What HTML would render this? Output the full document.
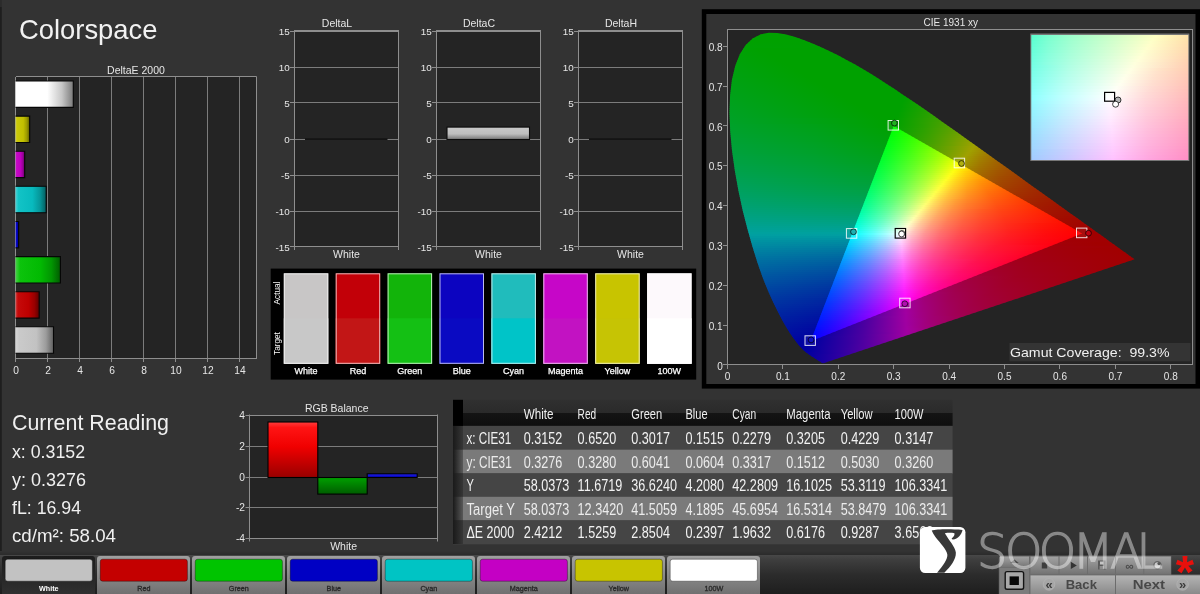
<!DOCTYPE html>
<html lang="en"><head><meta charset="utf-8"><title>Colorspace</title>
<style>
html,body{margin:0;padding:0;background:#333333;overflow:hidden}
svg{display:block;font-family:"Liberation Sans", sans-serif;will-change:transform}
</style></head><body>
<svg width="1200" height="594" viewBox="0 0 1200 594">
<defs>
<linearGradient id="bew100" x1="0" x2="1" y1="0" y2="0"><stop offset="0" stop-color="#ffffff"/><stop offset=".1" stop-color="#ffffff"/><stop offset=".55" stop-color="#ffffff"/><stop offset=".8" stop-color="#c7c7c7"/><stop offset="1" stop-color="#7a7a7a"/></linearGradient>
<linearGradient id="beyel" x1="0" x2="1" y1="0" y2="0"><stop offset="0" stop-color="#d7d647"/><stop offset=".1" stop-color="#cac80a"/><stop offset=".55" stop-color="#c2c000"/><stop offset=".8" stop-color="#9c9a00"/><stop offset="1" stop-color="#605f00"/></linearGradient>
<linearGradient id="bemag" x1="0" x2="1" y1="0" y2="0"><stop offset="0" stop-color="#d547d5"/><stop offset=".1" stop-color="#c60ac6"/><stop offset=".55" stop-color="#be00be"/><stop offset=".8" stop-color="#990099"/><stop offset="1" stop-color="#5e005e"/></linearGradient>
<linearGradient id="becya" x1="0" x2="1" y1="0" y2="0"><stop offset="0" stop-color="#4dd2d5"/><stop offset=".1" stop-color="#12c3c6"/><stop offset=".55" stop-color="#08babe"/><stop offset=".8" stop-color="#069699"/><stop offset="1" stop-color="#045c5e"/></linearGradient>
<linearGradient id="beblu" x1="0" x2="1" y1="0" y2="0"><stop offset="0" stop-color="#4747d5"/><stop offset=".1" stop-color="#0a0ac6"/><stop offset=".55" stop-color="#0000be"/><stop offset=".8" stop-color="#000099"/><stop offset="1" stop-color="#00005e"/></linearGradient>
<linearGradient id="begrn" x1="0" x2="1" y1="0" y2="0"><stop offset="0" stop-color="#49d249"/><stop offset=".1" stop-color="#0cc30c"/><stop offset=".55" stop-color="#02ba02"/><stop offset=".8" stop-color="#029602"/><stop offset="1" stop-color="#015c01"/></linearGradient>
<linearGradient id="bered" x1="0" x2="1" y1="0" y2="0"><stop offset="0" stop-color="#d54747"/><stop offset=".1" stop-color="#c60a0a"/><stop offset=".55" stop-color="#be0000"/><stop offset=".8" stop-color="#990000"/><stop offset="1" stop-color="#5e0000"/></linearGradient>
<linearGradient id="bewht" x1="0" x2="1" y1="0" y2="0"><stop offset="0" stop-color="#d7d7d7"/><stop offset=".1" stop-color="#cacaca"/><stop offset=".55" stop-color="#c2c2c2"/><stop offset=".8" stop-color="#9c9c9c"/><stop offset="1" stop-color="#606060"/></linearGradient>
<linearGradient id="bdc" x1="0" x2="0" y1="0" y2="1"><stop offset="0" stop-color="#cacaca"/><stop offset=".55" stop-color="#bebebe"/><stop offset="1" stop-color="#767676"/></linearGradient>
<clipPath id="hsclip"><path d="M824.0 363.1L824.0 363.1L823.9 363.1L823.9 363.1L823.9 363.1L823.8 363.1L823.8 363.1L823.7 363.1L823.6 363.1L823.6 363.2L823.5 363.2L823.5 363.2L823.4 363.2L823.3 363.2L823.2 363.2L823.1 363.2L823.0 363.2L822.9 363.2L822.8 363.2L822.7 363.1L822.5 363.1L822.2 363.0L822.0 362.9L821.7 362.7L821.4 362.5L821.1 362.3L820.7 362.1L820.2 361.8L819.7 361.5L819.2 361.2L818.6 360.8L817.9 360.3L817.2 359.9L816.3 359.3L815.4 358.7L814.3 358.0L813.1 357.3L811.8 356.5L810.4 355.6L808.9 354.5L807.3 353.3L805.5 351.9L803.6 350.2L801.5 348.1L799.0 345.4L796.3 342.1L793.3 338.1L790.0 333.2L786.4 327.4L782.4 320.4L778.1 312.2L773.3 302.6L768.2 291.3L763.0 278.4L757.8 263.8L752.7 247.5L747.6 229.6L742.7 210.4L738.4 190.6L734.8 170.5L732.0 150.4L730.2 131.0L729.5 112.7L730.1 95.6L731.9 79.9L735.2 66.0L739.8 54.3L745.7 45.0L752.6 38.4L760.4 34.4L768.7 32.7L777.3 32.9L786.2 34.5L795.3 37.1L804.4 40.2L813.2 43.8L821.8 47.5L830.2 51.4L838.5 55.5L846.6 59.9L854.7 64.3L862.8 69.0L870.8 73.8L878.7 78.8L886.7 83.9L894.6 89.1L902.5 94.4L910.5 99.7L918.4 105.1L926.3 110.6L934.2 116.1L942.1 121.7L950.0 127.2L957.9 132.8L965.8 138.4L973.6 143.9L981.3 149.5L989.0 155.0L996.6 160.4L1004.1 165.8L1011.5 171.1L1018.7 176.3L1025.9 181.4L1032.8 186.4L1039.6 191.2L1046.2 196.0L1052.6 200.5L1058.7 204.9L1064.4 209.0L1069.8 212.9L1074.9 216.6L1079.9 220.1L1084.5 223.4L1088.8 226.5L1092.7 229.3L1096.4 231.9L1099.8 234.3L1102.9 236.6L1105.7 238.6L1108.3 240.5L1110.7 242.2L1112.8 243.7L1114.8 245.1L1116.6 246.4L1118.2 247.6L1119.8 248.7L1121.2 249.7L1122.5 250.7L1123.7 251.5L1124.9 252.3L1125.9 253.1L1126.9 253.8L1127.7 254.4L1128.5 254.9L1129.2 255.4L1129.8 255.9L1130.3 256.2L1130.8 256.6L1131.2 256.9L1131.6 257.2L1132.0 257.4L1132.3 257.6L1132.5 257.8L1132.7 258.0L1132.9 258.1L1133.1 258.2L1133.3 258.4L1133.4 258.5L1133.6 258.6L1133.7 258.7L1133.9 258.8L1134.0 258.9L1134.2 259.0L1134.3 259.1L1134.4 259.2L1134.4 259.2L1134.5 259.2L1134.5 259.3L1134.6 259.3L1134.6 259.3L1134.6 259.3Z"/></clipPath>
<clipPath id="triclip"><path d="M1082.1 233.5L893.7 125.9L810.6 341.2Z"/></clipPath>
<linearGradient id="h0" gradientUnits="userSpaceOnUse" x1="760" x2="785" y1="0" y2="0"><stop offset="0" stop-color="#00a100"/><stop offset="1" stop-color="#00a100"/></linearGradient>
<linearGradient id="h1" gradientUnits="userSpaceOnUse" x1="755" x2="793" y1="0" y2="0"><stop offset="0" stop-color="#00a100"/><stop offset="1" stop-color="#00a100"/></linearGradient>
<linearGradient id="h2" gradientUnits="userSpaceOnUse" x1="752" x2="800" y1="0" y2="0"><stop offset="0" stop-color="#00a100"/><stop offset="1" stop-color="#00a100"/></linearGradient>
<linearGradient id="h3" gradientUnits="userSpaceOnUse" x1="749" x2="805" y1="0" y2="0"><stop offset="0" stop-color="#00a100"/><stop offset="1" stop-color="#00a100"/></linearGradient>
<linearGradient id="h4" gradientUnits="userSpaceOnUse" x1="747" x2="810" y1="0" y2="0"><stop offset="0" stop-color="#00a100"/><stop offset="1" stop-color="#00a100"/></linearGradient>
<linearGradient id="h5" gradientUnits="userSpaceOnUse" x1="745" x2="815" y1="0" y2="0"><stop offset="0" stop-color="#00a101"/><stop offset="1" stop-color="#00a100"/></linearGradient>
<linearGradient id="h6" gradientUnits="userSpaceOnUse" x1="743" x2="820" y1="0" y2="0"><stop offset="0" stop-color="#00a102"/><stop offset="1" stop-color="#00a100"/></linearGradient>
<linearGradient id="h7" gradientUnits="userSpaceOnUse" x1="742" x2="824" y1="0" y2="0"><stop offset="0" stop-color="#00a103"/><stop offset="1" stop-color="#00a100"/></linearGradient>
<linearGradient id="h8" gradientUnits="userSpaceOnUse" x1="741" x2="829" y1="0" y2="0"><stop offset="0" stop-color="#00a104"/><stop offset=".205" stop-color="#00a100"/><stop offset="1" stop-color="#00a100"/></linearGradient>
<linearGradient id="h9" gradientUnits="userSpaceOnUse" x1="740" x2="833" y1="0" y2="0"><stop offset="0" stop-color="#00a104"/><stop offset=".247" stop-color="#00a100"/><stop offset="1" stop-color="#00a100"/></linearGradient>
<linearGradient id="h10" gradientUnits="userSpaceOnUse" x1="738" x2="837" y1="0" y2="0"><stop offset="0" stop-color="#00a106"/><stop offset=".283" stop-color="#00a100"/><stop offset="1" stop-color="#00a100"/></linearGradient>
<linearGradient id="h11" gradientUnits="userSpaceOnUse" x1="738" x2="841" y1="0" y2="0"><stop offset="0" stop-color="#00a106"/><stop offset=".311" stop-color="#00a100"/><stop offset="1" stop-color="#00a100"/></linearGradient>
<linearGradient id="h12" gradientUnits="userSpaceOnUse" x1="737" x2="845" y1="0" y2="0"><stop offset="0" stop-color="#00a107"/><stop offset=".333" stop-color="#00a100"/><stop offset="1" stop-color="#00a100"/></linearGradient>
<linearGradient id="h13" gradientUnits="userSpaceOnUse" x1="736" x2="848" y1="0" y2="0"><stop offset="0" stop-color="#00a108"/><stop offset=".366" stop-color="#00a100"/><stop offset="1" stop-color="#00a100"/></linearGradient>
<linearGradient id="h14" gradientUnits="userSpaceOnUse" x1="735" x2="852" y1="0" y2="0"><stop offset="0" stop-color="#00a109"/><stop offset=".385" stop-color="#00a100"/><stop offset="1" stop-color="#00a100"/></linearGradient>
<linearGradient id="h15" gradientUnits="userSpaceOnUse" x1="734" x2="856" y1="0" y2="0"><stop offset="0" stop-color="#00a10a"/><stop offset=".41" stop-color="#00a100"/><stop offset="1" stop-color="#00a100"/></linearGradient>
<linearGradient id="h16" gradientUnits="userSpaceOnUse" x1="734" x2="859" y1="0" y2="0"><stop offset="0" stop-color="#00a10b"/><stop offset=".424" stop-color="#00a100"/><stop offset="1" stop-color="#00a100"/></linearGradient>
<linearGradient id="h17" gradientUnits="userSpaceOnUse" x1="733" x2="863" y1="0" y2="0"><stop offset="0" stop-color="#00a10c"/><stop offset=".446" stop-color="#00a100"/><stop offset="1" stop-color="#00a100"/></linearGradient>
<linearGradient id="h18" gradientUnits="userSpaceOnUse" x1="733" x2="866" y1="0" y2="0"><stop offset="0" stop-color="#00a10d"/><stop offset=".459" stop-color="#00a100"/><stop offset="1" stop-color="#00a100"/></linearGradient>
<linearGradient id="h19" gradientUnits="userSpaceOnUse" x1="732" x2="869" y1="0" y2="0"><stop offset="0" stop-color="#00a10e"/><stop offset=".482" stop-color="#00a100"/><stop offset="1" stop-color="#00a100"/></linearGradient>
<linearGradient id="h20" gradientUnits="userSpaceOnUse" x1="732" x2="873" y1="0" y2="0"><stop offset="0" stop-color="#00a10f"/><stop offset=".489" stop-color="#00a100"/><stop offset="1" stop-color="#00a100"/></linearGradient>
<linearGradient id="h21" gradientUnits="userSpaceOnUse" x1="731" x2="876" y1="0" y2="0"><stop offset="0" stop-color="#00a110"/><stop offset=".51" stop-color="#00a100"/><stop offset="1" stop-color="#00a100"/></linearGradient>
<linearGradient id="h22" gradientUnits="userSpaceOnUse" x1="731" x2="879" y1="0" y2="0"><stop offset="0" stop-color="#00a110"/><stop offset=".52" stop-color="#00a100"/><stop offset="1" stop-color="#00a100"/></linearGradient>
<linearGradient id="h23" gradientUnits="userSpaceOnUse" x1="730" x2="882" y1="0" y2="0"><stop offset="0" stop-color="#00a112"/><stop offset=".539" stop-color="#00a100"/><stop offset="1" stop-color="#00a100"/></linearGradient>
<linearGradient id="h24" gradientUnits="userSpaceOnUse" x1="730" x2="885" y1="0" y2="0"><stop offset="0" stop-color="#00a112"/><stop offset=".548" stop-color="#00a100"/><stop offset="1" stop-color="#00a100"/></linearGradient>
<linearGradient id="h25" gradientUnits="userSpaceOnUse" x1="730" x2="888" y1="0" y2="0"><stop offset="0" stop-color="#00a113"/><stop offset=".563" stop-color="#00a100"/><stop offset="1" stop-color="#00a100"/></linearGradient>
<linearGradient id="h26" gradientUnits="userSpaceOnUse" x1="730" x2="891" y1="0" y2="0"><stop offset="0" stop-color="#00a114"/><stop offset=".571" stop-color="#00a100"/><stop offset="1" stop-color="#00a100"/></linearGradient>
<linearGradient id="h27" gradientUnits="userSpaceOnUse" x1="729" x2="894" y1="0" y2="0"><stop offset="0" stop-color="#00a115"/><stop offset=".588" stop-color="#00a100"/><stop offset="1" stop-color="#00a100"/></linearGradient>
<linearGradient id="h28" gradientUnits="userSpaceOnUse" x1="729" x2="898" y1="0" y2="0"><stop offset="0" stop-color="#00a116"/><stop offset=".592" stop-color="#00a100"/><stop offset="1" stop-color="#00a100"/></linearGradient>
<linearGradient id="h29" gradientUnits="userSpaceOnUse" x1="729" x2="901" y1="0" y2="0"><stop offset="0" stop-color="#00a117"/><stop offset=".605" stop-color="#00a100"/><stop offset="1" stop-color="#00a100"/></linearGradient>
<linearGradient id="h30" gradientUnits="userSpaceOnUse" x1="729" x2="904" y1="0" y2="0"><stop offset="0" stop-color="#00a118"/><stop offset=".611" stop-color="#00a100"/><stop offset="1" stop-color="#00a100"/></linearGradient>
<linearGradient id="h31" gradientUnits="userSpaceOnUse" x1="729" x2="906" y1="0" y2="0"><stop offset="0" stop-color="#00a119"/><stop offset=".627" stop-color="#00a100"/><stop offset="1" stop-color="#00a100"/></linearGradient>
<linearGradient id="h32" gradientUnits="userSpaceOnUse" x1="728" x2="909" y1="0" y2="0"><stop offset="0" stop-color="#00a11a"/><stop offset=".635" stop-color="#00a100"/><stop offset=".972" stop-color="#00a100"/><stop offset="1" stop-color="#05a100"/></linearGradient>
<linearGradient id="h33" gradientUnits="userSpaceOnUse" x1="728" x2="912" y1="0" y2="0"><stop offset="0" stop-color="#00a11b"/><stop offset=".647" stop-color="#00a100"/><stop offset=".957" stop-color="#00a100"/><stop offset="1" stop-color="#09a100"/></linearGradient>
<linearGradient id="h34" gradientUnits="userSpaceOnUse" x1="728" x2="915" y1="0" y2="0"><stop offset="0" stop-color="#00a11c"/><stop offset=".652" stop-color="#00a100"/><stop offset=".936" stop-color="#00a100"/><stop offset="1" stop-color="#0ea100"/></linearGradient>
<linearGradient id="h35" gradientUnits="userSpaceOnUse" x1="728" x2="918" y1="0" y2="0"><stop offset="0" stop-color="#00a11d"/><stop offset=".663" stop-color="#00a100"/><stop offset=".916" stop-color="#00a100"/><stop offset="1" stop-color="#13a100"/></linearGradient>
<linearGradient id="h36" gradientUnits="userSpaceOnUse" x1="728" x2="921" y1="0" y2="0"><stop offset="0" stop-color="#00a11e"/><stop offset=".668" stop-color="#00a100"/><stop offset=".896" stop-color="#00a100"/><stop offset="1" stop-color="#18a100"/></linearGradient>
<linearGradient id="h37" gradientUnits="userSpaceOnUse" x1="728" x2="924" y1="0" y2="0"><stop offset="0" stop-color="#00a11f"/><stop offset=".679" stop-color="#00a100"/><stop offset=".883" stop-color="#00a100"/><stop offset="1" stop-color="#1da100"/></linearGradient>
<linearGradient id="h38" gradientUnits="userSpaceOnUse" x1="728" x2="927" y1="0" y2="0"><stop offset="0" stop-color="#00a120"/><stop offset=".683" stop-color="#00a100"/><stop offset=".864" stop-color="#00a100"/><stop offset="1" stop-color="#22a100"/></linearGradient>
<linearGradient id="h39" gradientUnits="userSpaceOnUse" x1="728" x2="930" y1="0" y2="0"><stop offset="0" stop-color="#00a122"/><stop offset=".693" stop-color="#00a100"/><stop offset=".847" stop-color="#00a100"/><stop offset="1" stop-color="#27a100"/></linearGradient>
<linearGradient id="h40" gradientUnits="userSpaceOnUse" x1="728" x2="933" y1="0" y2="0"><stop offset="0" stop-color="#00a123"/><stop offset=".698" stop-color="#00a100"/><stop offset=".829" stop-color="#00a100"/><stop offset="1" stop-color="#2da100"/></linearGradient>
<linearGradient id="h41" gradientUnits="userSpaceOnUse" x1="728" x2="936" y1="0" y2="0"><stop offset="0" stop-color="#00a124"/><stop offset=".707" stop-color="#00a100"/><stop offset=".817" stop-color="#00a100"/><stop offset="1" stop-color="#33a100"/></linearGradient>
<linearGradient id="h42" gradientUnits="userSpaceOnUse" x1="728" x2="938" y1="0" y2="0"><stop offset="0" stop-color="#00a125"/><stop offset=".714" stop-color="#00a100"/><stop offset=".805" stop-color="#00a100"/><stop offset="1" stop-color="#37a100"/></linearGradient>
<linearGradient id="h43" gradientUnits="userSpaceOnUse" x1="728" x2="941" y1="0" y2="0"><stop offset="0" stop-color="#00a126"/><stop offset=".385" stop-color="#00a114"/><stop offset=".718" stop-color="#00a100"/><stop offset=".789" stop-color="#00a100"/><stop offset="1" stop-color="#3ea100"/></linearGradient>
<linearGradient id="h44" gradientUnits="userSpaceOnUse" x1="728" x2="944" y1="0" y2="0"><stop offset="0" stop-color="#00a127"/><stop offset=".773" stop-color="#00a100"/><stop offset="1" stop-color="#44a100"/></linearGradient>
<linearGradient id="h45" gradientUnits="userSpaceOnUse" x1="728" x2="947" y1="0" y2="0"><stop offset="0" stop-color="#00a128"/><stop offset=".763" stop-color="#00a100"/><stop offset="1" stop-color="#4ba100"/></linearGradient>
<linearGradient id="h46" gradientUnits="userSpaceOnUse" x1="728" x2="950" y1="0" y2="0"><stop offset="0" stop-color="#00a12a"/><stop offset=".383" stop-color="#00a117"/><stop offset=".748" stop-color="#00a100"/><stop offset=".878" stop-color="#28a100"/><stop offset="1" stop-color="#52a100"/></linearGradient>
<linearGradient id="h47" gradientUnits="userSpaceOnUse" x1="728" x2="953" y1="0" y2="0"><stop offset="0" stop-color="#00a12b"/><stop offset=".396" stop-color="#00a117"/><stop offset=".733" stop-color="#00a101"/><stop offset=".867" stop-color="#29a100"/><stop offset="1" stop-color="#59a100"/></linearGradient>
<linearGradient id="h48" gradientUnits="userSpaceOnUse" x1="729" x2="955" y1="0" y2="0"><stop offset="0" stop-color="#00a12c"/><stop offset=".389" stop-color="#00a119"/><stop offset=".721" stop-color="#00a103"/><stop offset=".858" stop-color="#2ba100"/><stop offset="1" stop-color="#5fa100"/></linearGradient>
<linearGradient id="h49" gradientUnits="userSpaceOnUse" x1="729" x2="958" y1="0" y2="0"><stop offset="0" stop-color="#00a12d"/><stop offset=".384" stop-color="#00a11a"/><stop offset=".712" stop-color="#00a104"/><stop offset=".76" stop-color="#0fa100"/><stop offset=".86" stop-color="#31a100"/><stop offset="1" stop-color="#67a100"/></linearGradient>
<linearGradient id="h50" gradientUnits="userSpaceOnUse" x1="729" x2="961" y1="0" y2="0"><stop offset="0" stop-color="#00a12e"/><stop offset=".375" stop-color="#00a11c"/><stop offset=".698" stop-color="#00a105"/><stop offset=".763" stop-color="#15a100"/><stop offset=".853" stop-color="#34a100"/><stop offset="1" stop-color="#6fa100"/></linearGradient>
<linearGradient id="h51" gradientUnits="userSpaceOnUse" x1="729" x2="964" y1="0" y2="0"><stop offset="0" stop-color="#00a130"/><stop offset=".37" stop-color="#00a11d"/><stop offset=".685" stop-color="#00a107"/><stop offset=".77" stop-color="#1ca100"/><stop offset=".847" stop-color="#38a100"/><stop offset="1" stop-color="#78a100"/></linearGradient>
<linearGradient id="h52" gradientUnits="userSpaceOnUse" x1="729" x2="967" y1="0" y2="0"><stop offset="0" stop-color="#00a131"/><stop offset=".361" stop-color="#00a11f"/><stop offset=".672" stop-color="#00a109"/><stop offset=".773" stop-color="#22a100"/><stop offset=".84" stop-color="#3ba100"/><stop offset="1" stop-color="#81a100"/></linearGradient>
<linearGradient id="h53" gradientUnits="userSpaceOnUse" x1="729" x2="970" y1="0" y2="0"><stop offset="0" stop-color="#00a133"/><stop offset=".357" stop-color="#00a120"/><stop offset=".664" stop-color="#00a10a"/><stop offset=".78" stop-color="#2aa100"/><stop offset=".842" stop-color="#42a100"/><stop offset="1" stop-color="#8aa100"/></linearGradient>
<linearGradient id="h54" gradientUnits="userSpaceOnUse" x1="729" x2="972" y1="0" y2="0"><stop offset="0" stop-color="#00a134"/><stop offset=".354" stop-color="#00a121"/><stop offset=".654" stop-color="#00a10c"/><stop offset=".786" stop-color="#30a100"/><stop offset=".835" stop-color="#44a100"/><stop offset="1" stop-color="#92a100"/></linearGradient>
<linearGradient id="h55" gradientUnits="userSpaceOnUse" x1="730" x2="975" y1="0" y2="0"><stop offset="0" stop-color="#00a135"/><stop offset=".347" stop-color="#00a123"/><stop offset=".641" stop-color="#00a10e"/><stop offset=".788" stop-color="#37a100"/><stop offset=".829" stop-color="#48a100"/><stop offset="1" stop-color="#9ca100"/></linearGradient>
<linearGradient id="h56" gradientUnits="userSpaceOnUse" x1="730" x2="978" y1="0" y2="0"><stop offset="0" stop-color="#00a137"/><stop offset=".339" stop-color="#00a125"/><stop offset=".629" stop-color="#00a110"/><stop offset=".794" stop-color="#40a100"/><stop offset=".895" stop-color="#6ea100"/><stop offset=".988" stop-color="#9fa100"/><stop offset="1" stop-color="#a19b00"/></linearGradient>
<linearGradient id="h57" gradientUnits="userSpaceOnUse" x1="730" x2="981" y1="0" y2="0"><stop offset="0" stop-color="#00a138"/><stop offset=".335" stop-color="#00a126"/><stop offset=".622" stop-color="#01a111"/><stop offset=".805" stop-color="#4ba100"/><stop offset=".968" stop-color="#9fa100"/><stop offset="1" stop-color="#a19100"/></linearGradient>
<linearGradient id="h58" gradientUnits="userSpaceOnUse" x1="730" x2="984" y1="0" y2="0"><stop offset="0" stop-color="#00a139"/><stop offset=".331" stop-color="#00a128"/><stop offset=".61" stop-color="#00a113"/><stop offset=".791" stop-color="#4ba101"/><stop offset=".874" stop-color="#74a100"/><stop offset=".953" stop-color="#a0a100"/><stop offset="1" stop-color="#a18800"/></linearGradient>
<linearGradient id="h59" gradientUnits="userSpaceOnUse" x1="730" x2="986" y1="0" y2="0"><stop offset="0" stop-color="#00a13b"/><stop offset=".324" stop-color="#00a12a"/><stop offset=".602" stop-color="#00a115"/><stop offset=".777" stop-color="#4aa104"/><stop offset=".812" stop-color="#5ba100"/><stop offset=".938" stop-color="#a0a100"/><stop offset="1" stop-color="#a18200"/></linearGradient>
<linearGradient id="h60" gradientUnits="userSpaceOnUse" x1="731" x2="989" y1="0" y2="0"><stop offset="0" stop-color="#00a13c"/><stop offset=".318" stop-color="#00a12b"/><stop offset=".589" stop-color="#00a117"/><stop offset=".764" stop-color="#4aa106"/><stop offset=".814" stop-color="#64a100"/><stop offset=".919" stop-color="#9fa100"/><stop offset="1" stop-color="#a17a00"/></linearGradient>
<linearGradient id="h61" gradientUnits="userSpaceOnUse" x1="731" x2="992" y1="0" y2="0"><stop offset="0" stop-color="#00a13e"/><stop offset=".314" stop-color="#00a12d"/><stop offset=".579" stop-color="#00a119"/><stop offset=".659" stop-color="#20a112"/><stop offset=".747" stop-color="#49a108"/><stop offset=".82" stop-color="#6fa100"/><stop offset=".904" stop-color="#a0a100"/><stop offset=".95" stop-color="#a18800"/><stop offset="1" stop-color="#a17200"/></linearGradient>
<linearGradient id="h62" gradientUnits="userSpaceOnUse" x1="731" x2="995" y1="0" y2="0"><stop offset="0" stop-color="#00a140"/><stop offset=".311" stop-color="#00a12f"/><stop offset=".572" stop-color="#00a11b"/><stop offset=".739" stop-color="#4ba10a"/><stop offset=".822" stop-color="#78a100"/><stop offset=".886" stop-color="#a0a100"/><stop offset=".943" stop-color="#a18200"/><stop offset="1" stop-color="#a16b00"/></linearGradient>
<linearGradient id="h63" gradientUnits="userSpaceOnUse" x1="731" x2="998" y1="0" y2="0"><stop offset="0" stop-color="#00a141"/><stop offset=".303" stop-color="#00a131"/><stop offset=".562" stop-color="#00a11d"/><stop offset=".723" stop-color="#4aa10d"/><stop offset=".828" stop-color="#85a100"/><stop offset=".873" stop-color="#a1a000"/><stop offset=".933" stop-color="#a17f00"/><stop offset="1" stop-color="#a16500"/></linearGradient>
<linearGradient id="h64" gradientUnits="userSpaceOnUse" x1="732" x2="1000" y1="0" y2="0"><stop offset="0" stop-color="#00a143"/><stop offset=".299" stop-color="#00a132"/><stop offset=".552" stop-color="#00a11f"/><stop offset=".713" stop-color="#4aa10f"/><stop offset=".787" stop-color="#74a106"/><stop offset=".858" stop-color="#a0a100"/><stop offset=".922" stop-color="#a17e00"/><stop offset="1" stop-color="#a16000"/></linearGradient>
<linearGradient id="h65" gradientUnits="userSpaceOnUse" x1="732" x2="1003" y1="0" y2="0"><stop offset="0" stop-color="#00a144"/><stop offset=".292" stop-color="#00a134"/><stop offset=".542" stop-color="#00a121"/><stop offset=".697" stop-color="#49a112"/><stop offset=".771" stop-color="#73a109"/><stop offset=".841" stop-color="#a0a100"/><stop offset=".915" stop-color="#a17900"/><stop offset="1" stop-color="#a15a00"/></linearGradient>
<linearGradient id="h66" gradientUnits="userSpaceOnUse" x1="732" x2="1006" y1="0" y2="0"><stop offset="0" stop-color="#00a146"/><stop offset=".288" stop-color="#00a136"/><stop offset=".533" stop-color="#00a124"/><stop offset=".602" stop-color="#1ea11d"/><stop offset=".682" stop-color="#47a114"/><stop offset=".828" stop-color="#a1a002"/><stop offset=".905" stop-color="#a17600"/><stop offset="1" stop-color="#a15500"/></linearGradient>
<linearGradient id="h67" gradientUnits="userSpaceOnUse" x1="733" x2="1009" y1="0" y2="0"><stop offset="0" stop-color="#00a148"/><stop offset=".283" stop-color="#00a138"/><stop offset=".525" stop-color="#00a126"/><stop offset=".678" stop-color="#4ca116"/><stop offset=".746" stop-color="#75a10e"/><stop offset=".812" stop-color="#a1a105"/><stop offset=".851" stop-color="#a18800"/><stop offset=".895" stop-color="#a17300"/><stop offset="1" stop-color="#a15000"/></linearGradient>
<linearGradient id="h68" gradientUnits="userSpaceOnUse" x1="733" x2="1011" y1="0" y2="0"><stop offset="0" stop-color="#00a149"/><stop offset=".281" stop-color="#00a13a"/><stop offset=".518" stop-color="#00a128"/><stop offset=".665" stop-color="#4aa119"/><stop offset=".734" stop-color="#74a111"/><stop offset=".799" stop-color="#a0a108"/><stop offset=".849" stop-color="#a18200"/><stop offset=".888" stop-color="#a17000"/><stop offset="1" stop-color="#a14c00"/></linearGradient>
<linearGradient id="h69" gradientUnits="userSpaceOnUse" x1="733" x2="1014" y1="0" y2="0"><stop offset="0" stop-color="#00a14b"/><stop offset=".274" stop-color="#00a13c"/><stop offset=".509" stop-color="#00a12a"/><stop offset=".651" stop-color="#49a11c"/><stop offset=".786" stop-color="#a1a00a"/><stop offset=".829" stop-color="#a18503"/><stop offset=".879" stop-color="#a16d00"/><stop offset=".936" stop-color="#a15800"/><stop offset="1" stop-color="#a14700"/></linearGradient>
<linearGradient id="h70" gradientUnits="userSpaceOnUse" x1="734" x2="1017" y1="0" y2="0"><stop offset="0" stop-color="#00a14d"/><stop offset=".269" stop-color="#00a13e"/><stop offset=".498" stop-color="#00a12d"/><stop offset=".565" stop-color="#20a126"/><stop offset=".64" stop-color="#49a11e"/><stop offset=".707" stop-color="#73a116"/><stop offset=".77" stop-color="#a1a10e"/><stop offset=".816" stop-color="#a18305"/><stop offset=".869" stop-color="#a16a00"/><stop offset=".929" stop-color="#a15500"/><stop offset="1" stop-color="#a14300"/></linearGradient>
<linearGradient id="h71" gradientUnits="userSpaceOnUse" x1="734" x2="1020" y1="0" y2="0"><stop offset="0" stop-color="#00a14f"/><stop offset=".266" stop-color="#00a140"/><stop offset=".493" stop-color="#00a12f"/><stop offset=".633" stop-color="#4ca121"/><stop offset=".755" stop-color="#a0a111"/><stop offset=".804" stop-color="#a18108"/><stop offset=".86" stop-color="#a16700"/><stop offset=".923" stop-color="#a15200"/><stop offset="1" stop-color="#a13f00"/></linearGradient>
<linearGradient id="h72" gradientUnits="userSpaceOnUse" x1="734" x2="1023" y1="0" y2="0"><stop offset="0" stop-color="#00a151"/><stop offset=".263" stop-color="#00a142"/><stop offset=".484" stop-color="#00a132"/><stop offset=".619" stop-color="#4aa124"/><stop offset=".744" stop-color="#a1a014"/><stop offset=".792" stop-color="#a1800a"/><stop offset=".851" stop-color="#a16401"/><stop offset=".92" stop-color="#a14d00"/><stop offset="1" stop-color="#a13b00"/></linearGradient>
<linearGradient id="h73" gradientUnits="userSpaceOnUse" x1="735" x2="1025" y1="0" y2="0"><stop offset="0" stop-color="#00a153"/><stop offset=".259" stop-color="#00a145"/><stop offset=".476" stop-color="#00a134"/><stop offset=".61" stop-color="#4ba127"/><stop offset=".672" stop-color="#74a11f"/><stop offset=".731" stop-color="#a1a117"/><stop offset=".783" stop-color="#a17e0c"/><stop offset=".841" stop-color="#a16303"/><stop offset=".914" stop-color="#a14b00"/><stop offset="1" stop-color="#a13800"/></linearGradient>
<linearGradient id="h74" gradientUnits="userSpaceOnUse" x1="735" x2="1028" y1="0" y2="0"><stop offset="0" stop-color="#00a155"/><stop offset=".468" stop-color="#00a137"/><stop offset=".529" stop-color="#20a131"/><stop offset=".597" stop-color="#49a12a"/><stop offset=".659" stop-color="#73a123"/><stop offset=".717" stop-color="#a0a11b"/><stop offset=".771" stop-color="#a17c0e"/><stop offset=".833" stop-color="#a16005"/><stop offset=".908" stop-color="#a14800"/><stop offset="1" stop-color="#a13400"/></linearGradient>
<linearGradient id="h75" gradientUnits="userSpaceOnUse" x1="735" x2="1031" y1="0" y2="0"><stop offset="0" stop-color="#00a157"/><stop offset=".463" stop-color="#01a139"/><stop offset=".591" stop-color="#4ca12c"/><stop offset=".703" stop-color="#9fa11e"/><stop offset=".76" stop-color="#a17b10"/><stop offset=".824" stop-color="#a15d06"/><stop offset=".902" stop-color="#a14500"/><stop offset="1" stop-color="#a13100"/></linearGradient>
<linearGradient id="h76" gradientUnits="userSpaceOnUse" x1="736" x2="1034" y1="0" y2="0"><stop offset="0" stop-color="#00a159"/><stop offset=".453" stop-color="#00a13c"/><stop offset=".577" stop-color="#4aa130"/><stop offset=".691" stop-color="#a1a021"/><stop offset=".748" stop-color="#a17913"/><stop offset=".815" stop-color="#a15b07"/><stop offset=".876" stop-color="#a14700"/><stop offset="1" stop-color="#a12d00"/></linearGradient>
<linearGradient id="h77" gradientUnits="userSpaceOnUse" x1="736" x2="1037" y1="0" y2="0"><stop offset="0" stop-color="#00a15b"/><stop offset=".445" stop-color="#00a13f"/><stop offset=".568" stop-color="#4ba133"/><stop offset=".625" stop-color="#74a12c"/><stop offset=".678" stop-color="#a0a125"/><stop offset=".734" stop-color="#a17916"/><stop offset=".804" stop-color="#a15909"/><stop offset=".88" stop-color="#a14200"/><stop offset="1" stop-color="#a12a00"/></linearGradient>
<linearGradient id="h78" gradientUnits="userSpaceOnUse" x1="736" x2="1039" y1="0" y2="0"><stop offset="0" stop-color="#00a15d"/><stop offset=".439" stop-color="#00a142"/><stop offset=".558" stop-color="#49a137"/><stop offset=".614" stop-color="#73a130"/><stop offset=".667" stop-color="#9fa129"/><stop offset=".729" stop-color="#a17617"/><stop offset=".799" stop-color="#a1570a"/><stop offset=".884" stop-color="#a13d00"/><stop offset="1" stop-color="#a12800"/></linearGradient>
<linearGradient id="h79" gradientUnits="userSpaceOnUse" x1="737" x2="1042" y1="0" y2="0"><stop offset="0" stop-color="#00a15f"/><stop offset=".433" stop-color="#01a145"/><stop offset=".548" stop-color="#4aa13a"/><stop offset=".6" stop-color="#71a134"/><stop offset=".652" stop-color="#9ea12d"/><stop offset=".718" stop-color="#a17419"/><stop offset=".79" stop-color="#a1540c"/><stop offset=".889" stop-color="#a13900"/><stop offset="1" stop-color="#a12500"/></linearGradient>
<linearGradient id="h80" gradientUnits="userSpaceOnUse" x1="737" x2="1045" y1="0" y2="0"><stop offset="0" stop-color="#00a162"/><stop offset=".425" stop-color="#00a148"/><stop offset=".539" stop-color="#4aa13d"/><stop offset=".591" stop-color="#73a137"/><stop offset=".643" stop-color="#a0a131"/><stop offset=".672" stop-color="#a18926"/><stop offset=".705" stop-color="#a1741d"/><stop offset=".779" stop-color="#a1520d"/><stop offset=".89" stop-color="#a13500"/><stop offset="1" stop-color="#a12200"/></linearGradient>
<linearGradient id="h81" gradientUnits="userSpaceOnUse" x1="738" x2="1048" y1="0" y2="0"><stop offset="0" stop-color="#00a164"/><stop offset=".416" stop-color="#00a14b"/><stop offset=".529" stop-color="#4ba141"/><stop offset=".629" stop-color="#9fa135"/><stop offset=".694" stop-color="#a1721f"/><stop offset=".771" stop-color="#a1500f"/><stop offset=".89" stop-color="#a13100"/><stop offset="1" stop-color="#a12000"/></linearGradient>
<linearGradient id="h82" gradientUnits="userSpaceOnUse" x1="738" x2="1051" y1="0" y2="0"><stop offset="0" stop-color="#00a166"/><stop offset=".409" stop-color="#00a14f"/><stop offset=".518" stop-color="#49a145"/><stop offset=".569" stop-color="#72a13f"/><stop offset=".617" stop-color="#9ea139"/><stop offset=".684" stop-color="#a17121"/><stop offset=".764" stop-color="#a14d10"/><stop offset=".824" stop-color="#a13c07"/><stop offset=".895" stop-color="#a12d00"/><stop offset="1" stop-color="#a11d00"/></linearGradient>
<linearGradient id="h83" gradientUnits="userSpaceOnUse" x1="738" x2="1053" y1="0" y2="0"><stop offset="0" stop-color="#00a169"/><stop offset=".403" stop-color="#00a152"/><stop offset=".454" stop-color="#20a14e"/><stop offset=".511" stop-color="#4aa148"/><stop offset=".562" stop-color="#74a143"/><stop offset=".61" stop-color="#a0a13d"/><stop offset=".641" stop-color="#a1862f"/><stop offset=".673" stop-color="#a17125"/><stop offset=".756" stop-color="#a14c12"/><stop offset=".822" stop-color="#a13908"/><stop offset=".898" stop-color="#a12900"/><stop offset="1" stop-color="#a11b00"/></linearGradient>
<linearGradient id="h84" gradientUnits="userSpaceOnUse" x1="739" x2="1056" y1="0" y2="0"><stop offset="0" stop-color="#00a16b"/><stop offset=".397" stop-color="#01a155"/><stop offset=".502" stop-color="#4aa14c"/><stop offset=".549" stop-color="#72a147"/><stop offset=".596" stop-color="#9fa142"/><stop offset=".631" stop-color="#a18432"/><stop offset=".662" stop-color="#a16f27"/><stop offset=".744" stop-color="#a14b14"/><stop offset=".817" stop-color="#a13609"/><stop offset=".902" stop-color="#a12600"/><stop offset="1" stop-color="#a11900"/></linearGradient>
<linearGradient id="h85" gradientUnits="userSpaceOnUse" x1="739" x2="1059" y1="0" y2="0"><stop offset="0" stop-color="#00a16e"/><stop offset=".391" stop-color="#00a159"/><stop offset=".494" stop-color="#4ba150"/><stop offset=".584" stop-color="#9ea146"/><stop offset=".622" stop-color="#a18235"/><stop offset=".653" stop-color="#a16d29"/><stop offset=".694" stop-color="#a1591e"/><stop offset=".738" stop-color="#a14815"/><stop offset=".812" stop-color="#a13309"/><stop offset=".903" stop-color="#a12300"/><stop offset="1" stop-color="#a11600"/></linearGradient>
<linearGradient id="h86" gradientUnits="userSpaceOnUse" x1="740" x2="1062" y1="0" y2="0"><stop offset="0" stop-color="#00a170"/><stop offset=".382" stop-color="#00a15d"/><stop offset=".484" stop-color="#4ca154"/><stop offset=".531" stop-color="#75a14f"/><stop offset=".575" stop-color="#a0a14a"/><stop offset=".606" stop-color="#a1843a"/><stop offset=".64" stop-color="#a16d2d"/><stop offset=".68" stop-color="#a15821"/><stop offset=".727" stop-color="#a14717"/><stop offset=".807" stop-color="#a1310a"/><stop offset=".904" stop-color="#a12000"/><stop offset="1" stop-color="#a11400"/></linearGradient>
<linearGradient id="h87" gradientUnits="userSpaceOnUse" x1="740" x2="1064" y1="0" y2="0"><stop offset="0" stop-color="#00a173"/><stop offset=".377" stop-color="#00a160"/><stop offset=".423" stop-color="#20a15d"/><stop offset=".475" stop-color="#4aa158"/><stop offset=".522" stop-color="#73a154"/><stop offset=".565" stop-color="#9fa14f"/><stop offset=".599" stop-color="#a1823d"/><stop offset=".633" stop-color="#a16b2f"/><stop offset=".673" stop-color="#a15723"/><stop offset=".719" stop-color="#a14518"/><stop offset=".796" stop-color="#a1300c"/><stop offset=".892" stop-color="#a11f02"/><stop offset="1" stop-color="#a11200"/></linearGradient>
<linearGradient id="h88" gradientUnits="userSpaceOnUse" x1="741" x2="1067" y1="0" y2="0"><stop offset="0" stop-color="#00a176"/><stop offset=".371" stop-color="#01a164"/><stop offset=".466" stop-color="#4aa15d"/><stop offset=".552" stop-color="#9ea154"/><stop offset=".589" stop-color="#a18040"/><stop offset=".623" stop-color="#a16932"/><stop offset=".663" stop-color="#a15525"/><stop offset=".712" stop-color="#a1431a"/><stop offset=".788" stop-color="#a12e0d"/><stop offset=".883" stop-color="#a11e03"/><stop offset="1" stop-color="#a11000"/></linearGradient>
<linearGradient id="h89" gradientUnits="userSpaceOnUse" x1="741" x2="1070" y1="0" y2="0"><stop offset="0" stop-color="#00a179"/><stop offset=".365" stop-color="#00a168"/><stop offset=".459" stop-color="#4ba161"/><stop offset=".502" stop-color="#73a15d"/><stop offset=".544" stop-color="#a0a159"/><stop offset=".574" stop-color="#a18346"/><stop offset=".611" stop-color="#a16935"/><stop offset=".653" stop-color="#a15427"/><stop offset=".702" stop-color="#a1411b"/><stop offset=".827" stop-color="#a12408"/><stop offset=".918" stop-color="#a11700"/><stop offset="1" stop-color="#a10e00"/></linearGradient>
<linearGradient id="h90" gradientUnits="userSpaceOnUse" x1="742" x2="1073" y1="0" y2="0"><stop offset="0" stop-color="#00a17c"/><stop offset=".356" stop-color="#00a16c"/><stop offset=".45" stop-color="#4ca166"/><stop offset=".532" stop-color="#9fa15f"/><stop offset=".565" stop-color="#a18149"/><stop offset=".601" stop-color="#a16838"/><stop offset=".644" stop-color="#a15229"/><stop offset=".695" stop-color="#a13f1d"/><stop offset=".77" stop-color="#a12b0f"/><stop offset=".864" stop-color="#a11b05"/><stop offset=".918" stop-color="#a11500"/><stop offset="1" stop-color="#a10c00"/></linearGradient>
<linearGradient id="h91" gradientUnits="userSpaceOnUse" x1="742" x2="1076" y1="0" y2="0"><stop offset="0" stop-color="#00a17f"/><stop offset=".35" stop-color="#00a170"/><stop offset=".392" stop-color="#20a16e"/><stop offset=".44" stop-color="#4aa16b"/><stop offset=".482" stop-color="#73a167"/><stop offset=".521" stop-color="#9ea164"/><stop offset=".557" stop-color="#a17f4c"/><stop offset=".593" stop-color="#a1663b"/><stop offset=".635" stop-color="#a1502b"/><stop offset=".686" stop-color="#a13d1e"/><stop offset=".817" stop-color="#a1200a"/><stop offset=".922" stop-color="#a11200"/><stop offset="1" stop-color="#a10b00"/></linearGradient>
<linearGradient id="h92" gradientUnits="userSpaceOnUse" x1="743" x2="1078" y1="0" y2="0"><stop offset="0" stop-color="#00a182"/><stop offset=".343" stop-color="#00a175"/><stop offset=".382" stop-color="#1da173"/><stop offset=".43" stop-color="#47a170"/><stop offset=".472" stop-color="#71a16d"/><stop offset=".513" stop-color="#a1a169"/><stop offset=".546" stop-color="#a17f51"/><stop offset=".582" stop-color="#a1663e"/><stop offset=".627" stop-color="#a14f2e"/><stop offset=".678" stop-color="#a13c20"/><stop offset=".74" stop-color="#a12c14"/><stop offset=".812" stop-color="#a11e0b"/><stop offset=".925" stop-color="#a11000"/><stop offset="1" stop-color="#a10900"/></linearGradient>
<linearGradient id="h93" gradientUnits="userSpaceOnUse" x1="743" x2="1081" y1="0" y2="0"><stop offset="0" stop-color="#00a185"/><stop offset=".34" stop-color="#00a179"/><stop offset=".423" stop-color="#48a175"/><stop offset=".506" stop-color="#a19e6d"/><stop offset=".538" stop-color="#a17d54"/><stop offset=".574" stop-color="#a16441"/><stop offset=".618" stop-color="#a14d30"/><stop offset=".672" stop-color="#a13a21"/><stop offset=".749" stop-color="#a12713"/><stop offset=".84" stop-color="#a11808"/><stop offset=".929" stop-color="#a10d00"/><stop offset="1" stop-color="#a10700"/></linearGradient>
<linearGradient id="h94" gradientUnits="userSpaceOnUse" x1="744" x2="1084" y1="0" y2="0"><stop offset="0" stop-color="#00a188"/><stop offset=".332" stop-color="#00a17e"/><stop offset=".415" stop-color="#49a17a"/><stop offset=".494" stop-color="#a19f74"/><stop offset=".524" stop-color="#a1805c"/><stop offset=".562" stop-color="#a16445"/><stop offset=".606" stop-color="#a14c33"/><stop offset=".662" stop-color="#a13823"/><stop offset=".738" stop-color="#a12514"/><stop offset=".829" stop-color="#a11709"/><stop offset=".929" stop-color="#a10b00"/><stop offset="1" stop-color="#a10600"/></linearGradient>
<linearGradient id="h95" gradientUnits="userSpaceOnUse" x1="744" x2="1087" y1="0" y2="0"><stop offset="0" stop-color="#00a18c"/><stop offset=".327" stop-color="#00a183"/><stop offset=".408" stop-color="#49a17f"/><stop offset=".446" stop-color="#72a17d"/><stop offset=".484" stop-color="#a1a07b"/><stop offset=".516" stop-color="#a17e5f"/><stop offset=".554" stop-color="#a16248"/><stop offset=".598" stop-color="#a14b35"/><stop offset=".653" stop-color="#a13725"/><stop offset=".729" stop-color="#a12416"/><stop offset=".822" stop-color="#a1150a"/><stop offset=".93" stop-color="#a10a00"/><stop offset="1" stop-color="#a10400"/></linearGradient>
<linearGradient id="h96" gradientUnits="userSpaceOnUse" x1="745" x2="1090" y1="0" y2="0"><stop offset="0" stop-color="#00a18f"/><stop offset=".319" stop-color="#00a188"/><stop offset=".394" stop-color="#44a185"/><stop offset=".435" stop-color="#71a183"/><stop offset=".472" stop-color="#a0a182"/><stop offset=".475" stop-color="#a19e7f"/><stop offset=".507" stop-color="#a17c62"/><stop offset=".545" stop-color="#a1604a"/><stop offset=".591" stop-color="#a14836"/><stop offset=".646" stop-color="#a13426"/><stop offset=".722" stop-color="#a12217"/><stop offset=".817" stop-color="#a1130a"/><stop offset=".933" stop-color="#a10800"/><stop offset="1" stop-color="#a10300"/></linearGradient>
<linearGradient id="h97" gradientUnits="userSpaceOnUse" x1="745" x2="1092" y1="0" y2="0"><stop offset="0" stop-color="#00a193"/><stop offset=".317" stop-color="#01a18d"/><stop offset=".392" stop-color="#48a18b"/><stop offset=".467" stop-color="#a19f87"/><stop offset=".499" stop-color="#a17c68"/><stop offset=".536" stop-color="#a15f4f"/><stop offset=".582" stop-color="#a1473a"/><stop offset=".637" stop-color="#a13428"/><stop offset=".712" stop-color="#a12219"/><stop offset=".807" stop-color="#a1130c"/><stop offset=".937" stop-color="#a10600"/><stop offset="1" stop-color="#a10100"/></linearGradient>
<linearGradient id="h98" gradientUnits="userSpaceOnUse" x1="746" x2="1095" y1="0" y2="0"><stop offset="0" stop-color="#00a196"/><stop offset=".309" stop-color="#00a192"/><stop offset=".387" stop-color="#4ca191"/><stop offset=".456" stop-color="#a1a08f"/><stop offset=".487" stop-color="#a17c6e"/><stop offset=".524" stop-color="#a15f53"/><stop offset=".57" stop-color="#a1473d"/><stop offset=".628" stop-color="#a1322a"/><stop offset=".705" stop-color="#a1201a"/><stop offset=".799" stop-color="#a1110c"/><stop offset=".94" stop-color="#a10400"/><stop offset="1" stop-color="#a10000"/></linearGradient>
<linearGradient id="h99" gradientUnits="userSpaceOnUse" x1="746" x2="1098" y1="0" y2="0"><stop offset="0" stop-color="#00a19a"/><stop offset=".304" stop-color="#00a198"/><stop offset=".375" stop-color="#46a197"/><stop offset=".412" stop-color="#72a196"/><stop offset=".446" stop-color="#a0a196"/><stop offset=".449" stop-color="#a19e93"/><stop offset=".48" stop-color="#a17a71"/><stop offset=".52" stop-color="#a15b54"/><stop offset=".565" stop-color="#a1443e"/><stop offset=".622" stop-color="#a1302b"/><stop offset=".699" stop-color="#a11e1b"/><stop offset=".793" stop-color="#a1100d"/><stop offset=".94" stop-color="#a10200"/><stop offset="1" stop-color="#a10000"/></linearGradient>
<linearGradient id="h100" gradientUnits="userSpaceOnUse" x1="747" x2="1101" y1="0" y2="0"><stop offset="0" stop-color="#00a19e"/><stop offset=".297" stop-color="#00a19e"/><stop offset=".328" stop-color="#1da19e"/><stop offset=".367" stop-color="#47a19d"/><stop offset=".438" stop-color="#a19f9b"/><stop offset=".469" stop-color="#a17a77"/><stop offset=".508" stop-color="#a15b59"/><stop offset=".556" stop-color="#a14240"/><stop offset=".616" stop-color="#a12e2c"/><stop offset=".692" stop-color="#a11c1b"/><stop offset=".785" stop-color="#a10f0e"/><stop offset=".944" stop-color="#a10000"/><stop offset="1" stop-color="#a10000"/></linearGradient>
<linearGradient id="h101" gradientUnits="userSpaceOnUse" x1="747" x2="1104" y1="0" y2="0"><stop offset="0" stop-color="#009fa1"/><stop offset=".294" stop-color="#019ea1"/><stop offset=".367" stop-color="#4d9da1"/><stop offset=".431" stop-color="#a19ca0"/><stop offset=".462" stop-color="#a1787b"/><stop offset=".501" stop-color="#a1595c"/><stop offset=".549" stop-color="#a14043"/><stop offset=".608" stop-color="#a12c2e"/><stop offset=".686" stop-color="#a11b1c"/><stop offset=".787" stop-color="#a10c0e"/><stop offset=".927" stop-color="#a10001"/><stop offset="1" stop-color="#a10000"/></linearGradient>
<linearGradient id="h102" gradientUnits="userSpaceOnUse" x1="748" x2="1106" y1="0" y2="0"><stop offset="0" stop-color="#009ba1"/><stop offset=".288" stop-color="#0098a1"/><stop offset=".36" stop-color="#4a97a1"/><stop offset=".394" stop-color="#7396a1"/><stop offset=".427" stop-color="#a195a1"/><stop offset=".461" stop-color="#a17079"/><stop offset=".5" stop-color="#a1535b"/><stop offset=".547" stop-color="#a13c43"/><stop offset=".606" stop-color="#a1292e"/><stop offset=".69" stop-color="#a1181c"/><stop offset=".796" stop-color="#a10a0d"/><stop offset=".908" stop-color="#a10003"/><stop offset="1" stop-color="#a10000"/></linearGradient>
<linearGradient id="h103" gradientUnits="userSpaceOnUse" x1="748" x2="1109" y1="0" y2="0"><stop offset="0" stop-color="#0097a1"/><stop offset=".283" stop-color="#0092a1"/><stop offset=".352" stop-color="#4591a1"/><stop offset=".388" stop-color="#7090a1"/><stop offset=".424" stop-color="#a08ea1"/><stop offset=".427" stop-color="#a18b9d"/><stop offset=".46" stop-color="#a16978"/><stop offset=".499" stop-color="#a14e5a"/><stop offset=".548" stop-color="#a13741"/><stop offset=".607" stop-color="#a1262e"/><stop offset=".695" stop-color="#a1141b"/><stop offset=".806" stop-color="#a1070c"/><stop offset=".886" stop-color="#a10005"/><stop offset="1" stop-color="#a10000"/></linearGradient>
<linearGradient id="h104" gradientUnits="userSpaceOnUse" x1="749" x2="1112" y1="0" y2="0"><stop offset="0" stop-color="#0093a1"/><stop offset=".275" stop-color="#008da1"/><stop offset=".347" stop-color="#468ba1"/><stop offset=".383" stop-color="#7089a1"/><stop offset=".419" stop-color="#a087a1"/><stop offset=".421" stop-color="#a1859e"/><stop offset=".455" stop-color="#a16478"/><stop offset=".493" stop-color="#a14b5b"/><stop offset=".543" stop-color="#a13542"/><stop offset=".603" stop-color="#a1232e"/><stop offset=".697" stop-color="#a1111a"/><stop offset=".815" stop-color="#a1040b"/><stop offset=".865" stop-color="#a10006"/><stop offset="1" stop-color="#a10000"/></linearGradient>
<linearGradient id="h105" gradientUnits="userSpaceOnUse" x1="750" x2="1115" y1="0" y2="0"><stop offset="0" stop-color="#008fa1"/><stop offset=".268" stop-color="#0088a1"/><stop offset=".299" stop-color="#1a87a1"/><stop offset=".34" stop-color="#4485a1"/><stop offset=".416" stop-color="#a17f9e"/><stop offset=".449" stop-color="#a16079"/><stop offset=".49" stop-color="#a1465b"/><stop offset=".54" stop-color="#a13142"/><stop offset=".6" stop-color="#a1202e"/><stop offset=".699" stop-color="#a10f1a"/><stop offset=".827" stop-color="#a1010a"/><stop offset=".953" stop-color="#a10000"/><stop offset="1" stop-color="#a10000"/></linearGradient>
<linearGradient id="h106" gradientUnits="userSpaceOnUse" x1="750" x2="1118" y1="0" y2="0"><stop offset="0" stop-color="#008ca1"/><stop offset=".266" stop-color="#0183a1"/><stop offset=".34" stop-color="#487fa1"/><stop offset=".413" stop-color="#a1799f"/><stop offset=".446" stop-color="#a15b7a"/><stop offset=".486" stop-color="#a1425c"/><stop offset=".535" stop-color="#a12e43"/><stop offset=".598" stop-color="#a11e2f"/><stop offset=".696" stop-color="#a10d1a"/><stop offset=".823" stop-color="#a1000a"/><stop offset=".957" stop-color="#a10000"/><stop offset="1" stop-color="#a10000"/></linearGradient>
<linearGradient id="h107" gradientUnits="userSpaceOnUse" x1="751" x2="1120" y1="0" y2="0"><stop offset="0" stop-color="#0088a1"/><stop offset=".26" stop-color="#007ea1"/><stop offset=".336" stop-color="#497aa1"/><stop offset=".409" stop-color="#a1739f"/><stop offset=".442" stop-color="#a1577b"/><stop offset=".482" stop-color="#a13f5d"/><stop offset=".531" stop-color="#a12c44"/><stop offset=".593" stop-color="#a11c2f"/><stop offset=".686" stop-color="#a10c1c"/><stop offset=".805" stop-color="#a1000c"/><stop offset="1" stop-color="#a10000"/></linearGradient>
<linearGradient id="h108" gradientUnits="userSpaceOnUse" x1="751" x2="1123" y1="0" y2="0"><stop offset="0" stop-color="#0084a1"/><stop offset=".255" stop-color="#0079a1"/><stop offset=".333" stop-color="#4a74a1"/><stop offset=".406" stop-color="#a16ea0"/><stop offset=".441" stop-color="#a15179"/><stop offset=".481" stop-color="#a13b5c"/><stop offset=".53" stop-color="#a12944"/><stop offset=".591" stop-color="#a11930"/><stop offset=".677" stop-color="#a10b1d"/><stop offset=".785" stop-color="#a1000e"/><stop offset=".927" stop-color="#a10002"/><stop offset="1" stop-color="#a10000"/></linearGradient>
<linearGradient id="h109" gradientUnits="userSpaceOnUse" x1="752" x2="1126" y1="0" y2="0"><stop offset="0" stop-color="#0081a1"/><stop offset=".249" stop-color="#0075a1"/><stop offset=".283" stop-color="#1e73a1"/><stop offset=".326" stop-color="#486fa1"/><stop offset=".364" stop-color="#726ca1"/><stop offset=".401" stop-color="#a168a0"/><stop offset=".436" stop-color="#a14d7a"/><stop offset=".476" stop-color="#a1375d"/><stop offset=".527" stop-color="#a12544"/><stop offset=".588" stop-color="#a11730"/><stop offset=".668" stop-color="#a10a1e"/><stop offset=".765" stop-color="#a10011"/><stop offset=".909" stop-color="#a10004"/><stop offset="1" stop-color="#a10000"/></linearGradient>
<linearGradient id="h110" gradientUnits="userSpaceOnUse" x1="753" x2="1129" y1="0" y2="0"><stop offset="0" stop-color="#007da1"/><stop offset=".245" stop-color="#0170a1"/><stop offset=".324" stop-color="#4b6aa1"/><stop offset=".362" stop-color="#7567a1"/><stop offset=".396" stop-color="#a163a1"/><stop offset=".431" stop-color="#a1497b"/><stop offset=".471" stop-color="#a1345e"/><stop offset=".521" stop-color="#a12345"/><stop offset=".585" stop-color="#a11430"/><stop offset=".657" stop-color="#a10920"/><stop offset=".745" stop-color="#a10013"/><stop offset=".891" stop-color="#a10005"/><stop offset="1" stop-color="#a10000"/></linearGradient>
<linearGradient id="h111" gradientUnits="userSpaceOnUse" x1="753" x2="1131" y1="0" y2="0"><stop offset="0" stop-color="#007aa1"/><stop offset=".241" stop-color="#006ca1"/><stop offset=".317" stop-color="#4766a1"/><stop offset=".357" stop-color="#7262a1"/><stop offset=".394" stop-color="#a05ea1"/><stop offset=".397" stop-color="#a15c9e"/><stop offset=".431" stop-color="#a1437a"/><stop offset=".474" stop-color="#a12f5c"/><stop offset=".524" stop-color="#a11f44"/><stop offset=".587" stop-color="#a1122f"/><stop offset=".728" stop-color="#a10015"/><stop offset=".873" stop-color="#a10007"/><stop offset="1" stop-color="#a10000"/></linearGradient>
<linearGradient id="h112" gradientUnits="userSpaceOnUse" x1="754" x2="1134" y1="0" y2="0"><stop offset="0" stop-color="#0076a1"/><stop offset=".234" stop-color="#0068a1"/><stop offset=".313" stop-color="#4861a1"/><stop offset=".392" stop-color="#a1579e"/><stop offset=".426" stop-color="#a1407a"/><stop offset=".468" stop-color="#a12c5d"/><stop offset=".521" stop-color="#a11c44"/><stop offset=".584" stop-color="#a10f30"/><stop offset=".708" stop-color="#a10018"/><stop offset=".855" stop-color="#a10008"/><stop offset="1" stop-color="#a10000"/></linearGradient>
<linearGradient id="h113" gradientUnits="userSpaceOnUse" x1="754" x2="1136" y1="0" y2="0"><stop offset="0" stop-color="#0073a1"/><stop offset=".23" stop-color="#0064a1"/><stop offset=".309" stop-color="#465da1"/><stop offset=".39" stop-color="#a1529f"/><stop offset=".424" stop-color="#a13c7b"/><stop offset=".466" stop-color="#a12a5d"/><stop offset=".518" stop-color="#a11a45"/><stop offset=".581" stop-color="#a10e31"/><stop offset=".691" stop-color="#a1001b"/><stop offset=".757" stop-color="#a10012"/><stop offset=".89" stop-color="#a10006"/><stop offset="1" stop-color="#a10000"/></linearGradient>
<linearGradient id="h114" gradientUnits="userSpaceOnUse" x1="755" x2="1134" y1="0" y2="0"><stop offset="0" stop-color="#006fa1"/><stop offset=".23" stop-color="#0160a1"/><stop offset=".311" stop-color="#4958a1"/><stop offset=".391" stop-color="#a14e9f"/><stop offset=".425" stop-color="#a1397c"/><stop offset=".467" stop-color="#a1275e"/><stop offset=".52" stop-color="#a11845"/><stop offset=".583" stop-color="#a10c31"/><stop offset=".681" stop-color="#a1001d"/><stop offset=".755" stop-color="#a10013"/><stop offset="1" stop-color="#a10000"/></linearGradient>
<linearGradient id="h115" gradientUnits="userSpaceOnUse" x1="756" x2="1128" y1="0" y2="0"><stop offset="0" stop-color="#006ca1"/><stop offset=".228" stop-color="#005ca1"/><stop offset=".315" stop-color="#4a54a1"/><stop offset=".395" stop-color="#a149a0"/><stop offset=".43" stop-color="#a1357d"/><stop offset=".473" stop-color="#a1245f"/><stop offset=".524" stop-color="#a11647"/><stop offset=".586" stop-color="#a10b34"/><stop offset=".677" stop-color="#a10020"/><stop offset=".753" stop-color="#a10016"/><stop offset="1" stop-color="#a10001"/></linearGradient>
<linearGradient id="h116" gradientUnits="userSpaceOnUse" x1="756" x2="1122" y1="0" y2="0"><stop offset="0" stop-color="#0069a1"/><stop offset=".23" stop-color="#0059a1"/><stop offset=".32" stop-color="#4b50a1"/><stop offset=".402" stop-color="#a145a0"/><stop offset=".437" stop-color="#a1327d"/><stop offset=".481" stop-color="#a12160"/><stop offset=".533" stop-color="#a11448"/><stop offset=".593" stop-color="#a10a35"/><stop offset=".675" stop-color="#a10023"/><stop offset=".76" stop-color="#a10017"/><stop offset="1" stop-color="#a10002"/></linearGradient>
<linearGradient id="h117" gradientUnits="userSpaceOnUse" x1="757" x2="1116" y1="0" y2="0"><stop offset="0" stop-color="#0066a1"/><stop offset=".228" stop-color="#0055a1"/><stop offset=".32" stop-color="#494ca1"/><stop offset=".365" stop-color="#7446a1"/><stop offset=".407" stop-color="#a141a0"/><stop offset=".443" stop-color="#a12e7e"/><stop offset=".485" stop-color="#a12062"/><stop offset=".538" stop-color="#a1134a"/><stop offset=".599" stop-color="#a10837"/><stop offset=".671" stop-color="#a10027"/><stop offset=".763" stop-color="#a10019"/><stop offset="1" stop-color="#a10004"/></linearGradient>
<linearGradient id="h118" gradientUnits="userSpaceOnUse" x1="758" x2="1110" y1="0" y2="0"><stop offset="0" stop-color="#0063a1"/><stop offset=".23" stop-color="#0152a1"/><stop offset=".327" stop-color="#4c48a1"/><stop offset=".412" stop-color="#a03ca1"/><stop offset=".449" stop-color="#a12b7f"/><stop offset=".491" stop-color="#a11d63"/><stop offset=".543" stop-color="#a1114c"/><stop offset=".605" stop-color="#a10738"/><stop offset=".668" stop-color="#a1002a"/><stop offset=".767" stop-color="#a1001a"/><stop offset="1" stop-color="#a10005"/></linearGradient>
<linearGradient id="h119" gradientUnits="userSpaceOnUse" x1="758" x2="1104" y1="0" y2="0"><stop offset="0" stop-color="#0060a1"/><stop offset=".231" stop-color="#014ea1"/><stop offset=".327" stop-color="#4844a1"/><stop offset=".422" stop-color="#a1379e"/><stop offset=".46" stop-color="#a1277d"/><stop offset=".503" stop-color="#a11a62"/><stop offset=".555" stop-color="#a10f4c"/><stop offset=".616" stop-color="#a10539"/><stop offset=".665" stop-color="#a1002e"/><stop offset=".775" stop-color="#a1001c"/><stop offset="1" stop-color="#a10007"/></linearGradient>
<linearGradient id="h120" gradientUnits="userSpaceOnUse" x1="759" x2="1098" y1="0" y2="0"><stop offset="0" stop-color="#005ca1"/><stop offset=".23" stop-color="#004ba1"/><stop offset=".33" stop-color="#4941a1"/><stop offset=".428" stop-color="#a1339f"/><stop offset=".463" stop-color="#a12580"/><stop offset=".507" stop-color="#a11865"/><stop offset=".558" stop-color="#a10e4f"/><stop offset=".619" stop-color="#a1043b"/><stop offset=".661" stop-color="#a10032"/><stop offset=".779" stop-color="#a1001e"/><stop offset="1" stop-color="#a10009"/></linearGradient>
<linearGradient id="h121" gradientUnits="userSpaceOnUse" x1="760" x2="1092" y1="0" y2="0"><stop offset="0" stop-color="#0059a1"/><stop offset=".229" stop-color="#0048a1"/><stop offset=".331" stop-color="#473da1"/><stop offset=".434" stop-color="#a12f9f"/><stop offset=".47" stop-color="#a12181"/><stop offset=".515" stop-color="#a11566"/><stop offset=".566" stop-color="#a10b50"/><stop offset=".627" stop-color="#a1033d"/><stop offset=".657" stop-color="#a10036"/><stop offset=".783" stop-color="#a10020"/><stop offset="1" stop-color="#a1000b"/></linearGradient>
<linearGradient id="h122" gradientUnits="userSpaceOnUse" x1="761" x2="1086" y1="0" y2="0"><stop offset="0" stop-color="#0056a1"/><stop offset=".228" stop-color="#0045a1"/><stop offset=".335" stop-color="#483aa1"/><stop offset=".44" stop-color="#a12b9f"/><stop offset=".477" stop-color="#a11e81"/><stop offset=".52" stop-color="#a11468"/><stop offset=".572" stop-color="#a10a51"/><stop offset=".634" stop-color="#a1023f"/><stop offset=".788" stop-color="#a10021"/><stop offset="1" stop-color="#a1000c"/></linearGradient>
<linearGradient id="h123" gradientUnits="userSpaceOnUse" x1="761" x2="1080" y1="0" y2="0"><stop offset="0" stop-color="#0054a1"/><stop offset=".232" stop-color="#0142a1"/><stop offset=".345" stop-color="#4b36a1"/><stop offset=".448" stop-color="#a128a0"/><stop offset=".486" stop-color="#a11b82"/><stop offset=".53" stop-color="#a11169"/><stop offset=".58" stop-color="#a10853"/><stop offset=".639" stop-color="#a10141"/><stop offset=".79" stop-color="#a10024"/><stop offset="1" stop-color="#a1000e"/></linearGradient>
<linearGradient id="h124" gradientUnits="userSpaceOnUse" x1="762" x2="1074" y1="0" y2="0"><stop offset="0" stop-color="#0051a1"/><stop offset=".231" stop-color="#003fa1"/><stop offset=".349" stop-color="#4c32a1"/><stop offset=".455" stop-color="#a124a0"/><stop offset=".494" stop-color="#a11983"/><stop offset=".535" stop-color="#a10f6b"/><stop offset=".587" stop-color="#a10755"/><stop offset=".647" stop-color="#a10043"/><stop offset=".798" stop-color="#a10025"/><stop offset="1" stop-color="#a10010"/></linearGradient>
<linearGradient id="h125" gradientUnits="userSpaceOnUse" x1="763" x2="1068" y1="0" y2="0"><stop offset="0" stop-color="#004ea1"/><stop offset=".23" stop-color="#003ca1"/><stop offset=".351" stop-color="#4a2fa1"/><stop offset=".407" stop-color="#7328a1"/><stop offset=".462" stop-color="#a121a1"/><stop offset=".502" stop-color="#a11683"/><stop offset=".544" stop-color="#a10d6c"/><stop offset=".593" stop-color="#a10557"/><stop offset=".652" stop-color="#a10045"/><stop offset=".8" stop-color="#a10028"/><stop offset="1" stop-color="#a10012"/></linearGradient>
<linearGradient id="h126" gradientUnits="userSpaceOnUse" x1="764" x2="1062" y1="0" y2="0"><stop offset="0" stop-color="#004ba1"/><stop offset=".228" stop-color="#0039a1"/><stop offset=".356" stop-color="#4b2ca1"/><stop offset=".416" stop-color="#7625a1"/><stop offset=".47" stop-color="#a01da1"/><stop offset=".51" stop-color="#a11384"/><stop offset=".554" stop-color="#a10a6c"/><stop offset=".631" stop-color="#a1004f"/><stop offset=".661" stop-color="#a10047"/><stop offset=".805" stop-color="#a1002a"/><stop offset="1" stop-color="#a10015"/></linearGradient>
<linearGradient id="h127" gradientUnits="userSpaceOnUse" x1="764" x2="1056" y1="0" y2="0"><stop offset="0" stop-color="#0048a1"/><stop offset=".233" stop-color="#0136a1"/><stop offset=".36" stop-color="#4929a1"/><stop offset=".483" stop-color="#a1199f"/><stop offset=".521" stop-color="#a11084"/><stop offset=".565" stop-color="#a1086d"/><stop offset=".627" stop-color="#a10055"/><stop offset=".671" stop-color="#a10048"/><stop offset=".812" stop-color="#a1002c"/><stop offset="1" stop-color="#a10017"/></linearGradient>
<linearGradient id="h128" gradientUnits="userSpaceOnUse" x1="765" x2="1050" y1="0" y2="0"><stop offset="0" stop-color="#0045a1"/><stop offset=".232" stop-color="#0034a1"/><stop offset=".365" stop-color="#4a26a1"/><stop offset=".491" stop-color="#a1169f"/><stop offset=".53" stop-color="#a10d85"/><stop offset=".572" stop-color="#a1066f"/><stop offset=".621" stop-color="#a1005c"/><stop offset=".677" stop-color="#a1004b"/><stop offset=".818" stop-color="#a1002f"/><stop offset="1" stop-color="#a10019"/></linearGradient>
<linearGradient id="h129" gradientUnits="userSpaceOnUse" x1="766" x2="1044" y1="0" y2="0"><stop offset="0" stop-color="#0043a1"/><stop offset=".23" stop-color="#0031a1"/><stop offset=".367" stop-color="#4824a1"/><stop offset=".5" stop-color="#a1139f"/><stop offset=".54" stop-color="#a10b85"/><stop offset=".583" stop-color="#a10470"/><stop offset=".615" stop-color="#a10063"/><stop offset=".687" stop-color="#a1004c"/><stop offset=".824" stop-color="#a10031"/><stop offset="1" stop-color="#a1001c"/></linearGradient>
<linearGradient id="h130" gradientUnits="userSpaceOnUse" x1="767" x2="1038" y1="0" y2="0"><stop offset="0" stop-color="#0040a1"/><stop offset=".229" stop-color="#002fa1"/><stop offset=".373" stop-color="#4921a1"/><stop offset=".509" stop-color="#a110a0"/><stop offset=".546" stop-color="#a10988"/><stop offset=".59" stop-color="#a10272"/><stop offset=".694" stop-color="#a1004f"/><stop offset=".827" stop-color="#a10034"/><stop offset="1" stop-color="#a1001f"/></linearGradient>
<linearGradient id="h131" gradientUnits="userSpaceOnUse" x1="768" x2="1032" y1="0" y2="0"><stop offset="0" stop-color="#003da1"/><stop offset=".231" stop-color="#012ca1"/><stop offset=".383" stop-color="#4c1da1"/><stop offset=".519" stop-color="#a10da0"/><stop offset=".557" stop-color="#a10689"/><stop offset=".598" stop-color="#a10074"/><stop offset=".701" stop-color="#a10052"/><stop offset=".833" stop-color="#a10036"/><stop offset="1" stop-color="#a10021"/></linearGradient>
<linearGradient id="h132" gradientUnits="userSpaceOnUse" x1="769" x2="1026" y1="0" y2="0"><stop offset="0" stop-color="#003aa1"/><stop offset=".23" stop-color="#012aa1"/><stop offset=".389" stop-color="#4c1ba1"/><stop offset=".529" stop-color="#a10aa0"/><stop offset=".568" stop-color="#a10489"/><stop offset=".611" stop-color="#a10075"/><stop offset=".712" stop-color="#a10053"/><stop offset=".84" stop-color="#a10039"/><stop offset="1" stop-color="#a10024"/></linearGradient>
<linearGradient id="h133" gradientUnits="userSpaceOnUse" x1="770" x2="1020" y1="0" y2="0"><stop offset="0" stop-color="#0038a1"/><stop offset=".228" stop-color="#0027a1"/><stop offset=".392" stop-color="#4b18a1"/><stop offset=".468" stop-color="#7410a1"/><stop offset=".54" stop-color="#a107a1"/><stop offset=".588" stop-color="#a10086"/><stop offset=".62" stop-color="#a10077"/><stop offset=".72" stop-color="#a10056"/><stop offset=".844" stop-color="#a1003c"/><stop offset="1" stop-color="#a10027"/></linearGradient>
<linearGradient id="h134" gradientUnits="userSpaceOnUse" x1="771" x2="1014" y1="0" y2="0"><stop offset="0" stop-color="#0035a1"/><stop offset=".226" stop-color="#0025a1"/><stop offset=".399" stop-color="#4c15a1"/><stop offset=".551" stop-color="#a004a1"/><stop offset=".63" stop-color="#a10079"/><stop offset=".728" stop-color="#a10059"/><stop offset=".848" stop-color="#a10040"/><stop offset="1" stop-color="#a1002b"/></linearGradient>
<linearGradient id="h135" gradientUnits="userSpaceOnUse" x1="772" x2="1008" y1="0" y2="0"><stop offset="0" stop-color="#0033a1"/><stop offset=".229" stop-color="#0123a1"/><stop offset=".398" stop-color="#4814a1"/><stop offset=".568" stop-color="#a1009f"/><stop offset=".644" stop-color="#a1007a"/><stop offset=".742" stop-color="#a1005b"/><stop offset=".856" stop-color="#a10043"/><stop offset="1" stop-color="#a1002e"/></linearGradient>
<linearGradient id="h136" gradientUnits="userSpaceOnUse" x1="773" x2="1002" y1="0" y2="0"><stop offset="0" stop-color="#0030a1"/><stop offset=".227" stop-color="#0121a1"/><stop offset=".406" stop-color="#4911a1"/><stop offset=".581" stop-color="#a1009f"/><stop offset=".659" stop-color="#a1007b"/><stop offset=".751" stop-color="#a1005e"/><stop offset=".865" stop-color="#a10045"/><stop offset="1" stop-color="#a10032"/></linearGradient>
<linearGradient id="h137" gradientUnits="userSpaceOnUse" x1="773" x2="996" y1="0" y2="0"><stop offset="0" stop-color="#002ea1"/><stop offset=".229" stop-color="#001fa1"/><stop offset=".417" stop-color="#490ea1"/><stop offset=".556" stop-color="#8c00a1"/><stop offset=".596" stop-color="#a100a0"/><stop offset=".673" stop-color="#a1007d"/><stop offset=".762" stop-color="#a10061"/><stop offset=".87" stop-color="#a10049"/><stop offset="1" stop-color="#a10036"/></linearGradient>
<linearGradient id="h138" gradientUnits="userSpaceOnUse" x1="774" x2="990" y1="0" y2="0"><stop offset="0" stop-color="#002ba1"/><stop offset=".227" stop-color="#001da1"/><stop offset=".426" stop-color="#4a0ca1"/><stop offset=".546" stop-color="#8000a1"/><stop offset=".611" stop-color="#a100a0"/><stop offset=".685" stop-color="#a1007f"/><stop offset=".773" stop-color="#a10064"/><stop offset=".875" stop-color="#a1004d"/><stop offset="1" stop-color="#a1003a"/></linearGradient>
<linearGradient id="h139" gradientUnits="userSpaceOnUse" x1="775" x2="984" y1="0" y2="0"><stop offset="0" stop-color="#0029a1"/><stop offset=".23" stop-color="#011aa1"/><stop offset=".435" stop-color="#4b0aa1"/><stop offset=".536" stop-color="#7500a1"/><stop offset=".627" stop-color="#a100a0"/><stop offset=".699" stop-color="#a10081"/><stop offset=".785" stop-color="#a10067"/><stop offset=".885" stop-color="#a10051"/><stop offset="1" stop-color="#a1003e"/></linearGradient>
<linearGradient id="h140" gradientUnits="userSpaceOnUse" x1="776" x2="978" y1="0" y2="0"><stop offset="0" stop-color="#0026a1"/><stop offset=".228" stop-color="#0118a1"/><stop offset=".446" stop-color="#4b07a1"/><stop offset=".525" stop-color="#6b00a1"/><stop offset=".644" stop-color="#a100a1"/><stop offset=".713" stop-color="#a10084"/><stop offset=".792" stop-color="#a1006b"/><stop offset=".886" stop-color="#a10056"/><stop offset="1" stop-color="#a10043"/></linearGradient>
<linearGradient id="h141" gradientUnits="userSpaceOnUse" x1="778" x2="972" y1="0" y2="0"><stop offset="0" stop-color="#0024a1"/><stop offset=".222" stop-color="#0016a1"/><stop offset=".454" stop-color="#4c05a1"/><stop offset=".51" stop-color="#6100a1"/><stop offset=".66" stop-color="#a000a1"/><stop offset=".727" stop-color="#a10086"/><stop offset=".804" stop-color="#a1006e"/><stop offset=".897" stop-color="#a10059"/><stop offset="1" stop-color="#a10048"/></linearGradient>
<linearGradient id="h142" gradientUnits="userSpaceOnUse" x1="779" x2="966" y1="0" y2="0"><stop offset="0" stop-color="#0021a1"/><stop offset=".219" stop-color="#0014a1"/><stop offset=".465" stop-color="#4c03a1"/><stop offset=".679" stop-color="#a000a1"/><stop offset=".749" stop-color="#a10086"/><stop offset=".818" stop-color="#a10072"/><stop offset="1" stop-color="#a1004d"/></linearGradient>
<linearGradient id="h143" gradientUnits="userSpaceOnUse" x1="780" x2="960" y1="0" y2="0"><stop offset="0" stop-color="#001fa1"/><stop offset=".222" stop-color="#0112a1"/><stop offset=".478" stop-color="#4d00a1"/><stop offset=".7" stop-color="#a000a1"/><stop offset=".833" stop-color="#a10075"/><stop offset="1" stop-color="#a10053"/></linearGradient>
<linearGradient id="h144" gradientUnits="userSpaceOnUse" x1="781" x2="955" y1="0" y2="0"><stop offset="0" stop-color="#001da1"/><stop offset=".218" stop-color="#0111a1"/><stop offset=".483" stop-color="#4b00a1"/><stop offset=".718" stop-color="#a000a1"/><stop offset=".851" stop-color="#a10077"/><stop offset="1" stop-color="#a10058"/></linearGradient>
<linearGradient id="h145" gradientUnits="userSpaceOnUse" x1="782" x2="949" y1="0" y2="0"><stop offset="0" stop-color="#001aa1"/><stop offset=".216" stop-color="#010fa1"/><stop offset=".443" stop-color="#3c00a1"/><stop offset=".497" stop-color="#4c00a1"/><stop offset=".743" stop-color="#9f00a1"/><stop offset=".862" stop-color="#a1007c"/><stop offset="1" stop-color="#a1005f"/></linearGradient>
<linearGradient id="h146" gradientUnits="userSpaceOnUse" x1="783" x2="943" y1="0" y2="0"><stop offset="0" stop-color="#0018a1"/><stop offset=".212" stop-color="#000da1"/><stop offset=".425" stop-color="#3400a1"/><stop offset=".506" stop-color="#4b00a1"/><stop offset=".769" stop-color="#9f00a1"/><stop offset=".881" stop-color="#a10080"/><stop offset="1" stop-color="#a10066"/></linearGradient>
<linearGradient id="h147" gradientUnits="userSpaceOnUse" x1="784" x2="937" y1="0" y2="0"><stop offset="0" stop-color="#0016a1"/><stop offset=".216" stop-color="#010ba1"/><stop offset=".405" stop-color="#2d00a1"/><stop offset=".523" stop-color="#4b00a1"/><stop offset=".804" stop-color="#a100a0"/><stop offset=".895" stop-color="#a10085"/><stop offset="1" stop-color="#a1006e"/></linearGradient>
<linearGradient id="h148" gradientUnits="userSpaceOnUse" x1="785" x2="931" y1="0" y2="0"><stop offset="0" stop-color="#0014a1"/><stop offset=".212" stop-color="#0109a1"/><stop offset=".384" stop-color="#2600a1"/><stop offset=".541" stop-color="#4c00a1"/><stop offset=".836" stop-color="#a100a1"/><stop offset="1" stop-color="#a10076"/></linearGradient>
<linearGradient id="h149" gradientUnits="userSpaceOnUse" x1="786" x2="925" y1="0" y2="0"><stop offset="0" stop-color="#0011a1"/><stop offset=".209" stop-color="#0108a1"/><stop offset=".36" stop-color="#1f00a1"/><stop offset=".561" stop-color="#4c00a1"/><stop offset=".871" stop-color="#a000a1"/><stop offset="1" stop-color="#a10080"/></linearGradient>
<linearGradient id="h150" gradientUnits="userSpaceOnUse" x1="788" x2="919" y1="0" y2="0"><stop offset="0" stop-color="#000fa1"/><stop offset=".198" stop-color="#0006a1"/><stop offset=".328" stop-color="#1800a1"/><stop offset=".573" stop-color="#4b00a1"/><stop offset=".748" stop-color="#7500a1"/><stop offset=".908" stop-color="#a000a1"/><stop offset="1" stop-color="#a1008a"/></linearGradient>
<linearGradient id="h151" gradientUnits="userSpaceOnUse" x1="789" x2="913" y1="0" y2="0"><stop offset="0" stop-color="#000da1"/><stop offset=".194" stop-color="#0005a1"/><stop offset=".298" stop-color="#1200a1"/><stop offset=".597" stop-color="#4c00a1"/><stop offset=".952" stop-color="#a000a1"/><stop offset="1" stop-color="#a10095"/></linearGradient>
<linearGradient id="h152" gradientUnits="userSpaceOnUse" x1="790" x2="907" y1="0" y2="0"><stop offset="0" stop-color="#000ba1"/><stop offset=".188" stop-color="#0003a1"/><stop offset=".239" stop-color="#0801a1"/><stop offset=".641" stop-color="#4f00a1"/><stop offset="1" stop-color="#a000a1"/></linearGradient>
<linearGradient id="h153" gradientUnits="userSpaceOnUse" x1="792" x2="901" y1="0" y2="0"><stop offset="0" stop-color="#0008a1"/><stop offset=".174" stop-color="#0002a1"/><stop offset=".229" stop-color="#0700a1"/><stop offset=".633" stop-color="#4900a1"/><stop offset="1" stop-color="#9300a1"/></linearGradient>
<linearGradient id="h154" gradientUnits="userSpaceOnUse" x1="793" x2="895" y1="0" y2="0"><stop offset="0" stop-color="#0006a1"/><stop offset=".167" stop-color="#0000a1"/><stop offset=".206" stop-color="#0400a1"/><stop offset=".618" stop-color="#4200a1"/><stop offset="1" stop-color="#8700a1"/></linearGradient>
<linearGradient id="h155" gradientUnits="userSpaceOnUse" x1="795" x2="889" y1="0" y2="0"><stop offset="0" stop-color="#0004a1"/><stop offset=".16" stop-color="#0000a1"/><stop offset=".191" stop-color="#0400a1"/><stop offset=".617" stop-color="#3d00a1"/><stop offset="1" stop-color="#7b00a1"/></linearGradient>
<linearGradient id="h156" gradientUnits="userSpaceOnUse" x1="796" x2="883" y1="0" y2="0"><stop offset="0" stop-color="#0002a1"/><stop offset=".172" stop-color="#0200a1"/><stop offset=".609" stop-color="#3800a1"/><stop offset="1" stop-color="#7000a1"/></linearGradient>
<linearGradient id="h157" gradientUnits="userSpaceOnUse" x1="798" x2="877" y1="0" y2="0"><stop offset="0" stop-color="#0000a1"/><stop offset=".127" stop-color="#0000a1"/><stop offset=".177" stop-color="#0500a1"/><stop offset=".608" stop-color="#3400a1"/><stop offset="1" stop-color="#6600a1"/></linearGradient>
<linearGradient id="h158" gradientUnits="userSpaceOnUse" x1="800" x2="871" y1="0" y2="0"><stop offset="0" stop-color="#0000a1"/><stop offset=".113" stop-color="#0100a1"/><stop offset=".211" stop-color="#0900a1"/><stop offset=".62" stop-color="#3200a1"/><stop offset="1" stop-color="#5c00a1"/></linearGradient>
<linearGradient id="h159" gradientUnits="userSpaceOnUse" x1="802" x2="865" y1="0" y2="0"><stop offset="0" stop-color="#0000a1"/><stop offset=".079" stop-color="#0000a1"/><stop offset=".27" stop-color="#1000a1"/><stop offset="1" stop-color="#5300a1"/></linearGradient>
<linearGradient id="h160" gradientUnits="userSpaceOnUse" x1="804" x2="859" y1="0" y2="0"><stop offset="0" stop-color="#0000a1"/><stop offset=".382" stop-color="#1800a1"/><stop offset="1" stop-color="#4900a1"/></linearGradient>
<linearGradient id="h161" gradientUnits="userSpaceOnUse" x1="807" x2="853" y1="0" y2="0"><stop offset="0" stop-color="#0200a1"/><stop offset="1" stop-color="#4100a1"/></linearGradient>
<linearGradient id="h162" gradientUnits="userSpaceOnUse" x1="810" x2="847" y1="0" y2="0"><stop offset="0" stop-color="#0700a1"/><stop offset="1" stop-color="#3800a1"/></linearGradient>
<linearGradient id="h163" gradientUnits="userSpaceOnUse" x1="813" x2="841" y1="0" y2="0"><stop offset="0" stop-color="#0b00a1"/><stop offset="1" stop-color="#3100a1"/></linearGradient>
<linearGradient id="h164" gradientUnits="userSpaceOnUse" x1="816" x2="835" y1="0" y2="0"><stop offset="0" stop-color="#1000a1"/><stop offset="1" stop-color="#2900a1"/></linearGradient>
<linearGradient id="h165" gradientUnits="userSpaceOnUse" x1="819" x2="829" y1="0" y2="0"><stop offset="0" stop-color="#1500a1"/><stop offset="1" stop-color="#2200a1"/></linearGradient>
<linearGradient id="t0" gradientUnits="userSpaceOnUse" x1="892" x2="897" y1="0" y2="0"><stop offset="0" stop-color="#00ff01"/><stop offset="1" stop-color="#07ff00"/></linearGradient>
<linearGradient id="t1" gradientUnits="userSpaceOnUse" x1="891" x2="901" y1="0" y2="0"><stop offset="0" stop-color="#00ff04"/><stop offset=".2" stop-color="#00ff02"/><stop offset="1" stop-color="#1f0"/></linearGradient>
<linearGradient id="t2" gradientUnits="userSpaceOnUse" x1="890" x2="904" y1="0" y2="0"><stop offset="0" stop-color="#00ff06"/><stop offset=".214" stop-color="#02ff04"/><stop offset="1" stop-color="#19ff00"/></linearGradient>
<linearGradient id="t3" gradientUnits="userSpaceOnUse" x1="889" x2="908" y1="0" y2="0"><stop offset="0" stop-color="#00ff09"/><stop offset=".158" stop-color="#01ff07"/><stop offset="1" stop-color="#24ff00"/></linearGradient>
<linearGradient id="t4" gradientUnits="userSpaceOnUse" x1="889" x2="911" y1="0" y2="0"><stop offset="0" stop-color="#00ff0b"/><stop offset=".091" stop-color="#01ff0a"/><stop offset="1" stop-color="#2eff00"/></linearGradient>
<linearGradient id="t5" gradientUnits="userSpaceOnUse" x1="888" x2="915" y1="0" y2="0"><stop offset="0" stop-color="#00ff0d"/><stop offset=".074" stop-color="#00ff0c"/><stop offset="1" stop-color="#39ff00"/></linearGradient>
<linearGradient id="t6" gradientUnits="userSpaceOnUse" x1="887" x2="918" y1="0" y2="0"><stop offset="0" stop-color="#00ff10"/><stop offset=".097" stop-color="#02ff0f"/><stop offset="1" stop-color="#43ff00"/></linearGradient>
<linearGradient id="t7" gradientUnits="userSpaceOnUse" x1="886" x2="922" y1="0" y2="0"><stop offset="0" stop-color="#00ff13"/><stop offset=".167" stop-color="#08ff10"/><stop offset="1" stop-color="#50ff00"/></linearGradient>
<linearGradient id="t8" gradientUnits="userSpaceOnUse" x1="886" x2="925" y1="0" y2="0"><stop offset="0" stop-color="#00ff15"/><stop offset=".333" stop-color="#1aff0e"/><stop offset="1" stop-color="#5bff00"/></linearGradient>
<linearGradient id="t9" gradientUnits="userSpaceOnUse" x1="885" x2="929" y1="0" y2="0"><stop offset="0" stop-color="#00ff18"/><stop offset=".045" stop-color="#01ff17"/><stop offset=".341" stop-color="#1fff10"/><stop offset="1" stop-color="#69ff00"/></linearGradient>
<linearGradient id="t10" gradientUnits="userSpaceOnUse" x1="884" x2="932" y1="0" y2="0"><stop offset="0" stop-color="#00ff1b"/><stop offset=".042" stop-color="#00ff1a"/><stop offset=".354" stop-color="#23ff12"/><stop offset="1" stop-color="#75ff00"/></linearGradient>
<linearGradient id="t11" gradientUnits="userSpaceOnUse" x1="883" x2="936" y1="0" y2="0"><stop offset="0" stop-color="#00ff1e"/><stop offset=".057" stop-color="#02ff1c"/><stop offset=".377" stop-color="#2bff13"/><stop offset="1" stop-color="#84ff00"/></linearGradient>
<linearGradient id="t12" gradientUnits="userSpaceOnUse" x1="883" x2="939" y1="0" y2="0"><stop offset="0" stop-color="#00ff21"/><stop offset=".036" stop-color="#01ff20"/><stop offset=".446" stop-color="#3aff12"/><stop offset="1" stop-color="#92ff00"/></linearGradient>
<linearGradient id="t13" gradientUnits="userSpaceOnUse" x1="882" x2="943" y1="0" y2="0"><stop offset="0" stop-color="#00ff24"/><stop offset=".033" stop-color="#01ff23"/><stop offset=".443" stop-color="#3fff14"/><stop offset="1" stop-color="#a2ff00"/></linearGradient>
<linearGradient id="t14" gradientUnits="userSpaceOnUse" x1="881" x2="946" y1="0" y2="0"><stop offset="0" stop-color="#00ff27"/><stop offset=".046" stop-color="#03ff25"/><stop offset=".446" stop-color="#45ff16"/><stop offset="1" stop-color="#b1ff00"/></linearGradient>
<linearGradient id="t15" gradientUnits="userSpaceOnUse" x1="880" x2="950" y1="0" y2="0"><stop offset="0" stop-color="#00ff2a"/><stop offset=".057" stop-color="#05ff28"/><stop offset=".457" stop-color="#4dff18"/><stop offset=".743" stop-color="#88ff0b"/><stop offset="1" stop-color="#c3ff00"/></linearGradient>
<linearGradient id="t16" gradientUnits="userSpaceOnUse" x1="879" x2="953" y1="0" y2="0"><stop offset="0" stop-color="#00ff2e"/><stop offset=".068" stop-color="#06ff2b"/><stop offset=".459" stop-color="#53ff1a"/><stop offset=".743" stop-color="#93ff0c"/><stop offset="1" stop-color="#d4ff00"/></linearGradient>
<linearGradient id="t17" gradientUnits="userSpaceOnUse" x1="879" x2="957" y1="0" y2="0"><stop offset="0" stop-color="#00ff30"/><stop offset=".026" stop-color="#01ff2f"/><stop offset=".154" stop-color="#1aff2a"/><stop offset=".487" stop-color="#62ff1a"/><stop offset=".756" stop-color="#a4ff0c"/><stop offset="1" stop-color="#e8ff00"/></linearGradient>
<linearGradient id="t18" gradientUnits="userSpaceOnUse" x1="878" x2="960" y1="0" y2="0"><stop offset="0" stop-color="#00ff34"/><stop offset=".024" stop-color="#01ff33"/><stop offset=".159" stop-color="#1cff2d"/><stop offset=".488" stop-color="#69ff1d"/><stop offset=".756" stop-color="#b0ff0d"/><stop offset="1" stop-color="#faff00"/></linearGradient>
<linearGradient id="t19" gradientUnits="userSpaceOnUse" x1="877" x2="964" y1="0" y2="0"><stop offset="0" stop-color="#00ff37"/><stop offset=".023" stop-color="#00ff36"/><stop offset=".138" stop-color="#1aff31"/><stop offset=".46" stop-color="#69ff20"/><stop offset=".713" stop-color="#b2ff11"/><stop offset=".943" stop-color="#fdff01"/><stop offset="1" stop-color="#fe0"/></linearGradient>
<linearGradient id="t20" gradientUnits="userSpaceOnUse" x1="876" x2="967" y1="0" y2="0"><stop offset="0" stop-color="#00ff3b"/><stop offset=".033" stop-color="#02ff39"/><stop offset=".11" stop-color="#14ff36"/><stop offset=".429" stop-color="#67ff25"/><stop offset=".67" stop-color="#b0ff16"/><stop offset=".89" stop-color="#fbff06"/><stop offset=".901" stop-color="#ffff05"/><stop offset="1" stop-color="#ffde00"/></linearGradient>
<linearGradient id="t21" gradientUnits="userSpaceOnUse" x1="876" x2="971" y1="0" y2="0"><stop offset="0" stop-color="#00ff3e"/><stop offset=".021" stop-color="#01ff3d"/><stop offset=".158" stop-color="#24ff36"/><stop offset=".421" stop-color="#6eff27"/><stop offset=".642" stop-color="#b5ff19"/><stop offset=".842" stop-color="#feff0a"/><stop offset="1" stop-color="#fc0"/></linearGradient>
<linearGradient id="t22" gradientUnits="userSpaceOnUse" x1="875" x2="974" y1="0" y2="0"><stop offset="0" stop-color="#00ff42"/><stop offset=".02" stop-color="#01ff41"/><stop offset=".131" stop-color="#1eff3b"/><stop offset=".394" stop-color="#6bff2c"/><stop offset=".606" stop-color="#b3ff1e"/><stop offset=".798" stop-color="#fdff0f"/><stop offset="1" stop-color="#ffbe00"/></linearGradient>
<linearGradient id="t23" gradientUnits="userSpaceOnUse" x1="874" x2="978" y1="0" y2="0"><stop offset="0" stop-color="#00ff46"/><stop offset=".019" stop-color="#00ff45"/><stop offset=".106" stop-color="#18ff40"/><stop offset=".365" stop-color="#69ff30"/><stop offset=".558" stop-color="#adff23"/><stop offset=".76" stop-color="#fffe13"/><stop offset=".875" stop-color="#ffd307"/><stop offset="1" stop-color="#ffaf00"/></linearGradient>
<linearGradient id="t24" gradientUnits="userSpaceOnUse" x1="873" x2="981" y1="0" y2="0"><stop offset="0" stop-color="#00ff4a"/><stop offset=".019" stop-color="#00ff49"/><stop offset=".102" stop-color="#18ff44"/><stop offset=".352" stop-color="#69ff35"/><stop offset=".546" stop-color="#b3ff27"/><stop offset=".722" stop-color="#feff18"/><stop offset=".852" stop-color="#ffcd0a"/><stop offset="1" stop-color="#ffa400"/></linearGradient>
<linearGradient id="t25" gradientUnits="userSpaceOnUse" x1="872" x2="985" y1="0" y2="0"><stop offset="0" stop-color="#00ff4e"/><stop offset=".027" stop-color="#02ff4c"/><stop offset=".08" stop-color="#12ff49"/><stop offset=".327" stop-color="#67ff3a"/><stop offset=".513" stop-color="#b1ff2c"/><stop offset=".681" stop-color="#fdff1d"/><stop offset=".832" stop-color="#ffc50c"/><stop offset="1" stop-color="#ff9700"/></linearGradient>
<linearGradient id="t26" gradientUnits="userSpaceOnUse" x1="872" x2="988" y1="0" y2="0"><stop offset="0" stop-color="#00ff51"/><stop offset=".017" stop-color="#01ff51"/><stop offset=".103" stop-color="#1dff4b"/><stop offset=".319" stop-color="#6bff3d"/><stop offset=".483" stop-color="#aeff31"/><stop offset=".655" stop-color="#fffe22"/><stop offset=".733" stop-color="#ffdb17"/><stop offset=".81" stop-color="#ffbf0e"/><stop offset="1" stop-color="#ff8d00"/></linearGradient>
<linearGradient id="t27" gradientUnits="userSpaceOnUse" x1="871" x2="992" y1="0" y2="0"><stop offset="0" stop-color="#00ff56"/><stop offset=".017" stop-color="#0f5"/><stop offset=".091" stop-color="#1aff50"/><stop offset=".306" stop-color="#6bff42"/><stop offset=".471" stop-color="#b4ff35"/><stop offset=".62" stop-color="#ffff28"/><stop offset=".702" stop-color="#ffd81b"/><stop offset=".785" stop-color="#ffba10"/><stop offset=".884" stop-color="#ff9d07"/><stop offset="1" stop-color="#ff8200"/></linearGradient>
<linearGradient id="t28" gradientUnits="userSpaceOnUse" x1="870" x2="995" y1="0" y2="0"><stop offset="0" stop-color="#00ff5a"/><stop offset=".016" stop-color="#00ff59"/><stop offset=".08" stop-color="#17ff55"/><stop offset=".288" stop-color="#69ff47"/><stop offset=".448" stop-color="#b2ff3a"/><stop offset=".592" stop-color="#fdff2d"/><stop offset=".688" stop-color="#ffd21d"/><stop offset=".776" stop-color="#ffb212"/><stop offset=".88" stop-color="#ff9408"/><stop offset="1" stop-color="#ff7a00"/></linearGradient>
<linearGradient id="t29" gradientUnits="userSpaceOnUse" x1="869" x2="999" y1="0" y2="0"><stop offset="0" stop-color="#00ff5f"/><stop offset=".023" stop-color="#02ff5d"/><stop offset=".062" stop-color="#10ff5b"/><stop offset=".269" stop-color="#66ff4c"/><stop offset=".415" stop-color="#acff40"/><stop offset=".569" stop-color="#fffe32"/><stop offset=".654" stop-color="#ffd322"/><stop offset=".754" stop-color="#ffad14"/><stop offset=".869" stop-color="#ff8c08"/><stop offset="1" stop-color="#ff7000"/></linearGradient>
<linearGradient id="t30" gradientUnits="userSpaceOnUse" x1="869" x2="1002" y1="0" y2="0"><stop offset="0" stop-color="#00ff63"/><stop offset=".015" stop-color="#01ff62"/><stop offset=".09" stop-color="#1fff5d"/><stop offset=".271" stop-color="#6eff50"/><stop offset=".414" stop-color="#b5ff44"/><stop offset=".541" stop-color="#ffff38"/><stop offset=".632" stop-color="#ffd026"/><stop offset=".737" stop-color="#ffa817"/><stop offset=".857" stop-color="#ff860a"/><stop offset="1" stop-color="#ff6900"/></linearGradient>
<linearGradient id="t31" gradientUnits="userSpaceOnUse" x1="868" x2="1006" y1="0" y2="0"><stop offset="0" stop-color="#00ff67"/><stop offset=".014" stop-color="#01ff66"/><stop offset=".08" stop-color="#1bff62"/><stop offset=".254" stop-color="#6bff55"/><stop offset=".391" stop-color="#b3ff4a"/><stop offset=".514" stop-color="#fdff3e"/><stop offset=".616" stop-color="#ffca29"/><stop offset=".717" stop-color="#ffa319"/><stop offset=".848" stop-color="#ff7f0a"/><stop offset="1" stop-color="#ff6100"/></linearGradient>
<linearGradient id="t32" gradientUnits="userSpaceOnUse" x1="867" x2="1009" y1="0" y2="0"><stop offset="0" stop-color="#00ff6c"/><stop offset=".014" stop-color="#00ff6b"/><stop offset=".063" stop-color="#15ff68"/><stop offset=".239" stop-color="#68ff5b"/><stop offset=".366" stop-color="#adff50"/><stop offset=".5" stop-color="#fffe43"/><stop offset=".592" stop-color="#ffca2e"/><stop offset=".704" stop-color="#ff9e1b"/><stop offset=".838" stop-color="#ff790c"/><stop offset="1" stop-color="#ff5a00"/></linearGradient>
<linearGradient id="t33" gradientUnits="userSpaceOnUse" x1="866" x2="1013" y1="0" y2="0"><stop offset="0" stop-color="#00ff71"/><stop offset=".014" stop-color="#00ff70"/><stop offset=".054" stop-color="#11ff6d"/><stop offset=".231" stop-color="#69ff60"/><stop offset=".361" stop-color="#b3ff55"/><stop offset=".476" stop-color="#ffff4a"/><stop offset=".571" stop-color="#ffc832"/><stop offset=".687" stop-color="#ff991d"/><stop offset=".83" stop-color="#ff720c"/><stop offset="1" stop-color="#ff5300"/></linearGradient>
<linearGradient id="t34" gradientUnits="userSpaceOnUse" x1="866" x2="1016" y1="0" y2="0"><stop offset="0" stop-color="#00ff76"/><stop offset=".013" stop-color="#02ff75"/><stop offset=".08" stop-color="#21ff70"/><stop offset=".227" stop-color="#6dff65"/><stop offset=".347" stop-color="#b5ff5b"/><stop offset=".453" stop-color="#fdff50"/><stop offset=".553" stop-color="#ffc536"/><stop offset=".673" stop-color="#ff9520"/><stop offset=".82" stop-color="#ff6d0d"/><stop offset="1" stop-color="#ff4d00"/></linearGradient>
<linearGradient id="t35" gradientUnits="userSpaceOnUse" x1="865" x2="1020" y1="0" y2="0"><stop offset="0" stop-color="#00ff7b"/><stop offset=".013" stop-color="#01ff7a"/><stop offset=".058" stop-color="#17ff77"/><stop offset=".206" stop-color="#66ff6c"/><stop offset=".316" stop-color="#aaff63"/><stop offset=".439" stop-color="#fffd56"/><stop offset=".49" stop-color="#ffdb45"/><stop offset=".542" stop-color="#ffbf38"/><stop offset=".665" stop-color="#ff8e21"/><stop offset=".813" stop-color="#ff670e"/><stop offset="1" stop-color="#ff4600"/></linearGradient>
<linearGradient id="t36" gradientUnits="userSpaceOnUse" x1="864" x2="1023" y1="0" y2="0"><stop offset="0" stop-color="#00ff80"/><stop offset=".013" stop-color="#00ff7f"/><stop offset=".05" stop-color="#13ff7d"/><stop offset=".201" stop-color="#67ff72"/><stop offset=".314" stop-color="#b0ff68"/><stop offset=".421" stop-color="#ffff5d"/><stop offset=".472" stop-color="#ffdb4c"/><stop offset=".522" stop-color="#ffbf3d"/><stop offset=".648" stop-color="#ff8c24"/><stop offset=".805" stop-color="#ff620f"/><stop offset="1" stop-color="#ff4100"/></linearGradient>
<linearGradient id="t37" gradientUnits="userSpaceOnUse" x1="863" x2="1027" y1="0" y2="0"><stop offset="0" stop-color="#00ff85"/><stop offset=".012" stop-color="#00ff85"/><stop offset=".043" stop-color="#10ff83"/><stop offset=".195" stop-color="#68ff77"/><stop offset=".305" stop-color="#b2ff6e"/><stop offset=".402" stop-color="#feff64"/><stop offset=".457" stop-color="#ffd850"/><stop offset=".506" stop-color="#ffbc41"/><stop offset=".567" stop-color="#ffa033"/><stop offset=".634" stop-color="#ff8726"/><stop offset=".799" stop-color="#ff5c10"/><stop offset="1" stop-color="#ff3b00"/></linearGradient>
<linearGradient id="t38" gradientUnits="userSpaceOnUse" x1="862" x2="1030" y1="0" y2="0"><stop offset="0" stop-color="#00ff8b"/><stop offset=".012" stop-color="#00ff8a"/><stop offset=".03" stop-color="#09ff89"/><stop offset=".179" stop-color="#61ff7e"/><stop offset=".28" stop-color="#a7ff76"/><stop offset=".393" stop-color="#fffd6a"/><stop offset=".44" stop-color="#ffd957"/><stop offset=".494" stop-color="#ffb945"/><stop offset=".554" stop-color="#ff9d36"/><stop offset=".625" stop-color="#ff8328"/><stop offset=".792" stop-color="#ff5811"/><stop offset="1" stop-color="#ff3700"/></linearGradient>
<linearGradient id="t39" gradientUnits="userSpaceOnUse" x1="862" x2="1034" y1="0" y2="0"><stop offset="0" stop-color="#00ff90"/><stop offset=".012" stop-color="#01ff90"/><stop offset=".052" stop-color="#19ff8d"/><stop offset=".18" stop-color="#69ff84"/><stop offset=".279" stop-color="#b2ff7b"/><stop offset=".372" stop-color="#ffff72"/><stop offset=".419" stop-color="#ffda5e"/><stop offset=".477" stop-color="#ffb649"/><stop offset=".541" stop-color="#ff9838"/><stop offset=".61" stop-color="#ff7e2a"/><stop offset=".779" stop-color="#ff5412"/><stop offset="1" stop-color="#ff3200"/></linearGradient>
<linearGradient id="t40" gradientUnits="userSpaceOnUse" x1="861" x2="1037" y1="0" y2="0"><stop offset="0" stop-color="#00ff96"/><stop offset=".011" stop-color="#01ff96"/><stop offset=".045" stop-color="#15ff93"/><stop offset=".17" stop-color="#66ff8b"/><stop offset=".267" stop-color="#afff83"/><stop offset=".358" stop-color="#feff7a"/><stop offset=".409" stop-color="#ffd762"/><stop offset=".466" stop-color="#ffb34d"/><stop offset=".528" stop-color="#ff953c"/><stop offset=".597" stop-color="#ff7c2d"/><stop offset=".773" stop-color="#ff4f13"/><stop offset="1" stop-color="#ff2d00"/></linearGradient>
<linearGradient id="t41" gradientUnits="userSpaceOnUse" x1="860" x2="1041" y1="0" y2="0"><stop offset="0" stop-color="#00ff9c"/><stop offset=".011" stop-color="#00ff9c"/><stop offset=".033" stop-color="#0dff9a"/><stop offset=".16" stop-color="#63ff92"/><stop offset=".249" stop-color="#a8ff8b"/><stop offset=".348" stop-color="#fffd80"/><stop offset=".398" stop-color="#ffd367"/><stop offset=".453" stop-color="#ffb052"/><stop offset=".514" stop-color="#ff933f"/><stop offset=".586" stop-color="#ff782f"/><stop offset=".762" stop-color="#ff4b14"/><stop offset="1" stop-color="#ff2900"/></linearGradient>
<linearGradient id="t42" gradientUnits="userSpaceOnUse" x1="859" x2="1044" y1="0" y2="0"><stop offset="0" stop-color="#00ffa3"/><stop offset=".011" stop-color="#00ffa2"/><stop offset=".027" stop-color="#09ffa1"/><stop offset=".157" stop-color="#64ff98"/><stop offset=".249" stop-color="#aeff91"/><stop offset=".335" stop-color="#fffe89"/><stop offset=".384" stop-color="#ffd46e"/><stop offset=".438" stop-color="#ffb058"/><stop offset=".503" stop-color="#ff9043"/><stop offset=".578" stop-color="#ff7331"/><stop offset=".665" stop-color="#ff5b21"/><stop offset=".762" stop-color="#ff4614"/><stop offset="1" stop-color="#ff2500"/></linearGradient>
<linearGradient id="t43" gradientUnits="userSpaceOnUse" x1="859" x2="1048" y1="0" y2="0"><stop offset="0" stop-color="#00ffa9"/><stop offset=".011" stop-color="#02ffa8"/><stop offset=".048" stop-color="#1affa6"/><stop offset=".153" stop-color="#68ff9f"/><stop offset=".238" stop-color="#b1ff99"/><stop offset=".317" stop-color="#feff92"/><stop offset=".37" stop-color="#ffd173"/><stop offset=".423" stop-color="#ffad5c"/><stop offset=".492" stop-color="#ff8b45"/><stop offset=".566" stop-color="#ff6f33"/><stop offset=".651" stop-color="#ff5823"/><stop offset=".751" stop-color="#ff4215"/><stop offset="1" stop-color="#ff2100"/></linearGradient>
<linearGradient id="t44" gradientUnits="userSpaceOnUse" x1="858" x2="1051" y1="0" y2="0"><stop offset="0" stop-color="#00ffb0"/><stop offset=".01" stop-color="#01ffaf"/><stop offset=".036" stop-color="#13ffae"/><stop offset=".145" stop-color="#65ffa7"/><stop offset=".223" stop-color="#a9ffa1"/><stop offset=".311" stop-color="#fffc98"/><stop offset=".358" stop-color="#ffd17b"/><stop offset=".415" stop-color="#ffaa60"/><stop offset=".482" stop-color="#ff8849"/><stop offset=".554" stop-color="#ff6d36"/><stop offset=".642" stop-color="#ff5425"/><stop offset=".746" stop-color="#ff3f16"/><stop offset="1" stop-color="#ff1d00"/></linearGradient>
<linearGradient id="t45" gradientUnits="userSpaceOnUse" x1="857" x2="1055" y1="0" y2="0"><stop offset="0" stop-color="#00ffb6"/><stop offset=".01" stop-color="#00ffb6"/><stop offset=".03" stop-color="#0fffb5"/><stop offset=".141" stop-color="#66ffae"/><stop offset=".217" stop-color="#abffa9"/><stop offset=".298" stop-color="#fffea2"/><stop offset=".348" stop-color="#ffce80"/><stop offset=".404" stop-color="#ffa764"/><stop offset=".47" stop-color="#ff854c"/><stop offset=".545" stop-color="#ff6938"/><stop offset=".636" stop-color="#ff5026"/><stop offset=".737" stop-color="#ff3b17"/><stop offset="1" stop-color="#ff1900"/></linearGradient>
<linearGradient id="t46" gradientUnits="userSpaceOnUse" x1="856" x2="1058" y1="0" y2="0"><stop offset="0" stop-color="#00ffbd"/><stop offset=".01" stop-color="#00ffbd"/><stop offset=".02" stop-color="#07ffbd"/><stop offset=".134" stop-color="#62ffb6"/><stop offset=".213" stop-color="#adffb1"/><stop offset=".287" stop-color="#feffac"/><stop offset=".337" stop-color="#ffcf88"/><stop offset=".391" stop-color="#ffa76b"/><stop offset=".455" stop-color="#ff8551"/><stop offset=".535" stop-color="#ff663b"/><stop offset=".624" stop-color="#ff4e28"/><stop offset=".733" stop-color="#ff3718"/><stop offset="1" stop-color="#ff1600"/></linearGradient>
<linearGradient id="t47" gradientUnits="userSpaceOnUse" x1="856" x2="1062" y1="0" y2="0"><stop offset="0" stop-color="#00ffc5"/><stop offset=".01" stop-color="#02ffc4"/><stop offset=".039" stop-color="#19ffc3"/><stop offset=".131" stop-color="#68ffbe"/><stop offset=".194" stop-color="#a5ffba"/><stop offset=".277" stop-color="#fffcb3"/><stop offset=".325" stop-color="#ffcb8d"/><stop offset=".379" stop-color="#ffa46f"/><stop offset=".447" stop-color="#ff8053"/><stop offset=".524" stop-color="#ff623d"/><stop offset=".617" stop-color="#ff4929"/><stop offset=".723" stop-color="#ff3419"/><stop offset="1" stop-color="#ff1200"/></linearGradient>
<linearGradient id="t48" gradientUnits="userSpaceOnUse" x1="855" x2="1065" y1="0" y2="0"><stop offset="0" stop-color="#0fc"/><stop offset=".01" stop-color="#01ffcc"/><stop offset=".033" stop-color="#14ffcb"/><stop offset=".129" stop-color="#68ffc6"/><stop offset=".195" stop-color="#adffc3"/><stop offset=".267" stop-color="#fffebe"/><stop offset=".314" stop-color="#ffcc96"/><stop offset=".371" stop-color="#ffa173"/><stop offset=".438" stop-color="#ff7d57"/><stop offset=".514" stop-color="#ff6040"/><stop offset=".61" stop-color="#ff462b"/><stop offset=".719" stop-color="#ff311a"/><stop offset="1" stop-color="#ff0f00"/></linearGradient>
<linearGradient id="t49" gradientUnits="userSpaceOnUse" x1="854" x2="1069" y1="0" y2="0"><stop offset="0" stop-color="#00ffd4"/><stop offset=".009" stop-color="#01ffd4"/><stop offset=".023" stop-color="#0cffd3"/><stop offset=".121" stop-color="#65ffcf"/><stop offset=".191" stop-color="#afffcc"/><stop offset=".256" stop-color="#feffc8"/><stop offset=".302" stop-color="#ffcc9e"/><stop offset=".358" stop-color="#ffa17a"/><stop offset=".423" stop-color="#ff7d5c"/><stop offset=".502" stop-color="#ff5e43"/><stop offset=".595" stop-color="#ff442d"/><stop offset=".707" stop-color="#ff2e1b"/><stop offset=".856" stop-color="#ff1a0a"/><stop offset="1" stop-color="#ff0c00"/></linearGradient>
<linearGradient id="t50" gradientUnits="userSpaceOnUse" x1="853" x2="1072" y1="0" y2="0"><stop offset="0" stop-color="#00ffdc"/><stop offset=".014" stop-color="#04ffdc"/><stop offset=".11" stop-color="#5cffd8"/><stop offset=".174" stop-color="#a1ffd6"/><stop offset=".247" stop-color="#fcffd3"/><stop offset=".251" stop-color="#fffcd0"/><stop offset=".297" stop-color="#ffc9a4"/><stop offset=".352" stop-color="#ff9d7f"/><stop offset=".42" stop-color="#ff785e"/><stop offset=".498" stop-color="#ff5a44"/><stop offset=".594" stop-color="#ff402e"/><stop offset=".703" stop-color="#ff2b1c"/><stop offset=".854" stop-color="#ff170b"/><stop offset="1" stop-color="#ff0900"/></linearGradient>
<linearGradient id="t51" gradientUnits="userSpaceOnUse" x1="852" x2="1076" y1="0" y2="0"><stop offset="0" stop-color="#00ffe4"/><stop offset=".013" stop-color="#03ffe4"/><stop offset=".107" stop-color="#5dffe2"/><stop offset=".174" stop-color="#a9ffe0"/><stop offset=".241" stop-color="#fffddc"/><stop offset=".286" stop-color="#ffc9ad"/><stop offset=".344" stop-color="#ff9a83"/><stop offset=".411" stop-color="#ff7562"/><stop offset=".487" stop-color="#ff5747"/><stop offset=".58" stop-color="#ff3e30"/><stop offset=".696" stop-color="#ff281d"/><stop offset=".848" stop-color="#ff140b"/><stop offset="1" stop-color="#ff0600"/></linearGradient>
<linearGradient id="t52" gradientUnits="userSpaceOnUse" x1="852" x2="1079" y1="0" y2="0"><stop offset="0" stop-color="#00ffed"/><stop offset=".009" stop-color="#02ffed"/><stop offset=".026" stop-color="#12ffec"/><stop offset=".11" stop-color="#67ffeb"/><stop offset=".172" stop-color="#b1ffea"/><stop offset=".229" stop-color="#ffffe8"/><stop offset=".278" stop-color="#ffc5b3"/><stop offset=".33" stop-color="#ff9a8a"/><stop offset=".396" stop-color="#ff7467"/><stop offset=".476" stop-color="#ff554a"/><stop offset=".573" stop-color="#ff3b32"/><stop offset=".687" stop-color="#ff251e"/><stop offset=".841" stop-color="#ff110c"/><stop offset="1" stop-color="#ff0400"/></linearGradient>
<linearGradient id="t53" gradientUnits="userSpaceOnUse" x1="851" x2="1083" y1="0" y2="0"><stop offset="0" stop-color="#00fff6"/><stop offset=".009" stop-color="#01fff6"/><stop offset=".017" stop-color="#09fff6"/><stop offset=".099" stop-color="#5efff5"/><stop offset=".155" stop-color="#a2fff4"/><stop offset=".22" stop-color="#fcfff4"/><stop offset=".224" stop-color="#fffbf0"/><stop offset=".267" stop-color="#ffc6bd"/><stop offset=".323" stop-color="#ff978f"/><stop offset=".388" stop-color="#ff716b"/><stop offset=".47" stop-color="#ff514c"/><stop offset=".569" stop-color="#ff3733"/><stop offset=".685" stop-color="#ff211e"/><stop offset=".841" stop-color="#ff0e0c"/><stop offset="1" stop-color="#ff0100"/></linearGradient>
<linearGradient id="t54" gradientUnits="userSpaceOnUse" x1="850" x2="1084" y1="0" y2="0"><stop offset="0" stop-color="#0ff"/><stop offset=".013" stop-color="#04ffff"/><stop offset=".098" stop-color="#5fffff"/><stop offset=".158" stop-color="#aff"/><stop offset=".218" stop-color="#fffdfe"/><stop offset=".261" stop-color="#ffc7c7"/><stop offset=".316" stop-color="#ff9697"/><stop offset=".385" stop-color="#ff6e6f"/><stop offset=".466" stop-color="#ff4f4f"/><stop offset=".564" stop-color="#ff3435"/><stop offset=".684" stop-color="#ff1f20"/><stop offset=".838" stop-color="#ff0c0d"/><stop offset="1" stop-color="#f00"/></linearGradient>
<linearGradient id="t55" gradientUnits="userSpaceOnUse" x1="849" x2="1080" y1="0" y2="0"><stop offset="0" stop-color="#00f6ff"/><stop offset=".013" stop-color="#03f6ff"/><stop offset=".104" stop-color="#61f5ff"/><stop offset=".165" stop-color="#abf4ff"/><stop offset=".225" stop-color="#fff2fe"/><stop offset=".268" stop-color="#ffbec8"/><stop offset=".325" stop-color="#ff9098"/><stop offset=".39" stop-color="#ff6c73"/><stop offset=".472" stop-color="#ff4c52"/><stop offset=".571" stop-color="#ff3238"/><stop offset=".688" stop-color="#ff1e22"/><stop offset=".844" stop-color="#ff0b0f"/><stop offset="1" stop-color="#ff0002"/></linearGradient>
<linearGradient id="t56" gradientUnits="userSpaceOnUse" x1="849" x2="1075" y1="0" y2="0"><stop offset="0" stop-color="#00edff"/><stop offset=".009" stop-color="#02edff"/><stop offset=".031" stop-color="#17ecff"/><stop offset=".111" stop-color="#68ebff"/><stop offset=".173" stop-color="#b1e9ff"/><stop offset=".23" stop-color="#ffe7ff"/><stop offset=".279" stop-color="#ffb2c5"/><stop offset=".332" stop-color="#ff8a9a"/><stop offset=".398" stop-color="#ff6774"/><stop offset=".478" stop-color="#ff4a55"/><stop offset=".575" stop-color="#ff313b"/><stop offset=".69" stop-color="#ff1d26"/><stop offset=".85" stop-color="#ff0b12"/><stop offset="1" stop-color="#ff0005"/></linearGradient>
<linearGradient id="t57" gradientUnits="userSpaceOnUse" x1="848" x2="1070" y1="0" y2="0"><stop offset="0" stop-color="#00e4ff"/><stop offset=".009" stop-color="#01e4ff"/><stop offset=".023" stop-color="#0de4ff"/><stop offset=".113" stop-color="#65e1ff"/><stop offset=".176" stop-color="#acdfff"/><stop offset=".239" stop-color="#fedcff"/><stop offset=".288" stop-color="#ffaac7"/><stop offset=".342" stop-color="#ff849c"/><stop offset=".41" stop-color="#ff6276"/><stop offset=".486" stop-color="#ff4758"/><stop offset=".581" stop-color="#ff303e"/><stop offset=".698" stop-color="#ff1c28"/><stop offset=".856" stop-color="#ff0a14"/><stop offset="1" stop-color="#ff0007"/></linearGradient>
<linearGradient id="t58" gradientUnits="userSpaceOnUse" x1="847" x2="1065" y1="0" y2="0"><stop offset="0" stop-color="#00dcff"/><stop offset=".014" stop-color="#04dcff"/><stop offset=".11" stop-color="#5dd8ff"/><stop offset=".17" stop-color="#9dd6ff"/><stop offset=".248" stop-color="#fdd2ff"/><stop offset=".252" stop-color="#ffcefb"/><stop offset=".298" stop-color="#ffa3c8"/><stop offset=".353" stop-color="#ff7e9d"/><stop offset=".422" stop-color="#ff5d78"/><stop offset=".5" stop-color="#ff435a"/><stop offset=".596" stop-color="#ff2d40"/><stop offset=".706" stop-color="#ff1b2b"/><stop offset=".862" stop-color="#ff0a17"/><stop offset="1" stop-color="#ff000a"/></linearGradient>
<linearGradient id="t59" gradientUnits="userSpaceOnUse" x1="846" x2="1060" y1="0" y2="0"><stop offset="0" stop-color="#00d4ff"/><stop offset=".014" stop-color="#03d4ff"/><stop offset=".117" stop-color="#5fcfff"/><stop offset=".182" stop-color="#a3ccff"/><stop offset=".257" stop-color="#fcc8ff"/><stop offset=".262" stop-color="#ffc5fc"/><stop offset=".308" stop-color="#ff9bca"/><stop offset=".364" stop-color="#ff789f"/><stop offset=".43" stop-color="#ff5a7b"/><stop offset=".509" stop-color="#ff415d"/><stop offset=".603" stop-color="#ff2c44"/><stop offset=".715" stop-color="#ff1a2e"/><stop offset=".869" stop-color="#ff0919"/><stop offset="1" stop-color="#ff000d"/></linearGradient>
<linearGradient id="t60" gradientUnits="userSpaceOnUse" x1="845" x2="1055" y1="0" y2="0"><stop offset="0" stop-color="#0cf"/><stop offset=".014" stop-color="#02ccff"/><stop offset=".119" stop-color="#5cc7ff"/><stop offset=".19" stop-color="#a4c3ff"/><stop offset=".271" stop-color="#ffbcfc"/><stop offset=".319" stop-color="#ff94cb"/><stop offset=".376" stop-color="#ff72a0"/><stop offset=".443" stop-color="#ff567d"/><stop offset=".519" stop-color="#ff3e60"/><stop offset=".61" stop-color="#ff2b47"/><stop offset=".719" stop-color="#ff1932"/><stop offset="1" stop-color="#ff0010"/></linearGradient>
<linearGradient id="t61" gradientUnits="userSpaceOnUse" x1="845" x2="1050" y1="0" y2="0"><stop offset="0" stop-color="#00c5ff"/><stop offset=".01" stop-color="#02c4ff"/><stop offset=".034" stop-color="#14c3ff"/><stop offset=".132" stop-color="#67beff"/><stop offset=".2" stop-color="#a9baff"/><stop offset=".278" stop-color="#ffb3fd"/><stop offset=".327" stop-color="#ff8dcc"/><stop offset=".38" stop-color="#ff6fa5"/><stop offset=".449" stop-color="#ff5381"/><stop offset=".527" stop-color="#ff3c63"/><stop offset=".62" stop-color="#ff284a"/><stop offset=".727" stop-color="#ff1835"/><stop offset="1" stop-color="#ff0013"/></linearGradient>
<linearGradient id="t62" gradientUnits="userSpaceOnUse" x1="844" x2="1045" y1="0" y2="0"><stop offset="0" stop-color="#00beff"/><stop offset=".01" stop-color="#01bdff"/><stop offset=".03" stop-color="#0fbcff"/><stop offset=".134" stop-color="#64b6ff"/><stop offset=".209" stop-color="#aab1ff"/><stop offset=".289" stop-color="#ffaafe"/><stop offset=".338" stop-color="#ff86cd"/><stop offset=".393" stop-color="#ff69a6"/><stop offset=".458" stop-color="#ff5085"/><stop offset=".537" stop-color="#ff3a66"/><stop offset=".627" stop-color="#ff274e"/><stop offset=".731" stop-color="#ff1838"/><stop offset="1" stop-color="#ff0017"/></linearGradient>
<linearGradient id="t63" gradientUnits="userSpaceOnUse" x1="843" x2="1040" y1="0" y2="0"><stop offset="0" stop-color="#00b7ff"/><stop offset=".01" stop-color="#00b6ff"/><stop offset=".025" stop-color="#0bb5ff"/><stop offset=".142" stop-color="#66aeff"/><stop offset=".223" stop-color="#b0a8ff"/><stop offset=".299" stop-color="#ffa2ff"/><stop offset=".345" stop-color="#ff82d3"/><stop offset=".401" stop-color="#ff66ab"/><stop offset=".467" stop-color="#ff4d88"/><stop offset=".543" stop-color="#ff386b"/><stop offset=".635" stop-color="#ff2651"/><stop offset=".736" stop-color="#ff173c"/><stop offset="1" stop-color="#ff001a"/></linearGradient>
<linearGradient id="t64" gradientUnits="userSpaceOnUse" x1="842" x2="1035" y1="0" y2="0"><stop offset="0" stop-color="#00b0ff"/><stop offset=".01" stop-color="#00afff"/><stop offset=".021" stop-color="#06afff"/><stop offset=".145" stop-color="#63a7ff"/><stop offset=".233" stop-color="#b0a0ff"/><stop offset=".311" stop-color="#fe99ff"/><stop offset=".358" stop-color="#ff7bd4"/><stop offset=".415" stop-color="#ff60ac"/><stop offset=".477" stop-color="#ff4a8c"/><stop offset=".554" stop-color="#ff366e"/><stop offset=".642" stop-color="#ff2555"/><stop offset=".746" stop-color="#ff1640"/><stop offset="1" stop-color="#ff001e"/></linearGradient>
<linearGradient id="t65" gradientUnits="userSpaceOnUse" x1="842" x2="1029" y1="0" y2="0"><stop offset="0" stop-color="#00a9ff"/><stop offset=".011" stop-color="#02a8ff"/><stop offset=".048" stop-color="#1aa6ff"/><stop offset=".155" stop-color="#699fff"/><stop offset=".241" stop-color="#b198ff"/><stop offset=".321" stop-color="#fe91ff"/><stop offset=".374" stop-color="#ff72d1"/><stop offset=".428" stop-color="#ff5bae"/><stop offset=".492" stop-color="#ff468d"/><stop offset=".567" stop-color="#ff3371"/><stop offset=".652" stop-color="#ff2359"/><stop offset=".754" stop-color="#ff1544"/><stop offset="1" stop-color="#f02"/></linearGradient>
<linearGradient id="t66" gradientUnits="userSpaceOnUse" x1="841" x2="1024" y1="0" y2="0"><stop offset="0" stop-color="#00a3ff"/><stop offset=".011" stop-color="#01a2ff"/><stop offset=".033" stop-color="#0fa1ff"/><stop offset=".153" stop-color="#6298ff"/><stop offset=".235" stop-color="#a392ff"/><stop offset=".333" stop-color="#fd89ff"/><stop offset=".339" stop-color="#ff86fc"/><stop offset=".388" stop-color="#ff6cd2"/><stop offset=".443" stop-color="#ff56af"/><stop offset=".508" stop-color="#ff418f"/><stop offset=".579" stop-color="#ff3175"/><stop offset=".661" stop-color="#ff225d"/><stop offset=".76" stop-color="#ff1448"/><stop offset="1" stop-color="#ff0026"/></linearGradient>
<linearGradient id="t67" gradientUnits="userSpaceOnUse" x1="840" x2="1019" y1="0" y2="0"><stop offset="0" stop-color="#009cff"/><stop offset=".011" stop-color="#009cff"/><stop offset=".034" stop-color="#0e9aff"/><stop offset=".162" stop-color="#6391ff"/><stop offset=".246" stop-color="#a48aff"/><stop offset=".352" stop-color="#ff7ffc"/><stop offset=".402" stop-color="#ff66d3"/><stop offset=".458" stop-color="#ff50b0"/><stop offset=".52" stop-color="#ff3e93"/><stop offset=".592" stop-color="#ff2e78"/><stop offset=".771" stop-color="#ff134c"/><stop offset="1" stop-color="#ff002a"/></linearGradient>
<linearGradient id="t68" gradientUnits="userSpaceOnUse" x1="839" x2="1014" y1="0" y2="0"><stop offset="0" stop-color="#0096ff"/><stop offset=".011" stop-color="#0096ff"/><stop offset=".029" stop-color="#0995ff"/><stop offset=".166" stop-color="#618bff"/><stop offset=".263" stop-color="#a983ff"/><stop offset=".366" stop-color="#ff78fd"/><stop offset=".411" stop-color="#ff62d8"/><stop offset=".469" stop-color="#ff4db5"/><stop offset=".531" stop-color="#ff3b96"/><stop offset=".606" stop-color="#ff2b7b"/><stop offset=".777" stop-color="#ff1250"/><stop offset="1" stop-color="#ff002f"/></linearGradient>
<linearGradient id="t69" gradientUnits="userSpaceOnUse" x1="839" x2="1009" y1="0" y2="0"><stop offset="0" stop-color="#0090ff"/><stop offset=".012" stop-color="#0290ff"/><stop offset=".059" stop-color="#1d8cff"/><stop offset=".182" stop-color="#6a83ff"/><stop offset=".276" stop-color="#ae7bff"/><stop offset=".376" stop-color="#ff71fe"/><stop offset=".424" stop-color="#ff5cd9"/><stop offset=".482" stop-color="#ff48b6"/><stop offset=".541" stop-color="#ff399a"/><stop offset=".612" stop-color="#ff2a80"/><stop offset=".782" stop-color="#f15"/><stop offset="1" stop-color="#f03"/></linearGradient>
<linearGradient id="t70" gradientUnits="userSpaceOnUse" x1="838" x2="1004" y1="0" y2="0"><stop offset="0" stop-color="#008bff"/><stop offset=".012" stop-color="#018aff"/><stop offset=".054" stop-color="#1887ff"/><stop offset=".187" stop-color="#687dff"/><stop offset=".289" stop-color="#ae74ff"/><stop offset=".392" stop-color="#ff6afe"/><stop offset=".44" stop-color="#ff56da"/><stop offset=".494" stop-color="#ff45ba"/><stop offset=".554" stop-color="#ff369e"/><stop offset=".627" stop-color="#ff2783"/><stop offset=".789" stop-color="#ff115a"/><stop offset="1" stop-color="#ff0038"/></linearGradient>
<linearGradient id="t71" gradientUnits="userSpaceOnUse" x1="837" x2="999" y1="0" y2="0"><stop offset="0" stop-color="#0085ff"/><stop offset=".012" stop-color="#0084ff"/><stop offset=".056" stop-color="#1782ff"/><stop offset=".198" stop-color="#6977ff"/><stop offset=".309" stop-color="#b36dff"/><stop offset=".407" stop-color="#ff63ff"/><stop offset=".457" stop-color="#ff50db"/><stop offset=".506" stop-color="#ff42be"/><stop offset=".568" stop-color="#ff33a2"/><stop offset=".636" stop-color="#ff2689"/><stop offset=".796" stop-color="#ff105f"/><stop offset="1" stop-color="#ff003d"/></linearGradient>
<linearGradient id="t72" gradientUnits="userSpaceOnUse" x1="836" x2="994" y1="0" y2="0"><stop offset="0" stop-color="#0080ff"/><stop offset=".013" stop-color="#007fff"/><stop offset=".044" stop-color="#0f7dff"/><stop offset=".203" stop-color="#6671ff"/><stop offset=".316" stop-color="#af67ff"/><stop offset=".424" stop-color="#fe5cff"/><stop offset=".475" stop-color="#ff4bdc"/><stop offset=".525" stop-color="#ff3dc0"/><stop offset=".652" stop-color="#ff238c"/><stop offset=".81" stop-color="#ff0e63"/><stop offset="1" stop-color="#ff0043"/></linearGradient>
<linearGradient id="t73" gradientUnits="userSpaceOnUse" x1="835" x2="989" y1="0" y2="0"><stop offset="0" stop-color="#007bff"/><stop offset=".013" stop-color="#007aff"/><stop offset=".039" stop-color="#0b78ff"/><stop offset=".208" stop-color="#646cff"/><stop offset=".331" stop-color="#b061ff"/><stop offset=".442" stop-color="#fe56ff"/><stop offset=".545" stop-color="#ff38c1"/><stop offset=".662" stop-color="#ff2192"/><stop offset=".812" stop-color="#ff0e69"/><stop offset="1" stop-color="#ff0048"/></linearGradient>
<linearGradient id="t74" gradientUnits="userSpaceOnUse" x1="835" x2="984" y1="0" y2="0"><stop offset="0" stop-color="#0075ff"/><stop offset=".013" stop-color="#0175ff"/><stop offset=".067" stop-color="#1a71ff"/><stop offset=".215" stop-color="#6566ff"/><stop offset=".329" stop-color="#a85cff"/><stop offset=".463" stop-color="#ff4efc"/><stop offset=".557" stop-color="#ff35c5"/><stop offset=".678" stop-color="#ff1f95"/><stop offset=".826" stop-color="#ff0d6e"/><stop offset="1" stop-color="#ff004e"/></linearGradient>
<linearGradient id="t75" gradientUnits="userSpaceOnUse" x1="834" x2="979" y1="0" y2="0"><stop offset="0" stop-color="#0071ff"/><stop offset=".014" stop-color="#0170ff"/><stop offset=".062" stop-color="#166cff"/><stop offset=".228" stop-color="#6760ff"/><stop offset=".345" stop-color="#a856ff"/><stop offset=".483" stop-color="#ff48fd"/><stop offset=".579" stop-color="#ff30c6"/><stop offset=".697" stop-color="#ff1c98"/><stop offset=".834" stop-color="#ff0c73"/><stop offset="1" stop-color="#f05"/></linearGradient>
<linearGradient id="t76" gradientUnits="userSpaceOnUse" x1="833" x2="974" y1="0" y2="0"><stop offset="0" stop-color="#006cff"/><stop offset=".014" stop-color="#006bff"/><stop offset=".057" stop-color="#1268ff"/><stop offset=".234" stop-color="#645bff"/><stop offset=".362" stop-color="#a950ff"/><stop offset=".504" stop-color="#ff42fd"/><stop offset=".596" stop-color="#ff2dca"/><stop offset=".709" stop-color="#ff1a9e"/><stop offset=".844" stop-color="#ff0b79"/><stop offset="1" stop-color="#ff005b"/></linearGradient>
<linearGradient id="t77" gradientUnits="userSpaceOnUse" x1="832" x2="969" y1="0" y2="0"><stop offset="0" stop-color="#0067ff"/><stop offset=".015" stop-color="#06f"/><stop offset=".058" stop-color="#1163ff"/><stop offset=".248" stop-color="#6656ff"/><stop offset=".387" stop-color="#ae4aff"/><stop offset=".526" stop-color="#ff3cfe"/><stop offset=".613" stop-color="#ff29cf"/><stop offset=".723" stop-color="#ff18a4"/><stop offset=".847" stop-color="#ff0a81"/><stop offset="1" stop-color="#ff0063"/></linearGradient>
<linearGradient id="t78" gradientUnits="userSpaceOnUse" x1="832" x2="964" y1="0" y2="0"><stop offset="0" stop-color="#0062ff"/><stop offset=".015" stop-color="#0261ff"/><stop offset=".098" stop-color="#225cff"/><stop offset=".273" stop-color="#6e4fff"/><stop offset=".409" stop-color="#b244ff"/><stop offset=".545" stop-color="#ff37ff"/><stop offset=".636" stop-color="#ff25d0"/><stop offset=".735" stop-color="#ff16aa"/><stop offset=".856" stop-color="#ff0988"/><stop offset="1" stop-color="#ff006a"/></linearGradient>
<linearGradient id="t79" gradientUnits="userSpaceOnUse" x1="831" x2="959" y1="0" y2="0"><stop offset="0" stop-color="#005eff"/><stop offset=".016" stop-color="#015dff"/><stop offset=".094" stop-color="#1e58ff"/><stop offset=".281" stop-color="#6c4aff"/><stop offset=".43" stop-color="#b23eff"/><stop offset=".57" stop-color="#ff31ff"/><stop offset=".656" stop-color="#ff21d4"/><stop offset=".758" stop-color="#ff13ae"/><stop offset=".867" stop-color="#ff088f"/><stop offset="1" stop-color="#ff0072"/></linearGradient>
<linearGradient id="t80" gradientUnits="userSpaceOnUse" x1="830" x2="954" y1="0" y2="0"><stop offset="0" stop-color="#005aff"/><stop offset=".016" stop-color="#0059ff"/><stop offset=".081" stop-color="#1755ff"/><stop offset=".29" stop-color="#6946ff"/><stop offset=".452" stop-color="#b339ff"/><stop offset=".597" stop-color="#fe2cff"/><stop offset=".685" stop-color="#ff1dd5"/><stop offset=".774" stop-color="#ff11b4"/><stop offset=".879" stop-color="#ff0796"/><stop offset="1" stop-color="#ff007b"/></linearGradient>
<linearGradient id="t81" gradientUnits="userSpaceOnUse" x1="829" x2="949" y1="0" y2="0"><stop offset="0" stop-color="#05f"/><stop offset=".017" stop-color="#0054ff"/><stop offset=".075" stop-color="#1351ff"/><stop offset=".3" stop-color="#6742ff"/><stop offset=".467" stop-color="#af35ff"/><stop offset=".625" stop-color="#fe26ff"/><stop offset=".708" stop-color="#ff1ad9"/><stop offset=".792" stop-color="#ff0fba"/><stop offset=".892" stop-color="#ff069d"/><stop offset="1" stop-color="#ff0084"/></linearGradient>
<linearGradient id="t82" gradientUnits="userSpaceOnUse" x1="828" x2="944" y1="0" y2="0"><stop offset="0" stop-color="#0051ff"/><stop offset=".026" stop-color="#0250ff"/><stop offset=".069" stop-color="#104dff"/><stop offset=".31" stop-color="#653dff"/><stop offset=".491" stop-color="#b030ff"/><stop offset=".655" stop-color="#fd21ff"/><stop offset=".819" stop-color="#ff0cbe"/><stop offset="1" stop-color="#ff008e"/></linearGradient>
<linearGradient id="t83" gradientUnits="userSpaceOnUse" x1="828" x2="939" y1="0" y2="0"><stop offset="0" stop-color="#004dff"/><stop offset=".018" stop-color="#014cff"/><stop offset=".108" stop-color="#1d47ff"/><stop offset=".333" stop-color="#6938ff"/><stop offset=".505" stop-color="#ac2bff"/><stop offset=".694" stop-color="#ff1bfd"/><stop offset=".829" stop-color="#ff0bc8"/><stop offset="1" stop-color="#f09"/></linearGradient>
<linearGradient id="t84" gradientUnits="userSpaceOnUse" x1="827" x2="934" y1="0" y2="0"><stop offset="0" stop-color="#0049ff"/><stop offset=".019" stop-color="#0048ff"/><stop offset=".112" stop-color="#1c43ff"/><stop offset=".355" stop-color="#6b33ff"/><stop offset=".533" stop-color="#ad27ff"/><stop offset=".729" stop-color="#ff16fe"/><stop offset=".85" stop-color="#ff09cf"/><stop offset="1" stop-color="#ff00a5"/></linearGradient>
<linearGradient id="t85" gradientUnits="userSpaceOnUse" x1="826" x2="929" y1="0" y2="0"><stop offset="0" stop-color="#0045ff"/><stop offset=".019" stop-color="#04f"/><stop offset=".107" stop-color="#1840ff"/><stop offset=".369" stop-color="#6830ff"/><stop offset=".563" stop-color="#ad22ff"/><stop offset=".767" stop-color="#ff12fe"/><stop offset=".874" stop-color="#ff07d6"/><stop offset="1" stop-color="#ff00b2"/></linearGradient>
<linearGradient id="t86" gradientUnits="userSpaceOnUse" x1="825" x2="924" y1="0" y2="0"><stop offset="0" stop-color="#0042ff"/><stop offset=".03" stop-color="#0240ff"/><stop offset=".101" stop-color="#143cff"/><stop offset=".394" stop-color="#6a2bff"/><stop offset=".606" stop-color="#b11dff"/><stop offset=".808" stop-color="#ff0dff"/><stop offset=".899" stop-color="#ff04dd"/><stop offset="1" stop-color="#ff00bf"/></linearGradient>
<linearGradient id="t87" gradientUnits="userSpaceOnUse" x1="825" x2="918" y1="0" y2="0"><stop offset="0" stop-color="#003eff"/><stop offset=".022" stop-color="#013dff"/><stop offset=".151" stop-color="#2136ff"/><stop offset=".43" stop-color="#6e26ff"/><stop offset=".656" stop-color="#b517ff"/><stop offset=".86" stop-color="#ff08ff"/><stop offset="1" stop-color="#ff00d1"/></linearGradient>
<linearGradient id="t88" gradientUnits="userSpaceOnUse" x1="824" x2="913" y1="0" y2="0"><stop offset="0" stop-color="#003aff"/><stop offset=".022" stop-color="#0139ff"/><stop offset=".146" stop-color="#1d33ff"/><stop offset=".449" stop-color="#6c23ff"/><stop offset=".685" stop-color="#b214ff"/><stop offset=".91" stop-color="#fe04ff"/><stop offset="1" stop-color="#ff00e2"/></linearGradient>
<linearGradient id="t89" gradientUnits="userSpaceOnUse" x1="823" x2="908" y1="0" y2="0"><stop offset="0" stop-color="#0037ff"/><stop offset=".024" stop-color="#0036ff"/><stop offset=".094" stop-color="#0f32ff"/><stop offset=".412" stop-color="#5b22ff"/><stop offset=".694" stop-color="#a812ff"/><stop offset=".965" stop-color="#fe00ff"/><stop offset="1" stop-color="#ff00f5"/></linearGradient>
<linearGradient id="t90" gradientUnits="userSpaceOnUse" x1="822" x2="903" y1="0" y2="0"><stop offset="0" stop-color="#03f"/><stop offset=".025" stop-color="#0032ff"/><stop offset=".123" stop-color="#142eff"/><stop offset=".481" stop-color="#651cff"/><stop offset=".753" stop-color="#ac0dff"/><stop offset="1" stop-color="#f500ff"/></linearGradient>
<linearGradient id="t91" gradientUnits="userSpaceOnUse" x1="822" x2="898" y1="0" y2="0"><stop offset="0" stop-color="#0030ff"/><stop offset=".026" stop-color="#012fff"/><stop offset=".158" stop-color="#1b29ff"/><stop offset=".487" stop-color="#601aff"/><stop offset=".75" stop-color="#9f0cff"/><stop offset="1" stop-color="#e200ff"/></linearGradient>
<linearGradient id="t92" gradientUnits="userSpaceOnUse" x1="821" x2="893" y1="0" y2="0"><stop offset="0" stop-color="#002cff"/><stop offset=".028" stop-color="#012bff"/><stop offset=".125" stop-color="#1228ff"/><stop offset=".472" stop-color="#5518ff"/><stop offset=".75" stop-color="#920bff"/><stop offset="1" stop-color="#cf00ff"/></linearGradient>
<linearGradient id="t93" gradientUnits="userSpaceOnUse" x1="820" x2="888" y1="0" y2="0"><stop offset="0" stop-color="#0029ff"/><stop offset=".074" stop-color="#0827ff"/><stop offset=".456" stop-color="#4b17ff"/><stop offset=".735" stop-color="#830aff"/><stop offset="1" stop-color="#be00ff"/></linearGradient>
<linearGradient id="t94" gradientUnits="userSpaceOnUse" x1="819" x2="883" y1="0" y2="0"><stop offset="0" stop-color="#0026ff"/><stop offset=".047" stop-color="#0225ff"/><stop offset=".438" stop-color="#4216ff"/><stop offset="1" stop-color="#ad00ff"/></linearGradient>
<linearGradient id="t95" gradientUnits="userSpaceOnUse" x1="818" x2="878" y1="0" y2="0"><stop offset="0" stop-color="#0023ff"/><stop offset=".05" stop-color="#0222ff"/><stop offset=".417" stop-color="#3815ff"/><stop offset="1" stop-color="#9e00ff"/></linearGradient>
<linearGradient id="t96" gradientUnits="userSpaceOnUse" x1="818" x2="873" y1="0" y2="0"><stop offset="0" stop-color="#0020ff"/><stop offset=".036" stop-color="#011fff"/><stop offset=".436" stop-color="#3712ff"/><stop offset="1" stop-color="#8f00ff"/></linearGradient>
<linearGradient id="t97" gradientUnits="userSpaceOnUse" x1="817" x2="868" y1="0" y2="0"><stop offset="0" stop-color="#001dff"/><stop offset=".039" stop-color="#001cff"/><stop offset=".392" stop-color="#2c12ff"/><stop offset="1" stop-color="#8000ff"/></linearGradient>
<linearGradient id="t98" gradientUnits="userSpaceOnUse" x1="816" x2="863" y1="0" y2="0"><stop offset="0" stop-color="#001aff"/><stop offset=".043" stop-color="#0019ff"/><stop offset=".34" stop-color="#2111ff"/><stop offset="1" stop-color="#7300ff"/></linearGradient>
<linearGradient id="t99" gradientUnits="userSpaceOnUse" x1="815" x2="858" y1="0" y2="0"><stop offset="0" stop-color="#0018ff"/><stop offset=".07" stop-color="#0216ff"/><stop offset=".279" stop-color="#1611ff"/><stop offset="1" stop-color="#6500ff"/></linearGradient>
<linearGradient id="t100" gradientUnits="userSpaceOnUse" x1="815" x2="853" y1="0" y2="0"><stop offset="0" stop-color="#0014ff"/><stop offset=".316" stop-color="#180eff"/><stop offset="1" stop-color="#5900ff"/></linearGradient>
<linearGradient id="t101" gradientUnits="userSpaceOnUse" x1="814" x2="848" y1="0" y2="0"><stop offset="0" stop-color="#0012ff"/><stop offset=".206" stop-color="#0c0eff"/><stop offset="1" stop-color="#4d00ff"/></linearGradient>
<linearGradient id="t102" gradientUnits="userSpaceOnUse" x1="813" x2="843" y1="0" y2="0"><stop offset="0" stop-color="#000fff"/><stop offset=".067" stop-color="#000eff"/><stop offset="1" stop-color="#4100ff"/></linearGradient>
<linearGradient id="t103" gradientUnits="userSpaceOnUse" x1="812" x2="838" y1="0" y2="0"><stop offset="0" stop-color="#000dff"/><stop offset=".115" stop-color="#020bff"/><stop offset="1" stop-color="#3600ff"/></linearGradient>
<linearGradient id="t104" gradientUnits="userSpaceOnUse" x1="811" x2="833" y1="0" y2="0"><stop offset="0" stop-color="#000aff"/><stop offset=".136" stop-color="#0109ff"/><stop offset="1" stop-color="#2c00ff"/></linearGradient>
<linearGradient id="t105" gradientUnits="userSpaceOnUse" x1="811" x2="828" y1="0" y2="0"><stop offset="0" stop-color="#0007ff"/><stop offset=".118" stop-color="#0106ff"/><stop offset="1" stop-color="#20f"/></linearGradient>
<linearGradient id="t106" gradientUnits="userSpaceOnUse" x1="810" x2="823" y1="0" y2="0"><stop offset="0" stop-color="#0005ff"/><stop offset=".154" stop-color="#0004ff"/><stop offset="1" stop-color="#1800ff"/></linearGradient>
<linearGradient id="t107" gradientUnits="userSpaceOnUse" x1="809" x2="818" y1="0" y2="0"><stop offset="0" stop-color="#0003ff"/><stop offset=".222" stop-color="#0001ff"/><stop offset="1" stop-color="#0f00ff"/></linearGradient>
<linearGradient id="t108" gradientUnits="userSpaceOnUse" x1="809" x2="813" y1="0" y2="0"><stop offset="0" stop-color="#00f"/><stop offset="1" stop-color="#0600ff"/></linearGradient>
<clipPath id="inclip"><rect x="1031.3" y="34.5" width="157.0" height="125.5"/></clipPath>
<linearGradient id="i0" gradientUnits="userSpaceOnUse" x1="1031" x2="1189" y1="0" y2="0"><stop offset="0" stop-color="#58ffd0"/><stop offset=".101" stop-color="#7affcf"/><stop offset=".247" stop-color="#9dffcd"/><stop offset=".722" stop-color="#f3ffc4"/><stop offset=".791" stop-color="#ffffc3"/><stop offset="1" stop-color="#ffe1a9"/></linearGradient>
<linearGradient id="i1" gradientUnits="userSpaceOnUse" x1="1031" x2="1189" y1="0" y2="0"><stop offset="0" stop-color="#5bffd2"/><stop offset=".108" stop-color="#7effd1"/><stop offset=".259" stop-color="#a1ffcf"/><stop offset=".772" stop-color="#feffc6"/><stop offset="1" stop-color="#ffdfaa"/></linearGradient>
<linearGradient id="i2" gradientUnits="userSpaceOnUse" x1="1031" x2="1189" y1="0" y2="0"><stop offset="0" stop-color="#5effd4"/><stop offset=".108" stop-color="#80ffd3"/><stop offset=".259" stop-color="#a3ffd1"/><stop offset=".759" stop-color="#feffc9"/><stop offset="1" stop-color="#ffddab"/></linearGradient>
<linearGradient id="i3" gradientUnits="userSpaceOnUse" x1="1031" x2="1189" y1="0" y2="0"><stop offset="0" stop-color="#61ffd6"/><stop offset=".108" stop-color="#82ffd5"/><stop offset=".259" stop-color="#a5ffd3"/><stop offset=".747" stop-color="#ffffcb"/><stop offset="1" stop-color="#ffdbac"/></linearGradient>
<linearGradient id="i4" gradientUnits="userSpaceOnUse" x1="1031" x2="1189" y1="0" y2="0"><stop offset="0" stop-color="#64ffd8"/><stop offset=".108" stop-color="#84ffd7"/><stop offset=".259" stop-color="#a7ffd5"/><stop offset=".734" stop-color="#ffffce"/><stop offset="1" stop-color="#ffd9ad"/></linearGradient>
<linearGradient id="i5" gradientUnits="userSpaceOnUse" x1="1031" x2="1189" y1="0" y2="0"><stop offset="0" stop-color="#66ffdb"/><stop offset=".108" stop-color="#86ffd9"/><stop offset=".253" stop-color="#a8ffd8"/><stop offset=".715" stop-color="#feffd1"/><stop offset="1" stop-color="#ffd7ad"/></linearGradient>
<linearGradient id="i6" gradientUnits="userSpaceOnUse" x1="1031" x2="1189" y1="0" y2="0"><stop offset="0" stop-color="#69ffdd"/><stop offset=".108" stop-color="#89ffdc"/><stop offset=".253" stop-color="#aaffda"/><stop offset=".703" stop-color="#feffd4"/><stop offset="1" stop-color="#ffd5ae"/></linearGradient>
<linearGradient id="i7" gradientUnits="userSpaceOnUse" x1="1031" x2="1189" y1="0" y2="0"><stop offset="0" stop-color="#6cffdf"/><stop offset=".108" stop-color="#8bffde"/><stop offset=".247" stop-color="#abffdc"/><stop offset=".69" stop-color="#ffffd7"/><stop offset="1" stop-color="#ffd3af"/></linearGradient>
<linearGradient id="i8" gradientUnits="userSpaceOnUse" x1="1031" x2="1189" y1="0" y2="0"><stop offset="0" stop-color="#6effe1"/><stop offset=".108" stop-color="#8dffe0"/><stop offset=".247" stop-color="#adffdf"/><stop offset=".677" stop-color="#ffffda"/><stop offset="1" stop-color="#ffd1b0"/></linearGradient>
<linearGradient id="i9" gradientUnits="userSpaceOnUse" x1="1031" x2="1189" y1="0" y2="0"><stop offset="0" stop-color="#71ffe3"/><stop offset=".101" stop-color="#8effe2"/><stop offset=".241" stop-color="#aeffe1"/><stop offset=".658" stop-color="#feffdd"/><stop offset="1" stop-color="#ffcfb1"/></linearGradient>
<linearGradient id="i10" gradientUnits="userSpaceOnUse" x1="1031" x2="1189" y1="0" y2="0"><stop offset="0" stop-color="#73ffe6"/><stop offset=".241" stop-color="#b0ffe4"/><stop offset=".646" stop-color="#feffe0"/><stop offset="1" stop-color="#ffcdb2"/></linearGradient>
<linearGradient id="i11" gradientUnits="userSpaceOnUse" x1="1031" x2="1189" y1="0" y2="0"><stop offset="0" stop-color="#76ffe8"/><stop offset=".234" stop-color="#b1ffe6"/><stop offset=".633" stop-color="#ffffe3"/><stop offset=".804" stop-color="#ffe4c9"/><stop offset="1" stop-color="#ffccb2"/></linearGradient>
<linearGradient id="i12" gradientUnits="userSpaceOnUse" x1="1031" x2="1189" y1="0" y2="0"><stop offset="0" stop-color="#79ffea"/><stop offset=".234" stop-color="#b3ffe9"/><stop offset=".62" stop-color="#ffffe5"/><stop offset=".791" stop-color="#ffe3cc"/><stop offset="1" stop-color="#ffcab3"/></linearGradient>
<linearGradient id="i13" gradientUnits="userSpaceOnUse" x1="1031" x2="1189" y1="0" y2="0"><stop offset="0" stop-color="#7bffec"/><stop offset=".228" stop-color="#b4ffeb"/><stop offset=".601" stop-color="#feffe9"/><stop offset=".791" stop-color="#ffe1cc"/><stop offset="1" stop-color="#ffc8b4"/></linearGradient>
<linearGradient id="i14" gradientUnits="userSpaceOnUse" x1="1031" x2="1189" y1="0" y2="0"><stop offset="0" stop-color="#7effef"/><stop offset=".222" stop-color="#b5ffee"/><stop offset=".589" stop-color="#ffffeb"/><stop offset=".778" stop-color="#ffe1ce"/><stop offset="1" stop-color="#ffc6b5"/></linearGradient>
<linearGradient id="i15" gradientUnits="userSpaceOnUse" x1="1031" x2="1189" y1="0" y2="0"><stop offset="0" stop-color="#80fff1"/><stop offset=".222" stop-color="#b8fff0"/><stop offset=".576" stop-color="#ffe"/><stop offset=".772" stop-color="#ffdfd0"/><stop offset="1" stop-color="#ffc4b5"/></linearGradient>
<linearGradient id="i16" gradientUnits="userSpaceOnUse" x1="1031" x2="1189" y1="0" y2="0"><stop offset="0" stop-color="#83fff4"/><stop offset=".215" stop-color="#b9fff3"/><stop offset=".563" stop-color="#fffff1"/><stop offset=".759" stop-color="#ffdfd2"/><stop offset="1" stop-color="#ffc2b6"/></linearGradient>
<linearGradient id="i17" gradientUnits="userSpaceOnUse" x1="1031" x2="1189" y1="0" y2="0"><stop offset="0" stop-color="#85fff6"/><stop offset=".209" stop-color="#bafff6"/><stop offset=".544" stop-color="#fefff5"/><stop offset=".759" stop-color="#ffdcd3"/><stop offset="1" stop-color="#ffc0b7"/></linearGradient>
<linearGradient id="i18" gradientUnits="userSpaceOnUse" x1="1031" x2="1189" y1="0" y2="0"><stop offset="0" stop-color="#88fff9"/><stop offset=".209" stop-color="#bcfff8"/><stop offset=".532" stop-color="#fffff8"/><stop offset=".747" stop-color="#ffdcd5"/><stop offset="1" stop-color="#ffbeb7"/></linearGradient>
<linearGradient id="i19" gradientUnits="userSpaceOnUse" x1="1031" x2="1189" y1="0" y2="0"><stop offset="0" stop-color="#8afffb"/><stop offset=".203" stop-color="#bdfffb"/><stop offset=".519" stop-color="#fffffb"/><stop offset=".734" stop-color="#ffdbd7"/><stop offset="1" stop-color="#ffbcb8"/></linearGradient>
<linearGradient id="i20" gradientUnits="userSpaceOnUse" x1="1031" x2="1189" y1="0" y2="0"><stop offset="0" stop-color="#8dfffe"/><stop offset=".203" stop-color="#bffffe"/><stop offset=".506" stop-color="#fffffd"/><stop offset=".728" stop-color="#ffdad9"/><stop offset="1" stop-color="#ffbab9"/></linearGradient>
<linearGradient id="i21" gradientUnits="userSpaceOnUse" x1="1031" x2="1189" y1="0" y2="0"><stop offset="0" stop-color="#8ffeff"/><stop offset=".196" stop-color="#bffdff"/><stop offset=".5" stop-color="#fffdff"/><stop offset=".722" stop-color="#ffd8da"/><stop offset="1" stop-color="#ffb8b9"/></linearGradient>
<linearGradient id="i22" gradientUnits="userSpaceOnUse" x1="1031" x2="1189" y1="0" y2="0"><stop offset="0" stop-color="#90fbff"/><stop offset=".196" stop-color="#c0fbff"/><stop offset=".5" stop-color="#fffaff"/><stop offset=".722" stop-color="#ffd6db"/><stop offset="1" stop-color="#ffb6ba"/></linearGradient>
<linearGradient id="i23" gradientUnits="userSpaceOnUse" x1="1031" x2="1189" y1="0" y2="0"><stop offset="0" stop-color="#91f8ff"/><stop offset=".196" stop-color="#c0f8ff"/><stop offset=".5" stop-color="#fff7ff"/><stop offset=".728" stop-color="#ffd3da"/><stop offset="1" stop-color="#ffb4bb"/></linearGradient>
<linearGradient id="i24" gradientUnits="userSpaceOnUse" x1="1031" x2="1189" y1="0" y2="0"><stop offset="0" stop-color="#92f6ff"/><stop offset=".196" stop-color="#c1f5ff"/><stop offset=".5" stop-color="#fef4ff"/><stop offset=".728" stop-color="#ffd0db"/><stop offset="1" stop-color="#ffb2bb"/></linearGradient>
<linearGradient id="i25" gradientUnits="userSpaceOnUse" x1="1031" x2="1189" y1="0" y2="0"><stop offset="0" stop-color="#93f3ff"/><stop offset=".209" stop-color="#c4f2ff"/><stop offset=".506" stop-color="#fff0ff"/><stop offset=".728" stop-color="#ffcedb"/><stop offset="1" stop-color="#ffb0bc"/></linearGradient>
<linearGradient id="i26" gradientUnits="userSpaceOnUse" x1="1031" x2="1189" y1="0" y2="0"><stop offset="0" stop-color="#94f1ff"/><stop offset=".203" stop-color="#c3f0ff"/><stop offset=".506" stop-color="#fef"/><stop offset=".728" stop-color="#ffccdc"/><stop offset="1" stop-color="#ffaebd"/></linearGradient>
<linearGradient id="i27" gradientUnits="userSpaceOnUse" x1="1031" x2="1189" y1="0" y2="0"><stop offset="0" stop-color="#95eeff"/><stop offset=".203" stop-color="#c4edff"/><stop offset=".506" stop-color="#ffebff"/><stop offset=".728" stop-color="#ffc9dc"/><stop offset="1" stop-color="#ffacbd"/></linearGradient>
<linearGradient id="i28" gradientUnits="userSpaceOnUse" x1="1031" x2="1189" y1="0" y2="0"><stop offset="0" stop-color="#96ecff"/><stop offset=".203" stop-color="#c4eaff"/><stop offset=".506" stop-color="#ffe8ff"/><stop offset=".728" stop-color="#ffc7dc"/><stop offset="1" stop-color="#ffa9be"/></linearGradient>
<linearGradient id="i29" gradientUnits="userSpaceOnUse" x1="1031" x2="1189" y1="0" y2="0"><stop offset="0" stop-color="#97e9ff"/><stop offset=".203" stop-color="#c4e8ff"/><stop offset=".506" stop-color="#ffe5ff"/><stop offset=".734" stop-color="#ffc4dc"/><stop offset="1" stop-color="#ffa7be"/></linearGradient>
<linearGradient id="i30" gradientUnits="userSpaceOnUse" x1="1031" x2="1189" y1="0" y2="0"><stop offset="0" stop-color="#98e7ff"/><stop offset=".203" stop-color="#c5e5ff"/><stop offset=".506" stop-color="#fee2ff"/><stop offset=".734" stop-color="#ffc2dd"/><stop offset="1" stop-color="#ffa5bf"/></linearGradient>
<linearGradient id="i31" gradientUnits="userSpaceOnUse" x1="1031" x2="1189" y1="0" y2="0"><stop offset="0" stop-color="#99e4ff"/><stop offset=".215" stop-color="#c8e2ff"/><stop offset=".513" stop-color="#ffdfff"/><stop offset=".734" stop-color="#ffbfdd"/><stop offset="1" stop-color="#ffa3bf"/></linearGradient>
<linearGradient id="i32" gradientUnits="userSpaceOnUse" x1="1031" x2="1189" y1="0" y2="0"><stop offset="0" stop-color="#9ae2ff"/><stop offset=".209" stop-color="#c7e0ff"/><stop offset=".513" stop-color="#ffdcff"/><stop offset=".734" stop-color="#ffbddd"/><stop offset="1" stop-color="#ffa1c0"/></linearGradient>
<linearGradient id="i33" gradientUnits="userSpaceOnUse" x1="1031" x2="1189" y1="0" y2="0"><stop offset="0" stop-color="#9bdfff"/><stop offset=".209" stop-color="#c7ddff"/><stop offset=".513" stop-color="#ffd9ff"/><stop offset=".734" stop-color="#ffbbde"/><stop offset="1" stop-color="#ff9fc1"/></linearGradient>
<linearGradient id="i34" gradientUnits="userSpaceOnUse" x1="1031" x2="1189" y1="0" y2="0"><stop offset="0" stop-color="#9cddff"/><stop offset=".209" stop-color="#c7daff"/><stop offset=".513" stop-color="#ffd6ff"/><stop offset=".734" stop-color="#ffb8de"/><stop offset="1" stop-color="#ff9dc1"/></linearGradient>
<linearGradient id="i35" gradientUnits="userSpaceOnUse" x1="1031" x2="1189" y1="0" y2="0"><stop offset="0" stop-color="#9ddaff"/><stop offset=".209" stop-color="#c8d8ff"/><stop offset=".513" stop-color="#ffd3ff"/><stop offset=".741" stop-color="#ffb5de"/><stop offset="1" stop-color="#ff9bc2"/></linearGradient>
<linearGradient id="i36" gradientUnits="userSpaceOnUse" x1="1031" x2="1189" y1="0" y2="0"><stop offset="0" stop-color="#9ed8ff"/><stop offset=".222" stop-color="#cad5ff"/><stop offset=".519" stop-color="#ffd0ff"/><stop offset=".734" stop-color="#ffb4df"/><stop offset="1" stop-color="#ff99c2"/></linearGradient>
<linearGradient id="i37" gradientUnits="userSpaceOnUse" x1="1031" x2="1189" y1="0" y2="0"><stop offset="0" stop-color="#9fd6ff"/><stop offset=".215" stop-color="#cad3ff"/><stop offset=".519" stop-color="#ffcdff"/><stop offset=".734" stop-color="#ffb1df"/><stop offset="1" stop-color="#ff97c3"/></linearGradient>
<linearGradient id="i38" gradientUnits="userSpaceOnUse" x1="1031" x2="1189" y1="0" y2="0"><stop offset="0" stop-color="#9fd3ff"/><stop offset=".519" stop-color="#ffcbff"/><stop offset=".734" stop-color="#ffafe0"/><stop offset="1" stop-color="#ff94c3"/></linearGradient>
<linearGradient id="i39" gradientUnits="userSpaceOnUse" x1="1031" x2="1189" y1="0" y2="0"><stop offset="0" stop-color="#a0d1ff"/><stop offset=".519" stop-color="#ffc8ff"/><stop offset=".741" stop-color="#ffacdf"/><stop offset="1" stop-color="#ff92c4"/></linearGradient>
<linearGradient id="i40" gradientUnits="userSpaceOnUse" x1="1031" x2="1189" y1="0" y2="0"><stop offset="0" stop-color="#a1ceff"/><stop offset=".519" stop-color="#ffc5ff"/><stop offset=".741" stop-color="#ffa9e0"/><stop offset="1" stop-color="#ff90c4"/></linearGradient>
<linearGradient id="i41" gradientUnits="userSpaceOnUse" x1="1031" x2="1189" y1="0" y2="0"><stop offset="0" stop-color="#a2ccff"/><stop offset=".519" stop-color="#ffc2ff"/><stop offset=".747" stop-color="#ffa6df"/><stop offset="1" stop-color="#ff8ec5"/></linearGradient>
<linearGradient id="gr" x1="0" x2="0" y1="0" y2="1"><stop offset="0" stop-color="#ff3c3c"/><stop offset=".1" stop-color="#ff1414"/><stop offset=".45" stop-color="#f00000"/><stop offset="1" stop-color="#980000"/></linearGradient>
<linearGradient id="gg" x1="0" x2="0" y1="0" y2="1"><stop offset="0" stop-color="#00a000"/><stop offset="1" stop-color="#005c00"/></linearGradient>
<linearGradient id="gb" x1="0" x2="0" y1="0" y2="1"><stop offset="0" stop-color="#2424ff"/><stop offset="1" stop-color="#0000a8"/></linearGradient>
<linearGradient id="th" x1="0" x2="0" y1="0" y2="1"><stop offset="0" stop-color="#303030"/><stop offset=".5" stop-color="#2a2a2a"/><stop offset=".52" stop-color="#141414"/><stop offset="1" stop-color="#0e0e0e"/></linearGradient>
<linearGradient id="tl" x1="0" x2="1" y1="0" y2="0"><stop offset="0" stop-color="#1a1a1a"/><stop offset="1" stop-color="#1a1a1a" stop-opacity=".35"/></linearGradient>
<linearGradient id="bsh" x1="0" x2="0" y1="0" y2="1"><stop offset="0" stop-color="#333"/><stop offset="1" stop-color="#2a2a2a"/></linearGradient>
<linearGradient id="bbar" x1="0" x2="0" y1="0" y2="1"><stop offset="0" stop-color="#484848"/><stop offset=".12" stop-color="#3e3e3e"/><stop offset=".5" stop-color="#2c2c2c"/><stop offset="1" stop-color="#1e1e1e"/></linearGradient>
<linearGradient id="btn" x1="0" x2="0" y1="0" y2="1"><stop offset="0" stop-color="#a0a0a0"/><stop offset=".5" stop-color="#8a8a8a"/><stop offset="1" stop-color="#707070"/></linearGradient>
<linearGradient id="btns" x1="0" x2="0" y1="0" y2="1"><stop offset="0" stop-color="#1c1c1c"/><stop offset="1" stop-color="#303030"/></linearGradient>
<linearGradient id="nv" x1="0" x2="0" y1="0" y2="1"><stop offset="0" stop-color="#a2a2a2"/><stop offset="1" stop-color="#747474"/></linearGradient>
<linearGradient id="nv2" x1="0" x2="0" y1="0" y2="1"><stop offset="0" stop-color="#b4b4b4"/><stop offset="1" stop-color="#8a8a8a"/></linearGradient>
</defs>
<rect x="0" y="0" width="1200" height="594" fill="#333333"/>
<rect x="0" y="0" width="1.8" height="7" fill="#2b2b2b"/><rect x="0" y="7" width="1.8" height="549" fill="#1e1e1e"/>
<text x="19" y="39.4" font-size="28" fill="#f2f2f2" textLength="138.5" lengthAdjust="spacingAndGlyphs">Colorspace</text>
<g id="deltaE">
<text x="136" y="73.5" font-size="10.5" fill="#e6e6e6" text-anchor="middle">DeltaE 2000</text>
<rect x="16" y="77" width="240" height="281" fill="#242424"/>
<path d="M47.5 77V358M79.5 77V358M111.5 77V358M143.5 77V358M175.5 77V358M207.5 77V358M239.5 77V358" stroke="#7c7c7c" stroke-width="1" fill="none"/>
<path d="M15.5 77V362M16 76.5H256.5V358.5M15 358.5H257" stroke="#8e8e8e" stroke-width="1" fill="none"/>
<path d="M47.5 358v4M79.5 358v4M111.5 358v4M143.5 358v4M175.5 358v4M207.5 358v4M239.5 358v4" stroke="#8e8e8e" stroke-width="1" fill="none"/>
<text x="16" y="373.6" font-size="10.2" fill="#e6e6e6" text-anchor="middle">0</text>
<text x="48" y="373.6" font-size="10.2" fill="#e6e6e6" text-anchor="middle">2</text>
<text x="80" y="373.6" font-size="10.2" fill="#e6e6e6" text-anchor="middle">4</text>
<text x="112" y="373.6" font-size="10.2" fill="#e6e6e6" text-anchor="middle">6</text>
<text x="144" y="373.6" font-size="10.2" fill="#e6e6e6" text-anchor="middle">8</text>
<text x="176" y="373.6" font-size="10.2" fill="#e6e6e6" text-anchor="middle">10</text>
<text x="208" y="373.6" font-size="10.2" fill="#e6e6e6" text-anchor="middle">12</text>
<text x="240" y="373.6" font-size="10.2" fill="#e6e6e6" text-anchor="middle">14</text>
<rect x="15.5" y="81.0" width="57.8" height="26.4" fill="url(#bew100)"/>
<path d="M15.5 81.0H73.3V107.4H15.5" fill="none" stroke="#060606" stroke-width="1.1"/>
<rect x="15.5" y="116.1" width="14.2" height="26.4" fill="url(#beyel)"/>
<path d="M15.5 116.1H29.7V142.5H15.5" fill="none" stroke="#060606" stroke-width="1.1"/>
<rect x="15.5" y="151.2" width="9.2" height="26.4" fill="url(#bemag)"/>
<path d="M15.5 151.2H24.7V177.6H15.5" fill="none" stroke="#060606" stroke-width="1.1"/>
<rect x="15.5" y="186.3" width="30.7" height="26.4" fill="url(#becya)"/>
<path d="M15.5 186.3H46.2V212.7H15.5" fill="none" stroke="#060606" stroke-width="1.1"/>
<rect x="15.5" y="221.5" width="3.1" height="26.4" fill="url(#beblu)"/>
<path d="M15.5 221.5H18.6V247.9H15.5" fill="none" stroke="#060606" stroke-width="1.1"/>
<rect x="15.5" y="256.6" width="44.9" height="26.4" fill="url(#begrn)"/>
<path d="M15.5 256.6H60.4V283.0H15.5" fill="none" stroke="#060606" stroke-width="1.1"/>
<rect x="15.5" y="291.7" width="23.7" height="26.4" fill="url(#bered)"/>
<path d="M15.5 291.7H39.2V318.1H15.5" fill="none" stroke="#060606" stroke-width="1.1"/>
<rect x="15.5" y="326.8" width="38.0" height="26.4" fill="url(#bewht)"/>
<path d="M15.5 326.8H53.5V353.2H15.5" fill="none" stroke="#060606" stroke-width="1.1"/>
</g>
<g id="DeltaL">
<text x="337.0" y="27" font-size="10.5" fill="#e6e6e6" text-anchor="middle">DeltaL</text>
<rect x="294.5" y="31.5" width="104.0" height="215.0" fill="#242424"/>
<text x="289.7" y="34.9" font-size="9.9" fill="#e6e6e6" text-anchor="end">15</text>
<text x="289.7" y="70.9" font-size="9.9" fill="#e6e6e6" text-anchor="end">10</text>
<text x="289.7" y="106.9" font-size="9.9" fill="#e6e6e6" text-anchor="end">5</text>
<text x="289.7" y="143.0" font-size="9.9" fill="#e6e6e6" text-anchor="end">0</text>
<text x="289.7" y="179.0" font-size="9.9" fill="#e6e6e6" text-anchor="end">-5</text>
<text x="289.7" y="215.0" font-size="9.9" fill="#e6e6e6" text-anchor="end">-10</text>
<text x="289.7" y="251.0" font-size="9.9" fill="#e6e6e6" text-anchor="end">-15</text>
<path d="M294.5 67.5H398.5M294.5 102.5H398.5M294.5 139.5H398.5M294.5 175.5H398.5M294.5 211.5H398.5" stroke="#7c7c7c" stroke-width="1" fill="none"/>
<path d="M294.5 31.0V250.0M398.5 31.0V250.0M290.0 31.5H398.5M294.0 30.5H399.0M290.0 246.5H398.5M290.0 67.5h4.5M290.0 102.5h4.5M290.0 139.5h4.5M290.0 175.5h4.5M290.0 211.5h4.5" stroke="#8e8e8e" stroke-width="1" fill="none"/>
<rect x="305.0" y="138.2" width="82.5" height="1.8" fill="#141414"/>
<text x="346.5" y="257.6" font-size="10.5" fill="#e6e6e6" text-anchor="middle">White</text>
</g>
<g id="DeltaC">
<text x="479.0" y="27" font-size="10.5" fill="#e6e6e6" text-anchor="middle">DeltaC</text>
<rect x="436.5" y="31.5" width="104.0" height="215.0" fill="#242424"/>
<text x="431.7" y="34.9" font-size="9.9" fill="#e6e6e6" text-anchor="end">15</text>
<text x="431.7" y="70.9" font-size="9.9" fill="#e6e6e6" text-anchor="end">10</text>
<text x="431.7" y="106.9" font-size="9.9" fill="#e6e6e6" text-anchor="end">5</text>
<text x="431.7" y="143.0" font-size="9.9" fill="#e6e6e6" text-anchor="end">0</text>
<text x="431.7" y="179.0" font-size="9.9" fill="#e6e6e6" text-anchor="end">-5</text>
<text x="431.7" y="215.0" font-size="9.9" fill="#e6e6e6" text-anchor="end">-10</text>
<text x="431.7" y="251.0" font-size="9.9" fill="#e6e6e6" text-anchor="end">-15</text>
<path d="M436.5 67.5H540.5M436.5 102.5H540.5M436.5 139.5H540.5M436.5 175.5H540.5M436.5 211.5H540.5" stroke="#7c7c7c" stroke-width="1" fill="none"/>
<path d="M436.5 31.0V250.0M540.5 31.0V250.0M432.0 31.5H540.5M436.0 30.5H541.0M432.0 246.5H540.5M432.0 67.5h4.5M432.0 102.5h4.5M432.0 139.5h4.5M432.0 175.5h4.5M432.0 211.5h4.5" stroke="#8e8e8e" stroke-width="1" fill="none"/>
<rect x="447.0" y="127.1" width="82.5" height="12.4" fill="url(#bdc)" stroke="#0c0c0c" stroke-width="1.1"/>
<text x="488.5" y="257.6" font-size="10.5" fill="#e6e6e6" text-anchor="middle">White</text>
</g>
<g id="DeltaH">
<text x="621.0" y="27" font-size="10.5" fill="#e6e6e6" text-anchor="middle">DeltaH</text>
<rect x="578.5" y="31.5" width="104.0" height="215.0" fill="#242424"/>
<text x="573.7" y="34.9" font-size="9.9" fill="#e6e6e6" text-anchor="end">15</text>
<text x="573.7" y="70.9" font-size="9.9" fill="#e6e6e6" text-anchor="end">10</text>
<text x="573.7" y="106.9" font-size="9.9" fill="#e6e6e6" text-anchor="end">5</text>
<text x="573.7" y="143.0" font-size="9.9" fill="#e6e6e6" text-anchor="end">0</text>
<text x="573.7" y="179.0" font-size="9.9" fill="#e6e6e6" text-anchor="end">-5</text>
<text x="573.7" y="215.0" font-size="9.9" fill="#e6e6e6" text-anchor="end">-10</text>
<text x="573.7" y="251.0" font-size="9.9" fill="#e6e6e6" text-anchor="end">-15</text>
<path d="M578.5 67.5H682.5M578.5 102.5H682.5M578.5 139.5H682.5M578.5 175.5H682.5M578.5 211.5H682.5" stroke="#7c7c7c" stroke-width="1" fill="none"/>
<path d="M578.5 31.0V250.0M682.5 31.0V250.0M574.0 31.5H682.5M578.0 30.5H683.0M574.0 246.5H682.5M574.0 67.5h4.5M574.0 102.5h4.5M574.0 139.5h4.5M574.0 175.5h4.5M574.0 211.5h4.5" stroke="#8e8e8e" stroke-width="1" fill="none"/>
<rect x="589.0" y="138.2" width="82.5" height="1.8" fill="#141414"/>
<text x="630.5" y="257.6" font-size="10.5" fill="#e6e6e6" text-anchor="middle">White</text>
</g>
<g id="swatches">
<rect x="270.7" y="268.6" width="425.5" height="111" fill="#000"/>
<rect x="283.8" y="273.3" width="44.5" height="90.5" fill="#c8c6c6"/>
<rect x="283.8" y="318.3" width="44.5" height="45.5" fill="#c8c8c8"/>
<rect x="284.3" y="273.8" width="43.5" height="89.5" fill="none" stroke="#fff" stroke-opacity=".72" stroke-width="1"/>
<text x="306.0" y="373.8" font-size="9" fill="#fff" stroke="#fff" stroke-width=".25" text-anchor="middle">White</text>
<rect x="335.7" y="273.3" width="44.5" height="90.5" fill="#c20008"/>
<rect x="335.7" y="318.3" width="44.5" height="45.5" fill="#c21616"/>
<rect x="336.2" y="273.8" width="43.5" height="89.5" fill="none" stroke="#fff" stroke-opacity=".72" stroke-width="1"/>
<text x="357.9" y="373.8" font-size="9" fill="#fff" stroke="#fff" stroke-width=".25" text-anchor="middle">Red</text>
<rect x="387.6" y="273.3" width="44.5" height="90.5" fill="#12b40a"/>
<rect x="387.6" y="318.3" width="44.5" height="45.5" fill="#14c014"/>
<rect x="388.1" y="273.8" width="43.5" height="89.5" fill="none" stroke="#fff" stroke-opacity=".72" stroke-width="1"/>
<text x="409.8" y="373.8" font-size="9" fill="#fff" stroke="#fff" stroke-width=".25" text-anchor="middle">Green</text>
<rect x="439.5" y="273.3" width="44.5" height="90.5" fill="#0c04c0"/>
<rect x="439.5" y="318.3" width="44.5" height="45.5" fill="#0a0ac2"/>
<rect x="440.0" y="273.8" width="43.5" height="89.5" fill="none" stroke="#fff" stroke-opacity=".72" stroke-width="1"/>
<text x="461.7" y="373.8" font-size="9" fill="#fff" stroke="#fff" stroke-width=".25" text-anchor="middle">Blue</text>
<rect x="491.4" y="273.3" width="44.5" height="90.5" fill="#20bcbc"/>
<rect x="491.4" y="318.3" width="44.5" height="45.5" fill="#00c4c8"/>
<rect x="491.9" y="273.8" width="43.5" height="89.5" fill="none" stroke="#fff" stroke-opacity=".72" stroke-width="1"/>
<text x="513.6" y="373.8" font-size="9" fill="#fff" stroke="#fff" stroke-width=".25" text-anchor="middle">Cyan</text>
<rect x="543.3" y="273.3" width="44.5" height="90.5" fill="#c606c8"/>
<rect x="543.3" y="318.3" width="44.5" height="45.5" fill="#c212c2"/>
<rect x="543.8" y="273.8" width="43.5" height="89.5" fill="none" stroke="#fff" stroke-opacity=".72" stroke-width="1"/>
<text x="565.5" y="373.8" font-size="9" fill="#fff" stroke="#fff" stroke-width=".25" text-anchor="middle">Magenta</text>
<rect x="595.2" y="273.3" width="44.5" height="90.5" fill="#c8c400"/>
<rect x="595.2" y="318.3" width="44.5" height="45.5" fill="#c6c404"/>
<rect x="595.7" y="273.8" width="43.5" height="89.5" fill="none" stroke="#fff" stroke-opacity=".72" stroke-width="1"/>
<text x="617.4" y="373.8" font-size="9" fill="#fff" stroke="#fff" stroke-width=".25" text-anchor="middle">Yellow</text>
<rect x="647.1" y="273.3" width="44.5" height="90.5" fill="#fdf9fc"/>
<rect x="647.1" y="318.3" width="44.5" height="45.5" fill="#ffffff"/>
<rect x="647.6" y="273.8" width="43.5" height="89.5" fill="none" stroke="#fff" stroke-opacity=".72" stroke-width="1"/>
<text x="669.3" y="373.8" font-size="9" fill="#fff" stroke="#fff" stroke-width=".25" text-anchor="middle">100W</text>
<text transform="translate(279.8,293) rotate(-90)" font-size="8.2" fill="#fff" text-anchor="middle">Actual</text>
<text transform="translate(279.8,343.5) rotate(-90)" font-size="8.2" fill="#fff" text-anchor="middle">Target</text>
</g>
<g id="cie">
<rect x="701.8" y="9.2" width="500" height="379.4" fill="#000"/>
<rect x="706.3" y="14" width="489.2" height="370" fill="#333333"/>
<text x="950.8" y="26" font-size="10" fill="#e6e6e6" text-anchor="middle">CIE 1931 xy</text>
<rect x="727.5" y="29.5" width="465.5" height="335" fill="#242424"/>
<g clip-path="url(#hsclip)">
<rect x="760" y="32" width="25" height="2.6" fill="url(#h0)"/>
<rect x="755" y="34" width="38" height="2.6" fill="url(#h1)"/>
<rect x="752" y="36" width="48" height="2.6" fill="url(#h2)"/>
<rect x="749" y="38" width="56" height="2.6" fill="url(#h3)"/>
<rect x="747" y="40" width="63" height="2.6" fill="url(#h4)"/>
<rect x="745" y="42" width="70" height="2.6" fill="url(#h5)"/>
<rect x="743" y="44" width="77" height="2.6" fill="url(#h6)"/>
<rect x="742" y="46" width="82" height="2.6" fill="url(#h7)"/>
<rect x="741" y="48" width="88" height="2.6" fill="url(#h8)"/>
<rect x="740" y="50" width="93" height="2.6" fill="url(#h9)"/>
<rect x="738" y="52" width="99" height="2.6" fill="url(#h10)"/>
<rect x="738" y="54" width="103" height="2.6" fill="url(#h11)"/>
<rect x="737" y="56" width="108" height="2.6" fill="url(#h12)"/>
<rect x="736" y="58" width="112" height="2.6" fill="url(#h13)"/>
<rect x="735" y="60" width="117" height="2.6" fill="url(#h14)"/>
<rect x="734" y="62" width="122" height="2.6" fill="url(#h15)"/>
<rect x="734" y="64" width="125" height="2.6" fill="url(#h16)"/>
<rect x="733" y="66" width="130" height="2.6" fill="url(#h17)"/>
<rect x="733" y="68" width="133" height="2.6" fill="url(#h18)"/>
<rect x="732" y="70" width="137" height="2.6" fill="url(#h19)"/>
<rect x="732" y="72" width="141" height="2.6" fill="url(#h20)"/>
<rect x="731" y="74" width="145" height="2.6" fill="url(#h21)"/>
<rect x="731" y="76" width="148" height="2.6" fill="url(#h22)"/>
<rect x="730" y="78" width="152" height="2.6" fill="url(#h23)"/>
<rect x="730" y="80" width="155" height="2.6" fill="url(#h24)"/>
<rect x="730" y="82" width="158" height="2.6" fill="url(#h25)"/>
<rect x="730" y="84" width="161" height="2.6" fill="url(#h26)"/>
<rect x="729" y="86" width="165" height="2.6" fill="url(#h27)"/>
<rect x="729" y="88" width="169" height="2.6" fill="url(#h28)"/>
<rect x="729" y="90" width="172" height="2.6" fill="url(#h29)"/>
<rect x="729" y="92" width="175" height="2.6" fill="url(#h30)"/>
<rect x="729" y="94" width="177" height="2.6" fill="url(#h31)"/>
<rect x="728" y="96" width="181" height="2.6" fill="url(#h32)"/>
<rect x="728" y="98" width="184" height="2.6" fill="url(#h33)"/>
<rect x="728" y="100" width="187" height="2.6" fill="url(#h34)"/>
<rect x="728" y="102" width="190" height="2.6" fill="url(#h35)"/>
<rect x="728" y="104" width="193" height="2.6" fill="url(#h36)"/>
<rect x="728" y="106" width="196" height="2.6" fill="url(#h37)"/>
<rect x="728" y="108" width="199" height="2.6" fill="url(#h38)"/>
<rect x="728" y="110" width="202" height="2.6" fill="url(#h39)"/>
<rect x="728" y="112" width="205" height="2.6" fill="url(#h40)"/>
<rect x="728" y="114" width="208" height="2.6" fill="url(#h41)"/>
<rect x="728" y="116" width="210" height="2.6" fill="url(#h42)"/>
<rect x="728" y="118" width="213" height="2.6" fill="url(#h43)"/>
<rect x="728" y="120" width="216" height="2.6" fill="url(#h44)"/>
<rect x="728" y="122" width="219" height="2.6" fill="url(#h45)"/>
<rect x="728" y="124" width="222" height="2.6" fill="url(#h46)"/>
<rect x="728" y="126" width="225" height="2.6" fill="url(#h47)"/>
<rect x="729" y="128" width="226" height="2.6" fill="url(#h48)"/>
<rect x="729" y="130" width="229" height="2.6" fill="url(#h49)"/>
<rect x="729" y="132" width="232" height="2.6" fill="url(#h50)"/>
<rect x="729" y="134" width="235" height="2.6" fill="url(#h51)"/>
<rect x="729" y="136" width="238" height="2.6" fill="url(#h52)"/>
<rect x="729" y="138" width="241" height="2.6" fill="url(#h53)"/>
<rect x="729" y="140" width="243" height="2.6" fill="url(#h54)"/>
<rect x="730" y="142" width="245" height="2.6" fill="url(#h55)"/>
<rect x="730" y="144" width="248" height="2.6" fill="url(#h56)"/>
<rect x="730" y="146" width="251" height="2.6" fill="url(#h57)"/>
<rect x="730" y="148" width="254" height="2.6" fill="url(#h58)"/>
<rect x="730" y="150" width="256" height="2.6" fill="url(#h59)"/>
<rect x="731" y="152" width="258" height="2.6" fill="url(#h60)"/>
<rect x="731" y="154" width="261" height="2.6" fill="url(#h61)"/>
<rect x="731" y="156" width="264" height="2.6" fill="url(#h62)"/>
<rect x="731" y="158" width="267" height="2.6" fill="url(#h63)"/>
<rect x="732" y="160" width="268" height="2.6" fill="url(#h64)"/>
<rect x="732" y="162" width="271" height="2.6" fill="url(#h65)"/>
<rect x="732" y="164" width="274" height="2.6" fill="url(#h66)"/>
<rect x="733" y="166" width="276" height="2.6" fill="url(#h67)"/>
<rect x="733" y="168" width="278" height="2.6" fill="url(#h68)"/>
<rect x="733" y="170" width="281" height="2.6" fill="url(#h69)"/>
<rect x="734" y="172" width="283" height="2.6" fill="url(#h70)"/>
<rect x="734" y="174" width="286" height="2.6" fill="url(#h71)"/>
<rect x="734" y="176" width="289" height="2.6" fill="url(#h72)"/>
<rect x="735" y="178" width="290" height="2.6" fill="url(#h73)"/>
<rect x="735" y="180" width="293" height="2.6" fill="url(#h74)"/>
<rect x="735" y="182" width="296" height="2.6" fill="url(#h75)"/>
<rect x="736" y="184" width="298" height="2.6" fill="url(#h76)"/>
<rect x="736" y="186" width="301" height="2.6" fill="url(#h77)"/>
<rect x="736" y="188" width="303" height="2.6" fill="url(#h78)"/>
<rect x="737" y="190" width="305" height="2.6" fill="url(#h79)"/>
<rect x="737" y="192" width="308" height="2.6" fill="url(#h80)"/>
<rect x="738" y="194" width="310" height="2.6" fill="url(#h81)"/>
<rect x="738" y="196" width="313" height="2.6" fill="url(#h82)"/>
<rect x="738" y="198" width="315" height="2.6" fill="url(#h83)"/>
<rect x="739" y="200" width="317" height="2.6" fill="url(#h84)"/>
<rect x="739" y="202" width="320" height="2.6" fill="url(#h85)"/>
<rect x="740" y="204" width="322" height="2.6" fill="url(#h86)"/>
<rect x="740" y="206" width="324" height="2.6" fill="url(#h87)"/>
<rect x="741" y="208" width="326" height="2.6" fill="url(#h88)"/>
<rect x="741" y="210" width="329" height="2.6" fill="url(#h89)"/>
<rect x="742" y="212" width="331" height="2.6" fill="url(#h90)"/>
<rect x="742" y="214" width="334" height="2.6" fill="url(#h91)"/>
<rect x="743" y="216" width="335" height="2.6" fill="url(#h92)"/>
<rect x="743" y="218" width="338" height="2.6" fill="url(#h93)"/>
<rect x="744" y="220" width="340" height="2.6" fill="url(#h94)"/>
<rect x="744" y="222" width="343" height="2.6" fill="url(#h95)"/>
<rect x="745" y="224" width="345" height="2.6" fill="url(#h96)"/>
<rect x="745" y="226" width="347" height="2.6" fill="url(#h97)"/>
<rect x="746" y="228" width="349" height="2.6" fill="url(#h98)"/>
<rect x="746" y="230" width="352" height="2.6" fill="url(#h99)"/>
<rect x="747" y="232" width="354" height="2.6" fill="url(#h100)"/>
<rect x="747" y="234" width="357" height="2.6" fill="url(#h101)"/>
<rect x="748" y="236" width="358" height="2.6" fill="url(#h102)"/>
<rect x="748" y="238" width="361" height="2.6" fill="url(#h103)"/>
<rect x="749" y="240" width="363" height="2.6" fill="url(#h104)"/>
<rect x="750" y="242" width="365" height="2.6" fill="url(#h105)"/>
<rect x="750" y="244" width="368" height="2.6" fill="url(#h106)"/>
<rect x="751" y="246" width="369" height="2.6" fill="url(#h107)"/>
<rect x="751" y="248" width="372" height="2.6" fill="url(#h108)"/>
<rect x="752" y="250" width="374" height="2.6" fill="url(#h109)"/>
<rect x="753" y="252" width="376" height="2.6" fill="url(#h110)"/>
<rect x="753" y="254" width="378" height="2.6" fill="url(#h111)"/>
<rect x="754" y="256" width="380" height="2.6" fill="url(#h112)"/>
<rect x="754" y="258" width="382" height="2.6" fill="url(#h113)"/>
<rect x="755" y="260" width="379" height="2.6" fill="url(#h114)"/>
<rect x="756" y="262" width="372" height="2.6" fill="url(#h115)"/>
<rect x="756" y="264" width="366" height="2.6" fill="url(#h116)"/>
<rect x="757" y="266" width="359" height="2.6" fill="url(#h117)"/>
<rect x="758" y="268" width="352" height="2.6" fill="url(#h118)"/>
<rect x="758" y="270" width="346" height="2.6" fill="url(#h119)"/>
<rect x="759" y="272" width="339" height="2.6" fill="url(#h120)"/>
<rect x="760" y="274" width="332" height="2.6" fill="url(#h121)"/>
<rect x="761" y="276" width="325" height="2.6" fill="url(#h122)"/>
<rect x="761" y="278" width="319" height="2.6" fill="url(#h123)"/>
<rect x="762" y="280" width="312" height="2.6" fill="url(#h124)"/>
<rect x="763" y="282" width="305" height="2.6" fill="url(#h125)"/>
<rect x="764" y="284" width="298" height="2.6" fill="url(#h126)"/>
<rect x="764" y="286" width="292" height="2.6" fill="url(#h127)"/>
<rect x="765" y="288" width="285" height="2.6" fill="url(#h128)"/>
<rect x="766" y="290" width="278" height="2.6" fill="url(#h129)"/>
<rect x="767" y="292" width="271" height="2.6" fill="url(#h130)"/>
<rect x="768" y="294" width="264" height="2.6" fill="url(#h131)"/>
<rect x="769" y="296" width="257" height="2.6" fill="url(#h132)"/>
<rect x="770" y="298" width="250" height="2.6" fill="url(#h133)"/>
<rect x="771" y="300" width="243" height="2.6" fill="url(#h134)"/>
<rect x="772" y="302" width="236" height="2.6" fill="url(#h135)"/>
<rect x="773" y="304" width="229" height="2.6" fill="url(#h136)"/>
<rect x="773" y="306" width="223" height="2.6" fill="url(#h137)"/>
<rect x="774" y="308" width="216" height="2.6" fill="url(#h138)"/>
<rect x="775" y="310" width="209" height="2.6" fill="url(#h139)"/>
<rect x="776" y="312" width="202" height="2.6" fill="url(#h140)"/>
<rect x="778" y="314" width="194" height="2.6" fill="url(#h141)"/>
<rect x="779" y="316" width="187" height="2.6" fill="url(#h142)"/>
<rect x="780" y="318" width="180" height="2.6" fill="url(#h143)"/>
<rect x="781" y="320" width="174" height="2.6" fill="url(#h144)"/>
<rect x="782" y="322" width="167" height="2.6" fill="url(#h145)"/>
<rect x="783" y="324" width="160" height="2.6" fill="url(#h146)"/>
<rect x="784" y="326" width="153" height="2.6" fill="url(#h147)"/>
<rect x="785" y="328" width="146" height="2.6" fill="url(#h148)"/>
<rect x="786" y="330" width="139" height="2.6" fill="url(#h149)"/>
<rect x="788" y="332" width="131" height="2.6" fill="url(#h150)"/>
<rect x="789" y="334" width="124" height="2.6" fill="url(#h151)"/>
<rect x="790" y="336" width="117" height="2.6" fill="url(#h152)"/>
<rect x="792" y="338" width="109" height="2.6" fill="url(#h153)"/>
<rect x="793" y="340" width="102" height="2.6" fill="url(#h154)"/>
<rect x="795" y="342" width="94" height="2.6" fill="url(#h155)"/>
<rect x="796" y="344" width="87" height="2.6" fill="url(#h156)"/>
<rect x="798" y="346" width="79" height="2.6" fill="url(#h157)"/>
<rect x="800" y="348" width="71" height="2.6" fill="url(#h158)"/>
<rect x="802" y="350" width="63" height="2.6" fill="url(#h159)"/>
<rect x="804" y="352" width="55" height="2.6" fill="url(#h160)"/>
<rect x="807" y="354" width="46" height="2.6" fill="url(#h161)"/>
<rect x="810" y="356" width="37" height="2.6" fill="url(#h162)"/>
<rect x="813" y="358" width="28" height="2.6" fill="url(#h163)"/>
<rect x="816" y="360" width="19" height="2.6" fill="url(#h164)"/>
<rect x="819" y="362" width="10" height="2.6" fill="url(#h165)"/>
</g>
<g clip-path="url(#triclip)">
<rect x="892" y="125" width="5" height="2.6" fill="url(#t0)"/>
<rect x="891" y="127" width="10" height="2.6" fill="url(#t1)"/>
<rect x="890" y="129" width="14" height="2.6" fill="url(#t2)"/>
<rect x="889" y="131" width="19" height="2.6" fill="url(#t3)"/>
<rect x="889" y="133" width="22" height="2.6" fill="url(#t4)"/>
<rect x="888" y="135" width="27" height="2.6" fill="url(#t5)"/>
<rect x="887" y="137" width="31" height="2.6" fill="url(#t6)"/>
<rect x="886" y="139" width="36" height="2.6" fill="url(#t7)"/>
<rect x="886" y="141" width="39" height="2.6" fill="url(#t8)"/>
<rect x="885" y="143" width="44" height="2.6" fill="url(#t9)"/>
<rect x="884" y="145" width="48" height="2.6" fill="url(#t10)"/>
<rect x="883" y="147" width="53" height="2.6" fill="url(#t11)"/>
<rect x="883" y="149" width="56" height="2.6" fill="url(#t12)"/>
<rect x="882" y="151" width="61" height="2.6" fill="url(#t13)"/>
<rect x="881" y="153" width="65" height="2.6" fill="url(#t14)"/>
<rect x="880" y="155" width="70" height="2.6" fill="url(#t15)"/>
<rect x="879" y="157" width="74" height="2.6" fill="url(#t16)"/>
<rect x="879" y="159" width="78" height="2.6" fill="url(#t17)"/>
<rect x="878" y="161" width="82" height="2.6" fill="url(#t18)"/>
<rect x="877" y="163" width="87" height="2.6" fill="url(#t19)"/>
<rect x="876" y="165" width="91" height="2.6" fill="url(#t20)"/>
<rect x="876" y="167" width="95" height="2.6" fill="url(#t21)"/>
<rect x="875" y="169" width="99" height="2.6" fill="url(#t22)"/>
<rect x="874" y="171" width="104" height="2.6" fill="url(#t23)"/>
<rect x="873" y="173" width="108" height="2.6" fill="url(#t24)"/>
<rect x="872" y="175" width="113" height="2.6" fill="url(#t25)"/>
<rect x="872" y="177" width="116" height="2.6" fill="url(#t26)"/>
<rect x="871" y="179" width="121" height="2.6" fill="url(#t27)"/>
<rect x="870" y="181" width="125" height="2.6" fill="url(#t28)"/>
<rect x="869" y="183" width="130" height="2.6" fill="url(#t29)"/>
<rect x="869" y="185" width="133" height="2.6" fill="url(#t30)"/>
<rect x="868" y="187" width="138" height="2.6" fill="url(#t31)"/>
<rect x="867" y="189" width="142" height="2.6" fill="url(#t32)"/>
<rect x="866" y="191" width="147" height="2.6" fill="url(#t33)"/>
<rect x="866" y="193" width="150" height="2.6" fill="url(#t34)"/>
<rect x="865" y="195" width="155" height="2.6" fill="url(#t35)"/>
<rect x="864" y="197" width="159" height="2.6" fill="url(#t36)"/>
<rect x="863" y="199" width="164" height="2.6" fill="url(#t37)"/>
<rect x="862" y="201" width="168" height="2.6" fill="url(#t38)"/>
<rect x="862" y="203" width="172" height="2.6" fill="url(#t39)"/>
<rect x="861" y="205" width="176" height="2.6" fill="url(#t40)"/>
<rect x="860" y="207" width="181" height="2.6" fill="url(#t41)"/>
<rect x="859" y="209" width="185" height="2.6" fill="url(#t42)"/>
<rect x="859" y="211" width="189" height="2.6" fill="url(#t43)"/>
<rect x="858" y="213" width="193" height="2.6" fill="url(#t44)"/>
<rect x="857" y="215" width="198" height="2.6" fill="url(#t45)"/>
<rect x="856" y="217" width="202" height="2.6" fill="url(#t46)"/>
<rect x="856" y="219" width="206" height="2.6" fill="url(#t47)"/>
<rect x="855" y="221" width="210" height="2.6" fill="url(#t48)"/>
<rect x="854" y="223" width="215" height="2.6" fill="url(#t49)"/>
<rect x="853" y="225" width="219" height="2.6" fill="url(#t50)"/>
<rect x="852" y="227" width="224" height="2.6" fill="url(#t51)"/>
<rect x="852" y="229" width="227" height="2.6" fill="url(#t52)"/>
<rect x="851" y="231" width="232" height="2.6" fill="url(#t53)"/>
<rect x="850" y="233" width="234" height="2.6" fill="url(#t54)"/>
<rect x="849" y="235" width="231" height="2.6" fill="url(#t55)"/>
<rect x="849" y="237" width="226" height="2.6" fill="url(#t56)"/>
<rect x="848" y="239" width="222" height="2.6" fill="url(#t57)"/>
<rect x="847" y="241" width="218" height="2.6" fill="url(#t58)"/>
<rect x="846" y="243" width="214" height="2.6" fill="url(#t59)"/>
<rect x="845" y="245" width="210" height="2.6" fill="url(#t60)"/>
<rect x="845" y="247" width="205" height="2.6" fill="url(#t61)"/>
<rect x="844" y="249" width="201" height="2.6" fill="url(#t62)"/>
<rect x="843" y="251" width="197" height="2.6" fill="url(#t63)"/>
<rect x="842" y="253" width="193" height="2.6" fill="url(#t64)"/>
<rect x="842" y="255" width="187" height="2.6" fill="url(#t65)"/>
<rect x="841" y="257" width="183" height="2.6" fill="url(#t66)"/>
<rect x="840" y="259" width="179" height="2.6" fill="url(#t67)"/>
<rect x="839" y="261" width="175" height="2.6" fill="url(#t68)"/>
<rect x="839" y="263" width="170" height="2.6" fill="url(#t69)"/>
<rect x="838" y="265" width="166" height="2.6" fill="url(#t70)"/>
<rect x="837" y="267" width="162" height="2.6" fill="url(#t71)"/>
<rect x="836" y="269" width="158" height="2.6" fill="url(#t72)"/>
<rect x="835" y="271" width="154" height="2.6" fill="url(#t73)"/>
<rect x="835" y="273" width="149" height="2.6" fill="url(#t74)"/>
<rect x="834" y="275" width="145" height="2.6" fill="url(#t75)"/>
<rect x="833" y="277" width="141" height="2.6" fill="url(#t76)"/>
<rect x="832" y="279" width="137" height="2.6" fill="url(#t77)"/>
<rect x="832" y="281" width="132" height="2.6" fill="url(#t78)"/>
<rect x="831" y="283" width="128" height="2.6" fill="url(#t79)"/>
<rect x="830" y="285" width="124" height="2.6" fill="url(#t80)"/>
<rect x="829" y="287" width="120" height="2.6" fill="url(#t81)"/>
<rect x="828" y="289" width="116" height="2.6" fill="url(#t82)"/>
<rect x="828" y="291" width="111" height="2.6" fill="url(#t83)"/>
<rect x="827" y="293" width="107" height="2.6" fill="url(#t84)"/>
<rect x="826" y="295" width="103" height="2.6" fill="url(#t85)"/>
<rect x="825" y="297" width="99" height="2.6" fill="url(#t86)"/>
<rect x="825" y="299" width="93" height="2.6" fill="url(#t87)"/>
<rect x="824" y="301" width="89" height="2.6" fill="url(#t88)"/>
<rect x="823" y="303" width="85" height="2.6" fill="url(#t89)"/>
<rect x="822" y="305" width="81" height="2.6" fill="url(#t90)"/>
<rect x="822" y="307" width="76" height="2.6" fill="url(#t91)"/>
<rect x="821" y="309" width="72" height="2.6" fill="url(#t92)"/>
<rect x="820" y="311" width="68" height="2.6" fill="url(#t93)"/>
<rect x="819" y="313" width="64" height="2.6" fill="url(#t94)"/>
<rect x="818" y="315" width="60" height="2.6" fill="url(#t95)"/>
<rect x="818" y="317" width="55" height="2.6" fill="url(#t96)"/>
<rect x="817" y="319" width="51" height="2.6" fill="url(#t97)"/>
<rect x="816" y="321" width="47" height="2.6" fill="url(#t98)"/>
<rect x="815" y="323" width="43" height="2.6" fill="url(#t99)"/>
<rect x="815" y="325" width="38" height="2.6" fill="url(#t100)"/>
<rect x="814" y="327" width="34" height="2.6" fill="url(#t101)"/>
<rect x="813" y="329" width="30" height="2.6" fill="url(#t102)"/>
<rect x="812" y="331" width="26" height="2.6" fill="url(#t103)"/>
<rect x="811" y="333" width="22" height="2.6" fill="url(#t104)"/>
<rect x="811" y="335" width="17" height="2.6" fill="url(#t105)"/>
<rect x="810" y="337" width="13" height="2.6" fill="url(#t106)"/>
<rect x="809" y="339" width="9" height="2.6" fill="url(#t107)"/>
<rect x="809" y="341" width="4" height="2.6" fill="url(#t108)"/>
</g>
<path d="M727.5 29V369M727 29.5H1193M1192.5 29V365M723 364.5H1193M782.5 365v4M723 325.5h4.5M838.5 365v4M723 285.5h4.5M893.5 365v4M723 245.5h4.5M949.5 365v4M723 205.5h4.5M1004.5 365v4M723 165.5h4.5M1059.5 365v4M723 125.5h4.5M1115.5 365v4M723 86.5h4.5M1170.5 365v4M723 46.5h4.5" stroke="#8e8e8e" stroke-width="1" fill="none"/>
<text x="727.5" y="379.5" font-size="10" fill="#e6e6e6" text-anchor="middle">0</text>
<text x="722.7" y="369.7" font-size="10" fill="#e6e6e6" text-anchor="end">0</text>
<text x="782.9" y="379.5" font-size="10" fill="#e6e6e6" text-anchor="middle">0.1</text>
<text x="722.7" y="329.8" font-size="10" fill="#e6e6e6" text-anchor="end">0.1</text>
<text x="838.3" y="379.5" font-size="10" fill="#e6e6e6" text-anchor="middle">0.2</text>
<text x="722.7" y="290.0" font-size="10" fill="#e6e6e6" text-anchor="end">0.2</text>
<text x="893.7" y="379.5" font-size="10" fill="#e6e6e6" text-anchor="middle">0.3</text>
<text x="722.7" y="250.1" font-size="10" fill="#e6e6e6" text-anchor="end">0.3</text>
<text x="949.1" y="379.5" font-size="10" fill="#e6e6e6" text-anchor="middle">0.4</text>
<text x="722.7" y="210.2" font-size="10" fill="#e6e6e6" text-anchor="end">0.4</text>
<text x="1004.5" y="379.5" font-size="10" fill="#e6e6e6" text-anchor="middle">0.5</text>
<text x="722.7" y="170.4" font-size="10" fill="#e6e6e6" text-anchor="end">0.5</text>
<text x="1060.0" y="379.5" font-size="10" fill="#e6e6e6" text-anchor="middle">0.6</text>
<text x="722.7" y="130.5" font-size="10" fill="#e6e6e6" text-anchor="end">0.6</text>
<text x="1115.4" y="379.5" font-size="10" fill="#e6e6e6" text-anchor="middle">0.7</text>
<text x="722.7" y="90.6" font-size="10" fill="#e6e6e6" text-anchor="end">0.7</text>
<text x="1170.8" y="379.5" font-size="10" fill="#e6e6e6" text-anchor="middle">0.8</text>
<text x="722.7" y="50.7" font-size="10" fill="#e6e6e6" text-anchor="end">0.8</text>
<rect x="895.2" y="228.5" width="10.4" height="9.6" stroke="#000" stroke-width="1.15" fill="none"/>
<rect x="1076.5" y="228.1" width="10.4" height="9.6" stroke="#fff" stroke-width="1" fill="#fff" fill-opacity=".06" stroke-opacity=".85"/>
<rect x="888.1" y="120.5" width="10.4" height="9.6" stroke="#fff" stroke-width="1" fill="#fff" fill-opacity=".06" stroke-opacity=".85"/>
<rect x="805.0" y="335.8" width="10.4" height="9.6" stroke="#fff" stroke-width="1" fill="#fff" fill-opacity=".06" stroke-opacity=".85"/>
<rect x="846.4" y="228.6" width="10.4" height="9.6" stroke="#fff" stroke-width="1" fill="#fff" fill-opacity=".06" stroke-opacity=".85"/>
<rect x="899.7" y="298.2" width="10.4" height="9.6" stroke="#fff" stroke-width="1" fill="#fff" fill-opacity=".06" stroke-opacity=".85"/>
<rect x="954.2" y="158.2" width="10.4" height="9.6" stroke="#fff" stroke-width="1" fill="#fff" fill-opacity=".06" stroke-opacity=".85"/>
<circle cx="901.9" cy="233.4" r="2.9" fill="#fff" stroke="#000" stroke-opacity=".75" stroke-width=".9"/>
<circle cx="901.6" cy="234.0" r="2.9" fill="#fff" stroke="#000" stroke-opacity=".75" stroke-width=".9"/>
<circle cx="1088.5" cy="233.2" r="2.9" fill="#c00010" stroke="#000" stroke-opacity=".75" stroke-width=".9"/>
<circle cx="894.4" cy="123.1" r="2.9" fill="#20b020" stroke="#000" stroke-opacity=".75" stroke-width=".9"/>
<circle cx="811.1" cy="339.9" r="2.9" fill="#1010c0" stroke="#000" stroke-opacity=".75" stroke-width=".9"/>
<circle cx="853.5" cy="231.8" r="2.9" fill="#20b0b0" stroke="#000" stroke-opacity=".75" stroke-width=".9"/>
<circle cx="904.8" cy="303.7" r="2.9" fill="#b010b0" stroke="#000" stroke-opacity=".75" stroke-width=".9"/>
<circle cx="961.5" cy="163.5" r="2.9" fill="#b0b010" stroke="#000" stroke-opacity=".75" stroke-width=".9"/>
<rect x="1009.5" y="343" width="181" height="18.3" fill="#343434"/>
<text x="1010" y="357" font-size="13.2" fill="#f0f0f0" textLength="159.5" lengthAdjust="spacingAndGlyphs" xml:space="preserve">Gamut Coverage:  99.3%</text>
</g>
<g id="inset">
<rect x="1030.3" y="33.5" width="159.0" height="127.5" fill="#777"/>
<g clip-path="url(#inclip)" shape-rendering="crispEdges">
<rect x="1031" y="34.5" width="158" height="3.6" fill="url(#i0)"/>
<rect x="1031" y="37.5" width="158" height="3.6" fill="url(#i1)"/>
<rect x="1031" y="40.5" width="158" height="3.6" fill="url(#i2)"/>
<rect x="1031" y="43.5" width="158" height="3.6" fill="url(#i3)"/>
<rect x="1031" y="46.5" width="158" height="3.6" fill="url(#i4)"/>
<rect x="1031" y="49.5" width="158" height="3.6" fill="url(#i5)"/>
<rect x="1031" y="52.5" width="158" height="3.6" fill="url(#i6)"/>
<rect x="1031" y="55.5" width="158" height="3.6" fill="url(#i7)"/>
<rect x="1031" y="58.5" width="158" height="3.6" fill="url(#i8)"/>
<rect x="1031" y="61.5" width="158" height="3.6" fill="url(#i9)"/>
<rect x="1031" y="64.5" width="158" height="3.6" fill="url(#i10)"/>
<rect x="1031" y="67.5" width="158" height="3.6" fill="url(#i11)"/>
<rect x="1031" y="70.5" width="158" height="3.6" fill="url(#i12)"/>
<rect x="1031" y="73.5" width="158" height="3.6" fill="url(#i13)"/>
<rect x="1031" y="76.5" width="158" height="3.6" fill="url(#i14)"/>
<rect x="1031" y="79.5" width="158" height="3.6" fill="url(#i15)"/>
<rect x="1031" y="82.5" width="158" height="3.6" fill="url(#i16)"/>
<rect x="1031" y="85.5" width="158" height="3.6" fill="url(#i17)"/>
<rect x="1031" y="88.5" width="158" height="3.6" fill="url(#i18)"/>
<rect x="1031" y="91.5" width="158" height="3.6" fill="url(#i19)"/>
<rect x="1031" y="94.5" width="158" height="3.6" fill="url(#i20)"/>
<rect x="1031" y="97.5" width="158" height="3.6" fill="url(#i21)"/>
<rect x="1031" y="100.5" width="158" height="3.6" fill="url(#i22)"/>
<rect x="1031" y="103.5" width="158" height="3.6" fill="url(#i23)"/>
<rect x="1031" y="106.5" width="158" height="3.6" fill="url(#i24)"/>
<rect x="1031" y="109.5" width="158" height="3.6" fill="url(#i25)"/>
<rect x="1031" y="112.5" width="158" height="3.6" fill="url(#i26)"/>
<rect x="1031" y="115.5" width="158" height="3.6" fill="url(#i27)"/>
<rect x="1031" y="118.5" width="158" height="3.6" fill="url(#i28)"/>
<rect x="1031" y="121.5" width="158" height="3.6" fill="url(#i29)"/>
<rect x="1031" y="124.5" width="158" height="3.6" fill="url(#i30)"/>
<rect x="1031" y="127.5" width="158" height="3.6" fill="url(#i31)"/>
<rect x="1031" y="130.5" width="158" height="3.6" fill="url(#i32)"/>
<rect x="1031" y="133.5" width="158" height="3.6" fill="url(#i33)"/>
<rect x="1031" y="136.5" width="158" height="3.6" fill="url(#i34)"/>
<rect x="1031" y="139.5" width="158" height="3.6" fill="url(#i35)"/>
<rect x="1031" y="142.5" width="158" height="3.6" fill="url(#i36)"/>
<rect x="1031" y="145.5" width="158" height="3.6" fill="url(#i37)"/>
<rect x="1031" y="148.5" width="158" height="3.6" fill="url(#i38)"/>
<rect x="1031" y="151.5" width="158" height="3.6" fill="url(#i39)"/>
<rect x="1031" y="154.5" width="158" height="3.6" fill="url(#i40)"/>
<rect x="1031" y="157.5" width="158" height="3.6" fill="url(#i41)"/>
</g>
<rect x="1104.6" y="92.4" width="10" height="8.8" fill="none" stroke="#000" stroke-width="1.2"/>
<circle cx="1118" cy="100" r="3" fill="#b4b4b4" stroke="#111" stroke-width=".8"/>
<circle cx="1115.6" cy="104.2" r="3" fill="#fff" stroke="#111" stroke-width=".8"/>
</g>
<g id="reading" fill="#f0f0f0">
<text x="12" y="429.8" font-size="22" textLength="157" lengthAdjust="spacingAndGlyphs">Current Reading</text>
<text x="12" y="458" font-size="18.4" textLength="73" lengthAdjust="spacingAndGlyphs">x: 0.3152</text>
<text x="12" y="485.7" font-size="18.4" textLength="74" lengthAdjust="spacingAndGlyphs">y: 0.3276</text>
<text x="12" y="513.6" font-size="18.4" textLength="69" lengthAdjust="spacingAndGlyphs">fL: 16.94</text>
<text x="12" y="541.9" font-size="18.4" textLength="104" lengthAdjust="spacingAndGlyphs">cd/m²: 58.04</text>
</g>
<g id="rgbbal">
<text x="336.7" y="411.8" font-size="10.5" fill="#e6e6e6" text-anchor="middle">RGB Balance</text>
<rect x="249.5" y="415.5" width="188.0" height="123.0" fill="#242424"/>
<text x="245.0" y="419.3" font-size="10.2" fill="#e6e6e6" text-anchor="end">4</text>
<text x="245.0" y="450.3" font-size="10.2" fill="#e6e6e6" text-anchor="end">2</text>
<text x="245.0" y="481.3" font-size="10.2" fill="#e6e6e6" text-anchor="end">0</text>
<text x="245.0" y="511.3" font-size="10.2" fill="#e6e6e6" text-anchor="end">-2</text>
<text x="245.0" y="542.3" font-size="10.2" fill="#e6e6e6" text-anchor="end">-4</text>
<path d="M249.5 446.5H437.5M249.5 477.5H437.5M249.5 507.5H437.5" stroke="#7c7c7c" stroke-width="1" fill="none"/>
<path d="M249.5 414.5V541.5M437.5 414.5V541.5M245.5 415.5H437.5M245.5 538.5H437.5M245.5 446.5h4M245.5 477.5h4M245.5 507.5h4" stroke="#8e8e8e" stroke-width="1" fill="none"/>
<rect x="268" y="422" width="49.8" height="55.5" fill="url(#gr)" stroke="#000" stroke-width="1.1"/>
<rect x="317.8" y="477.5" width="49.4" height="16.6" fill="url(#gg)" stroke="#000" stroke-width="1.1"/>
<rect x="367.2" y="473.8" width="50" height="3.7" fill="url(#gb)" stroke="#000" stroke-width="1.1"/>
<text x="343.6" y="549.8" font-size="10.5" fill="#e6e6e6" text-anchor="middle">White</text>
</g>
<g id="table">
<rect x="453" y="399.8" width="499.6" height="26.099999999999966" fill="url(#th)"/>
<rect x="453" y="425.9" width="499.6" height="24.1" fill="#454545"/>
<rect x="453" y="449.7" width="499.6" height="23.9" fill="#7a7a7a"/>
<rect x="453" y="473.3" width="499.6" height="23.8" fill="#454545"/>
<rect x="453" y="496.8" width="499.6" height="23.8" fill="#7a7a7a"/>
<rect x="453" y="520.3" width="499.6" height="24.0" fill="#454545"/>
<rect x="453" y="399.8" width="10" height="26.099999999999966" fill="#000"/>
<rect x="453" y="425.9" width="10" height="118.10000000000002" fill="url(#tl)"/>
<text x="523.7" y="419" font-size="14.2" fill="#f0f0f0" textLength="29.8" lengthAdjust="spacingAndGlyphs">White</text>
<text x="577.6" y="419" font-size="14.2" fill="#f0f0f0" textLength="18.5" lengthAdjust="spacingAndGlyphs">Red</text>
<text x="631.3" y="419" font-size="14.2" fill="#f0f0f0" textLength="30.9" lengthAdjust="spacingAndGlyphs">Green</text>
<text x="685.5" y="419" font-size="14.2" fill="#f0f0f0" textLength="22.1" lengthAdjust="spacingAndGlyphs">Blue</text>
<text x="732.3" y="419" font-size="14.2" fill="#f0f0f0" textLength="23.8" lengthAdjust="spacingAndGlyphs">Cyan</text>
<text x="786.3" y="419" font-size="14.2" fill="#f0f0f0" textLength="44.2" lengthAdjust="spacingAndGlyphs">Magenta</text>
<text x="840.7" y="419" font-size="14.2" fill="#f0f0f0" textLength="32" lengthAdjust="spacingAndGlyphs">Yellow</text>
<text x="894.6" y="419" font-size="14.2" fill="#f0f0f0" textLength="29" lengthAdjust="spacingAndGlyphs">100W</text>
<text x="466.5" y="444.2" font-size="15.8" fill="#f2f2f2" textLength="44.8" lengthAdjust="spacingAndGlyphs">x: CIE31</text>
<text transform="translate(523.7,444.2) scale(0.8,1)" font-size="15.8" fill="#f2f2f2">0.3152</text>
<text transform="translate(577.6,444.2) scale(0.8,1)" font-size="15.8" fill="#f2f2f2">0.6520</text>
<text transform="translate(631.3,444.2) scale(0.8,1)" font-size="15.8" fill="#f2f2f2">0.3017</text>
<text transform="translate(685.5,444.2) scale(0.8,1)" font-size="15.8" fill="#f2f2f2">0.1515</text>
<text transform="translate(732.3,444.2) scale(0.8,1)" font-size="15.8" fill="#f2f2f2">0.2279</text>
<text transform="translate(786.3,444.2) scale(0.8,1)" font-size="15.8" fill="#f2f2f2">0.3205</text>
<text transform="translate(840.7,444.2) scale(0.8,1)" font-size="15.8" fill="#f2f2f2">0.4229</text>
<text transform="translate(894.6,444.2) scale(0.8,1)" font-size="15.8" fill="#f2f2f2">0.3147</text>
<text x="466.5" y="467.7" font-size="15.8" fill="#ececec" textLength="45.2" lengthAdjust="spacingAndGlyphs">y: CIE31</text>
<text transform="translate(523.7,467.7) scale(0.8,1)" font-size="15.8" fill="#ececec">0.3276</text>
<text transform="translate(577.6,467.7) scale(0.8,1)" font-size="15.8" fill="#ececec">0.3280</text>
<text transform="translate(631.3,467.7) scale(0.8,1)" font-size="15.8" fill="#ececec">0.6041</text>
<text transform="translate(685.5,467.7) scale(0.8,1)" font-size="15.8" fill="#ececec">0.0604</text>
<text transform="translate(732.3,467.7) scale(0.8,1)" font-size="15.8" fill="#ececec">0.3317</text>
<text transform="translate(786.3,467.7) scale(0.8,1)" font-size="15.8" fill="#ececec">0.1512</text>
<text transform="translate(840.7,467.7) scale(0.8,1)" font-size="15.8" fill="#ececec">0.5030</text>
<text transform="translate(894.6,467.7) scale(0.8,1)" font-size="15.8" fill="#ececec">0.3260</text>
<text x="466.5" y="491.3" font-size="15.8" fill="#f2f2f2" textLength="7.4" lengthAdjust="spacingAndGlyphs">Y</text>
<text transform="translate(523.7,491.3) scale(0.8,1)" font-size="15.8" fill="#f2f2f2">58.0373</text>
<text transform="translate(577.6,491.3) scale(0.8,1)" font-size="15.8" fill="#f2f2f2">11.6719</text>
<text transform="translate(631.3,491.3) scale(0.8,1)" font-size="15.8" fill="#f2f2f2">36.6240</text>
<text transform="translate(685.5,491.3) scale(0.8,1)" font-size="15.8" fill="#f2f2f2">4.2080</text>
<text transform="translate(732.3,491.3) scale(0.8,1)" font-size="15.8" fill="#f2f2f2">42.2809</text>
<text transform="translate(786.3,491.3) scale(0.8,1)" font-size="15.8" fill="#f2f2f2">16.1025</text>
<text transform="translate(840.7,491.3) scale(0.8,1)" font-size="15.8" fill="#f2f2f2">53.3119</text>
<text transform="translate(894.6,491.3) scale(0.8,1)" font-size="15.8" fill="#f2f2f2">106.3341</text>
<text x="466.5" y="514.8" font-size="15.8" fill="#ececec" textLength="48.5" lengthAdjust="spacingAndGlyphs">Target Y</text>
<text transform="translate(523.7,514.8) scale(0.8,1)" font-size="15.8" fill="#ececec">58.0373</text>
<text transform="translate(577.6,514.8) scale(0.8,1)" font-size="15.8" fill="#ececec">12.3420</text>
<text transform="translate(631.3,514.8) scale(0.8,1)" font-size="15.8" fill="#ececec">41.5059</text>
<text transform="translate(685.5,514.8) scale(0.8,1)" font-size="15.8" fill="#ececec">4.1895</text>
<text transform="translate(732.3,514.8) scale(0.8,1)" font-size="15.8" fill="#ececec">45.6954</text>
<text transform="translate(786.3,514.8) scale(0.8,1)" font-size="15.8" fill="#ececec">16.5314</text>
<text transform="translate(840.7,514.8) scale(0.8,1)" font-size="15.8" fill="#ececec">53.8479</text>
<text transform="translate(894.6,514.8) scale(0.8,1)" font-size="15.8" fill="#ececec">106.3341</text>
<text x="466.5" y="538.4" font-size="15.8" fill="#f2f2f2" textLength="47.7" lengthAdjust="spacingAndGlyphs">ΔE 2000</text>
<text transform="translate(523.7,538.4) scale(0.8,1)" font-size="15.8" fill="#f2f2f2">2.4212</text>
<text transform="translate(577.6,538.4) scale(0.8,1)" font-size="15.8" fill="#f2f2f2">1.5259</text>
<text transform="translate(631.3,538.4) scale(0.8,1)" font-size="15.8" fill="#f2f2f2">2.8504</text>
<text transform="translate(685.5,538.4) scale(0.8,1)" font-size="15.8" fill="#f2f2f2">0.2397</text>
<text transform="translate(732.3,538.4) scale(0.8,1)" font-size="15.8" fill="#f2f2f2">1.9632</text>
<text transform="translate(786.3,538.4) scale(0.8,1)" font-size="15.8" fill="#f2f2f2">0.6176</text>
<text transform="translate(840.7,538.4) scale(0.8,1)" font-size="15.8" fill="#f2f2f2">0.9287</text>
<text transform="translate(894.6,538.4) scale(0.8,1)" font-size="15.8" fill="#f2f2f2">3.6563</text>
</g>
<g id="bottombar">
<rect x="0" y="551" width="1200" height="4.5" fill="url(#bsh)"/>
<rect x="0" y="555" width="1200" height="39" fill="url(#bbar)"/>
<path d="M2.0 594V559q0-3 3-3h87q3 0 3 3V594z" fill="url(#btns)"/>
<rect x="5.2" y="559.2" width="87.2" height="22" rx="2.5" fill="#c2c2c2" stroke="#000" stroke-opacity=".35" stroke-width="1"/>
<text x="48.8" y="591" font-size="7.2" font-weight="bold" fill="#fff" text-anchor="middle">White</text>
<path d="M97.0 594V559q0-3 3-3h87q3 0 3 3V594z" fill="url(#btn)"/>
<rect x="100.2" y="559.2" width="87.2" height="22" rx="2.5" fill="#c40000" stroke="#000" stroke-opacity=".35" stroke-width="1"/>
<text x="143.8" y="591" font-size="7.2" fill="#282828" stroke="#282828" stroke-width=".3" text-anchor="middle">Red</text>
<path d="M192.0 594V559q0-3 3-3h87q3 0 3 3V594z" fill="url(#btn)"/>
<rect x="195.2" y="559.2" width="87.2" height="22" rx="2.5" fill="#00c400" stroke="#000" stroke-opacity=".35" stroke-width="1"/>
<text x="238.8" y="591" font-size="7.2" fill="#282828" stroke="#282828" stroke-width=".3" text-anchor="middle">Green</text>
<path d="M287.0 594V559q0-3 3-3h87q3 0 3 3V594z" fill="url(#btn)"/>
<rect x="290.2" y="559.2" width="87.2" height="22" rx="2.5" fill="#0000c4" stroke="#000" stroke-opacity=".35" stroke-width="1"/>
<text x="333.8" y="591" font-size="7.2" fill="#282828" stroke="#282828" stroke-width=".3" text-anchor="middle">Blue</text>
<path d="M382.0 594V559q0-3 3-3h87q3 0 3 3V594z" fill="url(#btn)"/>
<rect x="385.2" y="559.2" width="87.2" height="22" rx="2.5" fill="#00c4c4" stroke="#000" stroke-opacity=".35" stroke-width="1"/>
<text x="428.8" y="591" font-size="7.2" fill="#282828" stroke="#282828" stroke-width=".3" text-anchor="middle">Cyan</text>
<path d="M477.0 594V559q0-3 3-3h87q3 0 3 3V594z" fill="url(#btn)"/>
<rect x="480.2" y="559.2" width="87.2" height="22" rx="2.5" fill="#c400c4" stroke="#000" stroke-opacity=".35" stroke-width="1"/>
<text x="523.8" y="591" font-size="7.2" fill="#282828" stroke="#282828" stroke-width=".3" text-anchor="middle">Magenta</text>
<path d="M572.0 594V559q0-3 3-3h87q3 0 3 3V594z" fill="url(#btn)"/>
<rect x="575.2" y="559.2" width="87.2" height="22" rx="2.5" fill="#c8c400" stroke="#000" stroke-opacity=".35" stroke-width="1"/>
<text x="618.8" y="591" font-size="7.2" fill="#282828" stroke="#282828" stroke-width=".3" text-anchor="middle">Yellow</text>
<path d="M667.0 594V559q0-3 3-3h87q3 0 3 3V594z" fill="url(#btn)"/>
<rect x="670.2" y="559.2" width="87.2" height="22" rx="2.5" fill="#ffffff" stroke="#000" stroke-opacity=".35" stroke-width="1"/>
<text x="713.8" y="591" font-size="7.2" fill="#282828" stroke="#282828" stroke-width=".3" text-anchor="middle">100W</text>
</g>
<g id="nav">
<path d="M998.8 594V558.9q0-3 3-3H1171.3V574.4H1200V594z" fill="#6c6c6c"/>
<rect x="999.6" y="556.6" width="29.4" height="10.6" fill="url(#nv)"/>
<path d="M1010.3 563l4.2-3.4l4.2 3.4z" fill="#4a4a4a"/>
<rect x="999.6" y="568" width="29.4" height="26" fill="#7c7c7c"/>
<rect x="1005.2" y="571.6" width="18.4" height="17.6" rx="1.8" fill="#a8a8a8" stroke="#141414" stroke-width="1.4"/>
<rect x="1009.6" y="576.4" width="9.3" height="8.6" fill="#080808"/>
<rect x="1030.5" y="556.6" width="28.0" height="17.3" fill="url(#nv)"/>
<rect x="1059.5" y="556.6" width="27.5" height="17.3" fill="url(#nv)"/>
<rect x="1088.0" y="556.6" width="27.0" height="17.3" fill="url(#nv)"/>
<rect x="1116.0" y="556.6" width="27.3" height="17.3" fill="url(#nv)"/>
<rect x="1144.3" y="556.6" width="26.5" height="17.3" fill="url(#nv)"/>
<path d="M1041.8 562.6h3.6l1.8 1.8v4h-5.4z" fill="#3e3e3e"/>
<path d="M1070.8 561.8l6 3.6l-6 3.6z" fill="#333"/>
<rect x="1098" y="560.5" width="7.6" height="9" fill="#5a5a5a"/><rect x="1100" y="561.5" width="3.4" height="3" fill="#c4c4c4"/><rect x="1099.6" y="566" width="4.4" height="3.5" fill="#8c8c8c"/>
<text x="1129.6" y="569.8" font-size="11.5" font-weight="bold" fill="#4a4a4a" text-anchor="middle">∞</text>
<circle cx="1157.5" cy="565.3" r="3.6" fill="#c8c8c8" stroke="#666" stroke-width="1.2"/><circle cx="1159" cy="563.6" r="1.6" fill="#555"/>
<rect x="1030.5" y="575.4" width="84.5" height="18.6" fill="url(#nv2)"/>
<rect x="1116" y="575.4" width="84" height="18.6" fill="url(#nv2)"/>
<circle cx="1049" cy="584.4" r="5.8" fill="#a6a6a6" stroke="#b4b4b4" stroke-width=".7"/>
<circle cx="1182.6" cy="584.4" r="5.8" fill="#a6a6a6" stroke="#b4b4b4" stroke-width=".7"/>
<text x="1049" y="588.6" font-size="13" font-weight="bold" fill="#3c3c3c" text-anchor="middle">«</text>
<text x="1182.6" y="588.6" font-size="13" font-weight="bold" fill="#3c3c3c" text-anchor="middle">»</text>
<text x="1065.7" y="588.8" font-size="12.4" font-weight="bold" fill="#484848" textLength="31.2" lengthAdjust="spacingAndGlyphs">Back</text>
<text x="1132.7" y="588.8" font-size="12.4" font-weight="bold" fill="#484848" textLength="32.4" lengthAdjust="spacingAndGlyphs">Next</text>
<text id="ast" x="1184.9" y="588" font-size="47" font-weight="bold" fill="#e8100c" text-anchor="middle">*</text>
</g>
<g id="logo">
<rect x="919.9" y="527.1" width="45.5" height="45.9" rx="5.2" fill="#fff"/>
<path transform="translate(910,520) scale(.10101)" d="M215 105C260 92 380 88 520 98C512 140 475 188 425 194C420 192 414 187 412 182C432 168 444 148 440 130C410 126 375 126 345 130C385 200 447 262 454 322C457 392 402 460 340 522L268 522C330 450 372 390 370 345C365 290 300 230 250 165C235 145 222 125 215 105Z" fill="#383838"/>
<text x="977.1 1005.1 1038.8 1072.6 1110.1 1136.5" y="568" font-family="'DejaVu Sans Light', 'DejaVu Sans', 'Liberation Sans', sans-serif" font-weight="200" font-size="47.6" fill="#fff" stroke="#fff" stroke-width="1.3" opacity=".42">SOOMAL</text>
</g>
</svg>
</body></html>
